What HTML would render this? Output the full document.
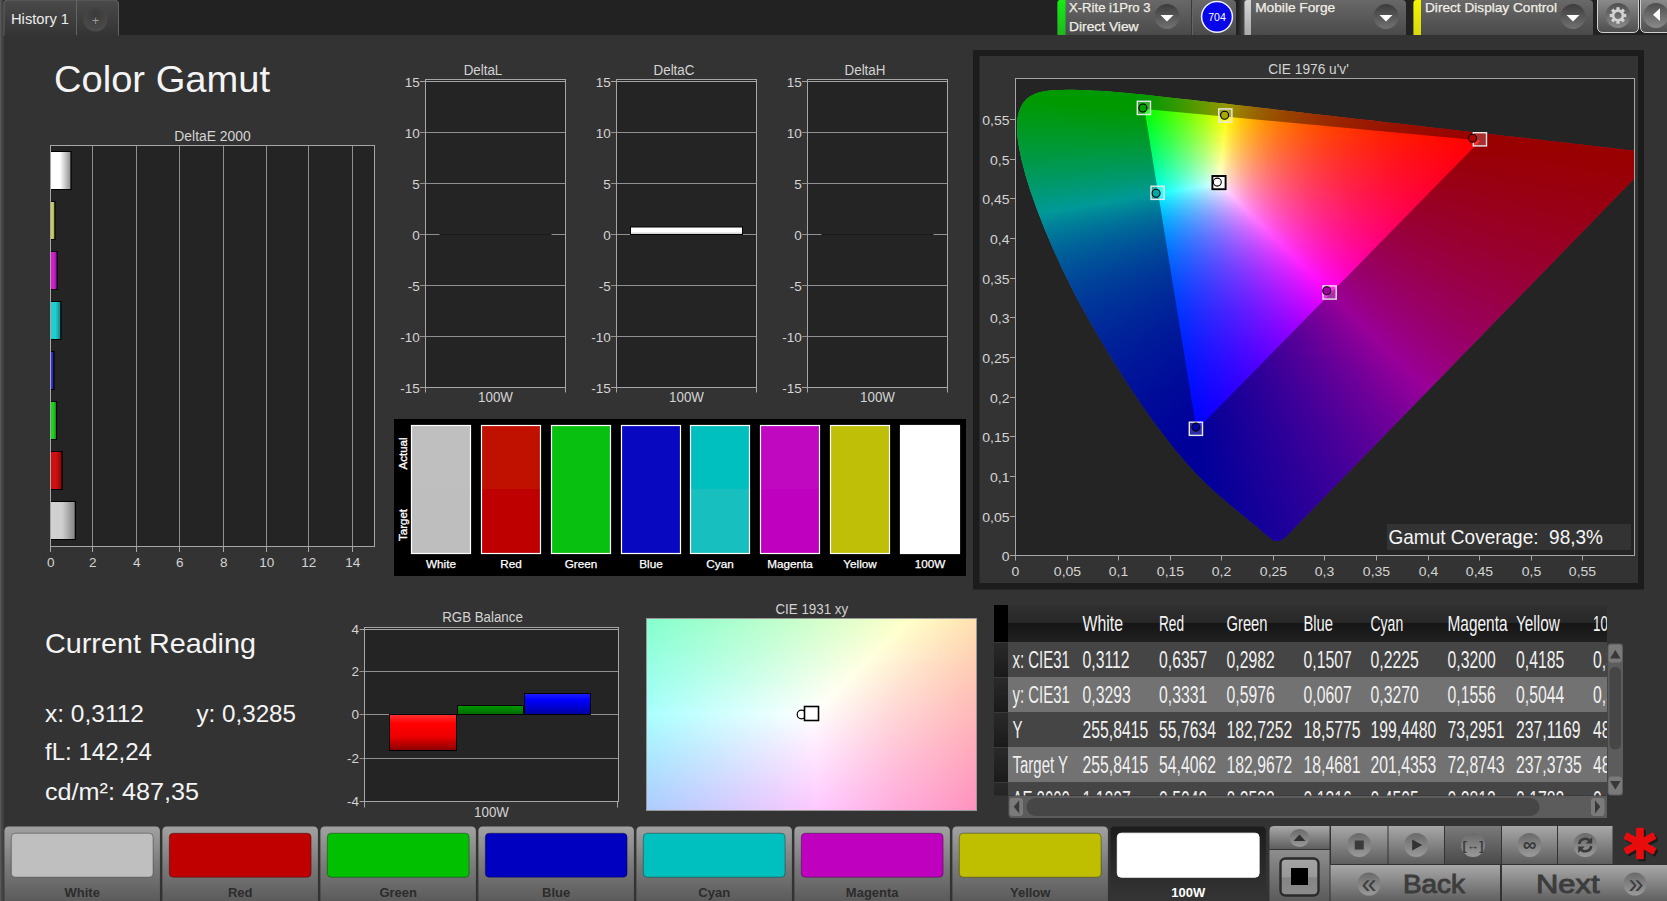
<!DOCTYPE html>
<html lang="en"><head><meta charset="utf-8"><title>Color Gamut</title>
<style>
html,body{margin:0;padding:0;background:#333;overflow:hidden}
body{width:1667px;height:901px;position:relative;font-family:"Liberation Sans",sans-serif}
svg{display:block;position:absolute;left:0;top:0}
text{font-family:"Liberation Sans",sans-serif}
</style></head><body>
<svg width="1667" height="901" viewBox="0 0 1667 901">
<defs><linearGradient id="tabg" x1="0" y1="0" x2="0" y2="1"><stop offset="0" stop-color="#4a4a4a"/><stop offset="1" stop-color="#343434"/></linearGradient>
<radialGradient id="plusg" cx="0.5" cy="0.3" r="0.7"><stop offset="0" stop-color="#3a3a3a"/><stop offset="1" stop-color="#4c4c4c"/></radialGradient>
<linearGradient id="png" x1="0" y1="0" x2="0" y2="1"><stop offset="0" stop-color="#686868"/><stop offset="1" stop-color="#4a4a4a"/></linearGradient>
<linearGradient id="ddg" x1="0" y1="0" x2="0" y2="1"><stop offset="0" stop-color="#3c3c3c"/><stop offset="1" stop-color="#727272"/></linearGradient>
<linearGradient id="btg" x1="0" y1="0" x2="0" y2="1"><stop offset="0" stop-color="#8c8c8c"/><stop offset="1" stop-color="#4e4e4e"/></linearGradient>
<linearGradient id="gst" x1="0" y1="0" x2="0" y2="1"><stop offset="0" stop-color="#10f010"/><stop offset="1" stop-color="#1fb81f"/></linearGradient>
<linearGradient id="shd"><stop offset="0" stop-color="#222222"/><stop offset="1" stop-color="#4c4c4c"/></linearGradient>
<linearGradient id="lgs" x1="0" y1="0" x2="0" y2="1"><stop offset="0" stop-color="#d6d6d6"/><stop offset="1" stop-color="#aaaaaa"/></linearGradient>
<linearGradient id="yst" x1="0" y1="0" x2="0" y2="1"><stop offset="0" stop-color="#f4f400"/><stop offset="1" stop-color="#d8d810"/></linearGradient>
<linearGradient id="ddg2" x1="0" y1="0" x2="0" y2="1"><stop offset="0" stop-color="#4e4e4e"/><stop offset="1" stop-color="#8a8a8a"/></linearGradient>
<linearGradient id="be0"><stop offset="0" stop-color="#ffffff"/><stop offset="0.45" stop-color="#ffffff"/><stop offset="1" stop-color="#8a8a8a"/></linearGradient>
<linearGradient id="be1"><stop offset="0" stop-color="#c8c864"/><stop offset="0.45" stop-color="#c8c864"/><stop offset="1" stop-color="#8a8a40"/></linearGradient>
<linearGradient id="be2"><stop offset="0" stop-color="#d020d0"/><stop offset="0.45" stop-color="#d020d0"/><stop offset="1" stop-color="#801080"/></linearGradient>
<linearGradient id="be3"><stop offset="0" stop-color="#20d0d0"/><stop offset="0.45" stop-color="#20d0d0"/><stop offset="1" stop-color="#108080"/></linearGradient>
<linearGradient id="be4"><stop offset="0" stop-color="#3030d0"/><stop offset="0.45" stop-color="#3030d0"/><stop offset="1" stop-color="#101080"/></linearGradient>
<linearGradient id="be5"><stop offset="0" stop-color="#20d020"/><stop offset="0.45" stop-color="#20d020"/><stop offset="1" stop-color="#108010"/></linearGradient>
<linearGradient id="be6"><stop offset="0" stop-color="#d01010"/><stop offset="0.45" stop-color="#d01010"/><stop offset="1" stop-color="#800808"/></linearGradient>
<linearGradient id="be7"><stop offset="0" stop-color="#d0d0d0"/><stop offset="0.45" stop-color="#d0d0d0"/><stop offset="1" stop-color="#808080"/></linearGradient>
<linearGradient id="dcb" x1="0" y1="0" x2="0" y2="1"><stop offset="0" stop-color="#ffffff"/><stop offset="0.6" stop-color="#ffffff"/><stop offset="1" stop-color="#c0c0c0"/></linearGradient>
<linearGradient id="rbr" x1="0" y1="0" x2="0" y2="1"><stop offset="0" stop-color="#ff3030"/><stop offset="0.25" stop-color="#ff0000"/><stop offset="0.6" stop-color="#f00000"/><stop offset="1" stop-color="#8a0000"/></linearGradient>
<linearGradient id="rbg" x1="0" y1="0" x2="0" y2="1"><stop offset="0" stop-color="#009a00"/><stop offset="1" stop-color="#006a00"/></linearGradient>
<linearGradient id="rbb" x1="0" y1="0" x2="0" y2="1"><stop offset="0" stop-color="#2020ff"/><stop offset="0.3" stop-color="#0000ff"/><stop offset="1" stop-color="#0000a0"/></linearGradient>
<linearGradient id="x0"><stop offset="0" stop-color="#86ffce"/><stop offset="0.4073" stop-color="#c1ffcc"/><stop offset="0.7964" stop-color="#ffffc9"/><stop offset="1" stop-color="#ffe0af"/></linearGradient><linearGradient id="x1"><stop offset="0" stop-color="#87ffd0"/><stop offset="0.4043" stop-color="#c1ffcd"/><stop offset="0.7872" stop-color="#ffffcb"/><stop offset="1" stop-color="#ffdfb0"/></linearGradient><linearGradient id="x2"><stop offset="0" stop-color="#88ffd1"/><stop offset="0.3982" stop-color="#c2ffcf"/><stop offset="0.7781" stop-color="#ffc"/><stop offset="1" stop-color="#ffddb0"/></linearGradient><linearGradient id="x3"><stop offset="0" stop-color="#89ffd2"/><stop offset="0.3951" stop-color="#c3ffd0"/><stop offset="0.769" stop-color="#ffffce"/><stop offset="1" stop-color="#ffdcb0"/></linearGradient><linearGradient id="x4"><stop offset="0" stop-color="#8affd4"/><stop offset="0.3891" stop-color="#c3ffd2"/><stop offset="0.7599" stop-color="#ffffcf"/><stop offset="1" stop-color="#ffdbb1"/></linearGradient><linearGradient id="x5"><stop offset="0" stop-color="#8bffd5"/><stop offset="0.383" stop-color="#c3ffd3"/><stop offset="0.7508" stop-color="#ffffd1"/><stop offset="1" stop-color="#ffd9b1"/></linearGradient><linearGradient id="x6"><stop offset="0" stop-color="#8cffd7"/><stop offset="0.3769" stop-color="#c4ffd5"/><stop offset="0.7416" stop-color="#ffffd3"/><stop offset="1" stop-color="#ffd8b1"/></linearGradient><linearGradient id="x7"><stop offset="0" stop-color="#8dffd8"/><stop offset="0.3739" stop-color="#c5ffd6"/><stop offset="0.7295" stop-color="#ffffd4"/><stop offset="1" stop-color="#ffd7b1"/></linearGradient><linearGradient id="x8"><stop offset="0" stop-color="#8effda"/><stop offset="0.3678" stop-color="#c5ffd8"/><stop offset="0.7204" stop-color="#ffffd6"/><stop offset="1" stop-color="#ffd5b2"/></linearGradient><linearGradient id="x9"><stop offset="0" stop-color="#8fffdb"/><stop offset="0.3647" stop-color="#c6ffd9"/><stop offset="0.7112" stop-color="#ffffd8"/><stop offset="1" stop-color="#ffd4b2"/></linearGradient><linearGradient id="x10"><stop offset="0" stop-color="#90ffdd"/><stop offset="0.3587" stop-color="#c6ffdb"/><stop offset="0.7021" stop-color="#ffffd9"/><stop offset="1" stop-color="#ffd3b2"/></linearGradient><linearGradient id="x11"><stop offset="0" stop-color="#92ffde"/><stop offset="0.3556" stop-color="#c7ffdd"/><stop offset="0.693" stop-color="#ffffdb"/><stop offset="1" stop-color="#ffd1b2"/></linearGradient><linearGradient id="x12"><stop offset="0" stop-color="#93ffe0"/><stop offset="0.3495" stop-color="#c7ffde"/><stop offset="0.6839" stop-color="#ffd"/><stop offset="1" stop-color="#ffd0b3"/></linearGradient><linearGradient id="x13"><stop offset="0" stop-color="#94ffe1"/><stop offset="0.3435" stop-color="#c8ffe0"/><stop offset="0.6748" stop-color="#ffffde"/><stop offset="1" stop-color="#ffcfb3"/></linearGradient><linearGradient id="x14"><stop offset="0" stop-color="#95ffe3"/><stop offset="0.3374" stop-color="#c8ffe1"/><stop offset="0.6657" stop-color="#ffffe0"/><stop offset="0.8267" stop-color="#ffe5c8"/><stop offset="1" stop-color="#ffcdb3"/></linearGradient><linearGradient id="x15"><stop offset="0" stop-color="#96ffe4"/><stop offset="0.3283" stop-color="#c8ffe3"/><stop offset="0.6565" stop-color="#ffffe2"/><stop offset="0.8207" stop-color="#ffe4ca"/><stop offset="1" stop-color="#ffccb3"/></linearGradient><linearGradient id="x16"><stop offset="0" stop-color="#97ffe6"/><stop offset="0.3283" stop-color="#caffe5"/><stop offset="0.6444" stop-color="#ffffe3"/><stop offset="0.8207" stop-color="#ffe3ca"/><stop offset="1" stop-color="#ffcbb4"/></linearGradient><linearGradient id="x17"><stop offset="0" stop-color="#98ffe7"/><stop offset="0.3252" stop-color="#caffe6"/><stop offset="0.6353" stop-color="#ffffe5"/><stop offset="0.8146" stop-color="#ffe2cb"/><stop offset="1" stop-color="#ffc9b4"/></linearGradient><linearGradient id="x18"><stop offset="0" stop-color="#99ffe9"/><stop offset="0.3191" stop-color="#cbffe8"/><stop offset="0.6261" stop-color="#ffffe7"/><stop offset="0.8055" stop-color="#ffe2cc"/><stop offset="1" stop-color="#ffc8b4"/></linearGradient><linearGradient id="x19"><stop offset="0" stop-color="#9affea"/><stop offset="0.3161" stop-color="#ccffea"/><stop offset="0.617" stop-color="#ffffe9"/><stop offset="0.7994" stop-color="#ffe2cd"/><stop offset="1" stop-color="#ffc7b4"/></linearGradient><linearGradient id="x20"><stop offset="0" stop-color="#9cffec"/><stop offset="0.31" stop-color="#ccffeb"/><stop offset="0.6079" stop-color="#ffffea"/><stop offset="0.7933" stop-color="#ffe1ce"/><stop offset="1" stop-color="#ffc6b5"/></linearGradient><linearGradient id="x21"><stop offset="0" stop-color="#9dffee"/><stop offset="0.304" stop-color="#cdffed"/><stop offset="0.5988" stop-color="#ffffec"/><stop offset="0.7903" stop-color="#ffe0cf"/><stop offset="1" stop-color="#ffc4b5"/></linearGradient><linearGradient id="x22"><stop offset="0" stop-color="#9effef"/><stop offset="0.5897" stop-color="#ffe"/><stop offset="0.7842" stop-color="#ffdfd0"/><stop offset="1" stop-color="#ffc3b5"/></linearGradient><linearGradient id="x23"><stop offset="0" stop-color="#9ffff1"/><stop offset="0.5805" stop-color="#fffff0"/><stop offset="0.7781" stop-color="#ffdfd1"/><stop offset="1" stop-color="#ffc2b5"/></linearGradient><linearGradient id="x24"><stop offset="0" stop-color="#a0fff2"/><stop offset="0.5684" stop-color="#fffff2"/><stop offset="0.7781" stop-color="#ffddd1"/><stop offset="1" stop-color="#ffc0b6"/></linearGradient><linearGradient id="x25"><stop offset="0" stop-color="#a2fff4"/><stop offset="0.5593" stop-color="#fffff3"/><stop offset="0.772" stop-color="#ffddd2"/><stop offset="1" stop-color="#ffbfb6"/></linearGradient><linearGradient id="x26"><stop offset="0" stop-color="#a3fff6"/><stop offset="0.5502" stop-color="#fffff5"/><stop offset="0.766" stop-color="#ffdcd4"/><stop offset="1" stop-color="#ffbeb6"/></linearGradient><linearGradient id="x27"><stop offset="0" stop-color="#a4fff7"/><stop offset="0.541" stop-color="#fffff7"/><stop offset="0.7599" stop-color="#ffdcd5"/><stop offset="1" stop-color="#ffbdb6"/></linearGradient><linearGradient id="x28"><stop offset="0" stop-color="#a5fff9"/><stop offset="0.5319" stop-color="#fffff9"/><stop offset="0.7538" stop-color="#ffdbd6"/><stop offset="1" stop-color="#ffbbb7"/></linearGradient><linearGradient id="x29"><stop offset="0" stop-color="#a7fffb"/><stop offset="0.5228" stop-color="#fffffb"/><stop offset="0.7477" stop-color="#ffdad7"/><stop offset="1" stop-color="#ffbab7"/></linearGradient><linearGradient id="x30"><stop offset="0" stop-color="#a8fffd"/><stop offset="0.5137" stop-color="#fffffc"/><stop offset="0.7416" stop-color="#ffdad8"/><stop offset="1" stop-color="#ffb9b7"/></linearGradient><linearGradient id="x31"><stop offset="0" stop-color="#a9fffe"/><stop offset="0.5046" stop-color="#fffffe"/><stop offset="0.7356" stop-color="#ffd9d9"/><stop offset="1" stop-color="#ffb8b7"/></linearGradient><linearGradient id="x32"><stop offset="0" stop-color="#aafeff"/><stop offset="0.5015" stop-color="#fffeff"/><stop offset="0.7356" stop-color="#ffd8d9"/><stop offset="1" stop-color="#ffb7b8"/></linearGradient><linearGradient id="x33"><stop offset="0" stop-color="#aafcff"/><stop offset="0.5015" stop-color="#fffcff"/><stop offset="0.7356" stop-color="#ffd6d9"/><stop offset="1" stop-color="#ffb5b8"/></linearGradient><linearGradient id="x34"><stop offset="0" stop-color="#aafaff"/><stop offset="0.5015" stop-color="#fffaff"/><stop offset="0.7386" stop-color="#ffd4d9"/><stop offset="1" stop-color="#ffb4b8"/></linearGradient><linearGradient id="x35"><stop offset="0" stop-color="#aaf9ff"/><stop offset="0.5046" stop-color="#fff8ff"/><stop offset="0.7386" stop-color="#ffd3d9"/><stop offset="1" stop-color="#ffb3b8"/></linearGradient><linearGradient id="x36"><stop offset="0" stop-color="#aaf7ff"/><stop offset="0.5046" stop-color="#fff6ff"/><stop offset="0.7386" stop-color="#ffd2d9"/><stop offset="1" stop-color="#ffb2b9"/></linearGradient><linearGradient id="x37"><stop offset="0" stop-color="#aaf5ff"/><stop offset="0.5046" stop-color="#fff4ff"/><stop offset="0.7386" stop-color="#ffd0da"/><stop offset="1" stop-color="#ffb0b9"/></linearGradient><linearGradient id="x38"><stop offset="0" stop-color="#aaf4ff"/><stop offset="0.5046" stop-color="#fff3ff"/><stop offset="0.7386" stop-color="#ffcfda"/><stop offset="1" stop-color="#ffafb9"/></linearGradient><linearGradient id="x39"><stop offset="0" stop-color="#aaf2ff"/><stop offset="0.5076" stop-color="#fff1ff"/><stop offset="0.7386" stop-color="#ffcdda"/><stop offset="1" stop-color="#ffaeb9"/></linearGradient><linearGradient id="x40"><stop offset="0" stop-color="#abf0ff"/><stop offset="0.5076" stop-color="#ffefff"/><stop offset="0.7386" stop-color="#ffccda"/><stop offset="1" stop-color="#ffadba"/></linearGradient><linearGradient id="x41"><stop offset="0" stop-color="#abefff"/><stop offset="0.5076" stop-color="#ffedff"/><stop offset="0.7386" stop-color="#ffcbda"/><stop offset="1" stop-color="#ffacba"/></linearGradient><linearGradient id="x42"><stop offset="0" stop-color="#abedff"/><stop offset="0.5076" stop-color="#ffebff"/><stop offset="0.7416" stop-color="#ffc9da"/><stop offset="1" stop-color="#ffabba"/></linearGradient><linearGradient id="x43"><stop offset="0" stop-color="#abebff"/><stop offset="0.5106" stop-color="#ffe9ff"/><stop offset="0.7416" stop-color="#ffc7da"/><stop offset="1" stop-color="#ffa9ba"/></linearGradient><linearGradient id="x44"><stop offset="0" stop-color="#abeaff"/><stop offset="0.5106" stop-color="#ffe8ff"/><stop offset="0.7416" stop-color="#ffc6db"/><stop offset="1" stop-color="#ffa8bb"/></linearGradient><linearGradient id="x45"><stop offset="0" stop-color="#abe8ff"/><stop offset="0.5106" stop-color="#ffe6ff"/><stop offset="0.7416" stop-color="#ffc5db"/><stop offset="1" stop-color="#ffa7bb"/></linearGradient><linearGradient id="x46"><stop offset="0" stop-color="#abe6ff"/><stop offset="0.5106" stop-color="#ffe4ff"/><stop offset="0.7416" stop-color="#ffc3db"/><stop offset="1" stop-color="#ffa6bb"/></linearGradient><linearGradient id="x47"><stop offset="0" stop-color="#abe5ff"/><stop offset="0.5137" stop-color="#ffe2ff"/><stop offset="0.7416" stop-color="#ffc2db"/><stop offset="1" stop-color="#ffa5bb"/></linearGradient><linearGradient id="x48"><stop offset="0" stop-color="#abe3ff"/><stop offset="0.5137" stop-color="#ffe1ff"/><stop offset="0.7416" stop-color="#ffc1db"/><stop offset="1" stop-color="#ffa4bb"/></linearGradient><linearGradient id="x49"><stop offset="0" stop-color="#abe2ff"/><stop offset="0.5137" stop-color="#ffdfff"/><stop offset="0.7416" stop-color="#ffbfdc"/><stop offset="1" stop-color="#ffa2bc"/></linearGradient><linearGradient id="x50"><stop offset="0" stop-color="#ace0ff"/><stop offset="0.5137" stop-color="#ffdeff"/><stop offset="0.7447" stop-color="#ffbddb"/><stop offset="1" stop-color="#ffa1bc"/></linearGradient><linearGradient id="x51"><stop offset="0" stop-color="#acdeff"/><stop offset="0.5137" stop-color="#ffdcff"/><stop offset="0.7477" stop-color="#ffbcdb"/><stop offset="1" stop-color="#ffa0bc"/></linearGradient><linearGradient id="x52"><stop offset="0" stop-color="#acddff"/><stop offset="0.5167" stop-color="#ffdaff"/><stop offset="0.7447" stop-color="#ffbbdc"/><stop offset="1" stop-color="#ff9fbc"/></linearGradient><linearGradient id="x53"><stop offset="0" stop-color="#acdbff"/><stop offset="0.5167" stop-color="#ffd9ff"/><stop offset="0.7447" stop-color="#ffbadc"/><stop offset="1" stop-color="#ff9ebd"/></linearGradient><linearGradient id="x54"><stop offset="0" stop-color="#acdaff"/><stop offset="0.5167" stop-color="#ffd7ff"/><stop offset="0.7447" stop-color="#ffb8dc"/><stop offset="1" stop-color="#ff9dbd"/></linearGradient><linearGradient id="x55"><stop offset="0" stop-color="#acd8ff"/><stop offset="0.5167" stop-color="#ffd5ff"/><stop offset="0.7477" stop-color="#ffb7dc"/><stop offset="1" stop-color="#ff9cbd"/></linearGradient><linearGradient id="x56"><stop offset="0" stop-color="#acd7ff"/><stop offset="0.5198" stop-color="#ffd3ff"/><stop offset="0.7477" stop-color="#ffb5dc"/><stop offset="1" stop-color="#ff9bbd"/></linearGradient><linearGradient id="x57"><stop offset="0" stop-color="#acd5ff"/><stop offset="0.5198" stop-color="#ffd2ff"/><stop offset="0.7477" stop-color="#ffb4dc"/><stop offset="1" stop-color="#ff99bd"/></linearGradient><linearGradient id="x58"><stop offset="0" stop-color="#acd4ff"/><stop offset="0.5198" stop-color="#ffd0ff"/><stop offset="0.7477" stop-color="#ffb3dc"/><stop offset="1" stop-color="#ff98be"/></linearGradient><linearGradient id="x59"><stop offset="0" stop-color="#acd2ff"/><stop offset="0.5198" stop-color="#ffcfff"/><stop offset="0.7508" stop-color="#ffb1dc"/><stop offset="1" stop-color="#ff97be"/></linearGradient><linearGradient id="x60"><stop offset="0" stop-color="#add1ff"/><stop offset="0.5228" stop-color="#ffcdff"/><stop offset="0.7477" stop-color="#ffb0dd"/><stop offset="1" stop-color="#ff96be"/></linearGradient><linearGradient id="x61"><stop offset="0" stop-color="#adcfff"/><stop offset="0.5228" stop-color="#ffcbff"/><stop offset="0.7477" stop-color="#ffafdd"/><stop offset="1" stop-color="#ff95be"/></linearGradient><linearGradient id="x62"><stop offset="0" stop-color="#adceff"/><stop offset="0.5228" stop-color="#ffcaff"/><stop offset="0.7477" stop-color="#ffaddd"/><stop offset="1" stop-color="#ff94bf"/></linearGradient><linearGradient id="x63"><stop offset="0" stop-color="#adccff"/><stop offset="0.5228" stop-color="#ffc9ff"/><stop offset="0.7508" stop-color="#ffacdd"/><stop offset="1" stop-color="#ff93bf"/></linearGradient>
<linearGradient id="u0"><stop offset="0" stop-color="#0f0"/><stop offset="1" stop-color="#0f0"/></linearGradient><linearGradient id="u1"><stop offset="0" stop-color="#0f0"/><stop offset="1" stop-color="#0f0"/></linearGradient><linearGradient id="u2"><stop offset="0" stop-color="#0f0"/><stop offset="1" stop-color="#0f0"/></linearGradient><linearGradient id="u3"><stop offset="0" stop-color="#0f0"/><stop offset="0.8702" stop-color="#0f0"/><stop offset="1" stop-color="#29ff00"/></linearGradient><linearGradient id="u4"><stop offset="0" stop-color="#0f0"/><stop offset="0.7697" stop-color="#0f0"/><stop offset="0.875" stop-color="#25ff00"/><stop offset="1" stop-color="#58ff00"/></linearGradient><linearGradient id="u5"><stop offset="0" stop-color="#00ff02"/><stop offset="0.6977" stop-color="#0f0"/><stop offset="0.8547" stop-color="#4f0"/><stop offset="1" stop-color="#8dff00"/></linearGradient><linearGradient id="u6"><stop offset="0" stop-color="#00ff06"/><stop offset="0.1979" stop-color="#0f0"/><stop offset="0.6354" stop-color="#0f0"/><stop offset="0.7292" stop-color="#2cff00"/><stop offset="0.8229" stop-color="#5dff00"/><stop offset="0.9115" stop-color="#90ff00"/><stop offset="1" stop-color="#caff00"/></linearGradient><linearGradient id="u7"><stop offset="0" stop-color="#00ff09"/><stop offset="0.2857" stop-color="#0f0"/><stop offset="0.5857" stop-color="#0f0"/><stop offset="0.6714" stop-color="#2bff00"/><stop offset="0.7714" stop-color="#6f0"/><stop offset="0.881" stop-color="#aeff00"/><stop offset="0.9857" stop-color="#feff00"/><stop offset="1" stop-color="#fff400"/></linearGradient><linearGradient id="u8"><stop offset="0" stop-color="#00ff0d"/><stop offset="0.3581" stop-color="#0f0"/><stop offset="0.5459" stop-color="#0f0"/><stop offset="0.6463" stop-color="#3bff00"/><stop offset="0.738" stop-color="#7f0"/><stop offset="0.8253" stop-color="#b9ff00"/><stop offset="0.9083" stop-color="#ff0"/><stop offset="0.952" stop-color="#ffdc00"/><stop offset="1" stop-color="#ffbd00"/></linearGradient><linearGradient id="u9"><stop offset="0" stop-color="#00ff10"/><stop offset="0.4211" stop-color="#0f0"/><stop offset="0.5101" stop-color="#0f0"/><stop offset="0.5992" stop-color="#38ff00"/><stop offset="0.6842" stop-color="#74ff00"/><stop offset="0.7652" stop-color="#b5ff00"/><stop offset="0.8462" stop-color="#fffe00"/><stop offset="0.8785" stop-color="#ffe100"/><stop offset="0.915" stop-color="#ffc600"/><stop offset="0.9555" stop-color="#ffae00"/><stop offset="1" stop-color="#ff9700"/></linearGradient><linearGradient id="u10"><stop offset="0" stop-color="#00ff14"/><stop offset="0.4774" stop-color="#0f0"/><stop offset="0.5564" stop-color="#34ff00"/><stop offset="0.6391" stop-color="#74ff00"/><stop offset="0.7105" stop-color="#b2ff00"/><stop offset="0.7895" stop-color="#fffd00"/><stop offset="0.8308" stop-color="#ffd700"/><stop offset="0.8797" stop-color="#ffb400"/><stop offset="0.9361" stop-color="#ff9500"/><stop offset="1" stop-color="#ff7900"/></linearGradient><linearGradient id="u11"><stop offset="0" stop-color="#00ff17"/><stop offset="0.4542" stop-color="#01ff04"/><stop offset="0.5317" stop-color="#39ff00"/><stop offset="0.6021" stop-color="#74ff00"/><stop offset="0.6655" stop-color="#afff00"/><stop offset="0.7394" stop-color="#fdff00"/><stop offset="0.743" stop-color="#fffd00"/><stop offset="0.7923" stop-color="#ffcd00"/><stop offset="0.8521" stop-color="#ffa300"/><stop offset="0.919" stop-color="#ff8100"/><stop offset="1" stop-color="#ff6300"/></linearGradient><linearGradient id="u12"><stop offset="0" stop-color="#00ff1b"/><stop offset="0.4286" stop-color="#00ff09"/><stop offset="0.5017" stop-color="#39ff04"/><stop offset="0.5714" stop-color="#7f0"/><stop offset="0.6379" stop-color="#baff00"/><stop offset="0.6977" stop-color="#feff00"/><stop offset="0.7276" stop-color="#ffdf00"/><stop offset="0.7542" stop-color="#ffc700"/><stop offset="0.7874" stop-color="#ffae00"/><stop offset="0.8206" stop-color="#f90"/><stop offset="0.9003" stop-color="#ff7200"/><stop offset="1" stop-color="#ff5200"/></linearGradient><linearGradient id="u13"><stop offset="0" stop-color="#00ff1e"/><stop offset="0.4062" stop-color="#00ff0d"/><stop offset="0.4688" stop-color="#33ff0a"/><stop offset="0.5375" stop-color="#73ff05"/><stop offset="0.6" stop-color="#b6ff00"/><stop offset="0.6594" stop-color="#ff0"/><stop offset="0.6875" stop-color="#ffde00"/><stop offset="0.7188" stop-color="#ffc000"/><stop offset="0.7531" stop-color="#ffa600"/><stop offset="0.7937" stop-color="#ff8d00"/><stop offset="0.8375" stop-color="#f70"/><stop offset="0.8844" stop-color="#ff6400"/><stop offset="1" stop-color="#ff4200"/></linearGradient><linearGradient id="u14"><stop offset="0" stop-color="#0f2"/><stop offset="0.3887" stop-color="#01ff12"/><stop offset="0.454" stop-color="#3bff0e"/><stop offset="0.5134" stop-color="#76ff0a"/><stop offset="0.5697" stop-color="#b7ff06"/><stop offset="0.6261" stop-color="#fffe01"/><stop offset="0.6558" stop-color="#ffda00"/><stop offset="0.6884" stop-color="#ffba00"/><stop offset="0.727" stop-color="#ff9d00"/><stop offset="0.7685" stop-color="#ff8400"/><stop offset="0.816" stop-color="#ff6d00"/><stop offset="0.8694" stop-color="#ff5900"/><stop offset="0.9318" stop-color="#ff4600"/><stop offset="1" stop-color="#ff3600"/></linearGradient><linearGradient id="u15"><stop offset="0" stop-color="#00ff25"/><stop offset="0.369" stop-color="#00ff17"/><stop offset="0.4282" stop-color="#37ff13"/><stop offset="0.4873" stop-color="#76ff0f"/><stop offset="0.5408" stop-color="#b7ff0b"/><stop offset="0.5915" stop-color="#fcff07"/><stop offset="0.5944" stop-color="#fffe07"/><stop offset="0.6282" stop-color="#ffd303"/><stop offset="0.662" stop-color="#ffb200"/><stop offset="0.7014" stop-color="#ff9400"/><stop offset="0.7465" stop-color="#ff7a00"/><stop offset="0.7972" stop-color="#ff6300"/><stop offset="0.8563" stop-color="#ff4e00"/><stop offset="0.9239" stop-color="#ff3b00"/><stop offset="1" stop-color="#ff2b00"/></linearGradient><linearGradient id="u16"><stop offset="0" stop-color="#00ff29"/><stop offset="0.3522" stop-color="#00ff1b"/><stop offset="0.4059" stop-color="#34ff19"/><stop offset="0.4624" stop-color="#73ff15"/><stop offset="0.5161" stop-color="#b7ff11"/><stop offset="0.5645" stop-color="#fdff0d"/><stop offset="0.6022" stop-color="#ffcf08"/><stop offset="0.6371" stop-color="#ffad04"/><stop offset="0.6774" stop-color="#ff8e01"/><stop offset="0.7258" stop-color="#ff7200"/><stop offset="0.7796" stop-color="#ff5a00"/><stop offset="0.8441" stop-color="#ff4500"/><stop offset="0.9167" stop-color="#ff3200"/><stop offset="1" stop-color="#f20"/></linearGradient><linearGradient id="u17"><stop offset="0" stop-color="#00ff2c"/><stop offset="0.3393" stop-color="#01ff20"/><stop offset="0.3933" stop-color="#39ff1d"/><stop offset="0.4447" stop-color="#76ff1a"/><stop offset="0.4936" stop-color="#b7ff17"/><stop offset="0.5398" stop-color="#feff13"/><stop offset="0.5758" stop-color="#ffce0d"/><stop offset="0.6118" stop-color="#ffa908"/><stop offset="0.6555" stop-color="#ff8804"/><stop offset="0.7044" stop-color="#ff6c01"/><stop offset="0.7635" stop-color="#ff5300"/><stop offset="0.8303" stop-color="#ff3d00"/><stop offset="0.91" stop-color="#ff2b00"/><stop offset="1" stop-color="#ff1b00"/></linearGradient><linearGradient id="u18"><stop offset="0" stop-color="#00ff30"/><stop offset="0.3243" stop-color="#00ff25"/><stop offset="0.3759" stop-color="#39ff23"/><stop offset="0.4251" stop-color="#76ff20"/><stop offset="0.4717" stop-color="#b8ff1d"/><stop offset="0.516" stop-color="#ffff1a"/><stop offset="0.5504" stop-color="#ffcd12"/><stop offset="0.5872" stop-color="#ffa60d"/><stop offset="0.6314" stop-color="#ff8408"/><stop offset="0.6855" stop-color="#ff6503"/><stop offset="0.7469" stop-color="#ff4c00"/><stop offset="0.8182" stop-color="#ff3600"/><stop offset="0.9017" stop-color="#ff2400"/><stop offset="1" stop-color="#ff1400"/></linearGradient><linearGradient id="u19"><stop offset="0" stop-color="#00ff34"/><stop offset="0.3113" stop-color="#00ff2a"/><stop offset="0.3585" stop-color="#35ff28"/><stop offset="0.408" stop-color="#75ff25"/><stop offset="0.4528" stop-color="#b8ff23"/><stop offset="0.4953" stop-color="#ffff20"/><stop offset="0.5118" stop-color="#ffe41b"/><stop offset="0.5283" stop-color="#ffcd18"/><stop offset="0.5684" stop-color="#ffa110"/><stop offset="0.6132" stop-color="#ff7e0b"/><stop offset="0.6675" stop-color="#ff6006"/><stop offset="0.7311" stop-color="#ff4601"/><stop offset="0.8066" stop-color="#ff3000"/><stop offset="0.8962" stop-color="#ff1d00"/><stop offset="1" stop-color="#ff0e00"/></linearGradient><linearGradient id="u20"><stop offset="0" stop-color="#00ff37"/><stop offset="0.3009" stop-color="#01ff2f"/><stop offset="0.3484" stop-color="#3aff2d"/><stop offset="0.3914" stop-color="#75ff2b"/><stop offset="0.4321" stop-color="#b4ff29"/><stop offset="0.4751" stop-color="#fffe26"/><stop offset="0.491" stop-color="#ffe321"/><stop offset="0.509" stop-color="#ffc91c"/><stop offset="0.5475" stop-color="#ff9e14"/><stop offset="0.595" stop-color="#ff790e"/><stop offset="0.6493" stop-color="#ff5a08"/><stop offset="0.7149" stop-color="#ff4103"/><stop offset="0.7941" stop-color="#ff2a00"/><stop offset="0.8891" stop-color="#ff1800"/><stop offset="1" stop-color="#ff0800"/></linearGradient><linearGradient id="u21"><stop offset="0" stop-color="#00ff3b"/><stop offset="0.2898" stop-color="#00ff34"/><stop offset="0.3355" stop-color="#3aff32"/><stop offset="0.3769" stop-color="#75ff31"/><stop offset="0.4139" stop-color="#b1ff2f"/><stop offset="0.4575" stop-color="#fffd2c"/><stop offset="0.4728" stop-color="#ffe227"/><stop offset="0.4902" stop-color="#ffc822"/><stop offset="0.5294" stop-color="#ff9b18"/><stop offset="0.5773" stop-color="#ff7511"/><stop offset="0.634" stop-color="#ff560a"/><stop offset="0.7015" stop-color="#ff3b05"/><stop offset="0.7843" stop-color="#ff2500"/><stop offset="0.8824" stop-color="#ff1300"/><stop offset="1" stop-color="#ff0400"/></linearGradient><linearGradient id="u22"><stop offset="0" stop-color="#00ff3f"/><stop offset="0.2788" stop-color="#00ff39"/><stop offset="0.3187" stop-color="#33ff38"/><stop offset="0.3606" stop-color="#72ff37"/><stop offset="0.3962" stop-color="#adff35"/><stop offset="0.4382" stop-color="#fdff34"/><stop offset="0.4403" stop-color="#fffc33"/><stop offset="0.457" stop-color="#ffdd2c"/><stop offset="0.4738" stop-color="#ffc426"/><stop offset="0.4927" stop-color="#ffac21"/><stop offset="0.5136" stop-color="#ff961c"/><stop offset="0.5618" stop-color="#ff7013"/><stop offset="0.6205" stop-color="#ff500c"/><stop offset="0.6918" stop-color="#ff3506"/><stop offset="0.7778" stop-color="#ff2001"/><stop offset="0.8868" stop-color="#ff0d00"/><stop offset="1" stop-color="#f00"/></linearGradient><linearGradient id="u23"><stop offset="0" stop-color="#00ff43"/><stop offset="0.2713" stop-color="#01ff3e"/><stop offset="0.3117" stop-color="#39ff3d"/><stop offset="0.3482" stop-color="#71ff3d"/><stop offset="0.3866" stop-color="#b5ff3b"/><stop offset="0.4231" stop-color="#feff3a"/><stop offset="0.4251" stop-color="#fffb39"/><stop offset="0.4413" stop-color="#ffdd32"/><stop offset="0.4595" stop-color="#ffc02b"/><stop offset="0.4798" stop-color="#ffa725"/><stop offset="0.5" stop-color="#ff911f"/><stop offset="0.5486" stop-color="#ff6b16"/><stop offset="0.6093" stop-color="#ff4b0e"/><stop offset="0.6883" stop-color="#ff2f07"/><stop offset="0.7834" stop-color="#ff1802"/><stop offset="0.9393" stop-color="#ff0200"/><stop offset="1" stop-color="#f00"/></linearGradient><linearGradient id="u24"><stop offset="0" stop-color="#00ff46"/><stop offset="0.2622" stop-color="#0f4"/><stop offset="0.3033" stop-color="#3bff43"/><stop offset="0.3405" stop-color="#78ff42"/><stop offset="0.3757" stop-color="#b9ff42"/><stop offset="0.409" stop-color="#ffff41"/><stop offset="0.4247" stop-color="#ffdf39"/><stop offset="0.4423" stop-color="#ffc231"/><stop offset="0.4618" stop-color="#ffa82a"/><stop offset="0.4834" stop-color="#ff9024"/><stop offset="0.5068" stop-color="#ff7c1e"/><stop offset="0.5342" stop-color="#ff6819"/><stop offset="0.5969" stop-color="#ff4710"/><stop offset="0.681" stop-color="#ff2a08"/><stop offset="0.7867" stop-color="#ff1202"/><stop offset="0.9178" stop-color="#f00"/><stop offset="1" stop-color="#f00"/></linearGradient><linearGradient id="u25"><stop offset="0" stop-color="#00ff4a"/><stop offset="0.2533" stop-color="#00ff49"/><stop offset="0.2892" stop-color="#35ff49"/><stop offset="0.327" stop-color="#74ff48"/><stop offset="0.3611" stop-color="#b6ff48"/><stop offset="0.3951" stop-color="#fffe48"/><stop offset="0.4121" stop-color="#ffdb3e"/><stop offset="0.4291" stop-color="#ffbe35"/><stop offset="0.448" stop-color="#ffa52e"/><stop offset="0.4707" stop-color="#ff8c27"/><stop offset="0.4953" stop-color="#ff7621"/><stop offset="0.5217" stop-color="#ff631b"/><stop offset="0.586" stop-color="#ff4212"/><stop offset="0.6767" stop-color="#ff2409"/><stop offset="0.794" stop-color="#ff0c02"/><stop offset="0.8828" stop-color="#f00"/><stop offset="1" stop-color="#f00"/></linearGradient><linearGradient id="u26"><stop offset="0" stop-color="#00ff4e"/><stop offset="0.2473" stop-color="#01ff4e"/><stop offset="0.2839" stop-color="#3aff4e"/><stop offset="0.3168" stop-color="#74ff4f"/><stop offset="0.348" stop-color="#b2ff4f"/><stop offset="0.3828" stop-color="#fffd4e"/><stop offset="0.3993" stop-color="#ffda43"/><stop offset="0.4158" stop-color="#ffbe3b"/><stop offset="0.4359" stop-color="#ffa232"/><stop offset="0.4579" stop-color="#ff892b"/><stop offset="0.4817" stop-color="#ff7424"/><stop offset="0.5092" stop-color="#ff601e"/><stop offset="0.5751" stop-color="#ff3e13"/><stop offset="0.6722" stop-color="#ff1f0a"/><stop offset="0.7985" stop-color="#ff0703"/><stop offset="0.8516" stop-color="#f00"/><stop offset="1" stop-color="#f00"/></linearGradient><linearGradient id="u27"><stop offset="0" stop-color="#00ff52"/><stop offset="0.238" stop-color="#00ff54"/><stop offset="0.2735" stop-color="#39ff54"/><stop offset="0.3055" stop-color="#74ff55"/><stop offset="0.3339" stop-color="#aeff55"/><stop offset="0.3677" stop-color="#fdff56"/><stop offset="0.3694" stop-color="#fffc55"/><stop offset="0.3854" stop-color="#ffd949"/><stop offset="0.4032" stop-color="#ffba3f"/><stop offset="0.4227" stop-color="#ff9e36"/><stop offset="0.4458" stop-color="#ff852e"/><stop offset="0.4707" stop-color="#ff6f26"/><stop offset="0.4991" stop-color="#ff5b20"/><stop offset="0.5648" stop-color="#ff3a15"/><stop offset="0.6128" stop-color="#ff290f"/><stop offset="0.6696" stop-color="#ff1a0a"/><stop offset="0.8064" stop-color="#ff0203"/><stop offset="1" stop-color="#f00"/></linearGradient><linearGradient id="u28"><stop offset="0" stop-color="#00ff56"/><stop offset="0.231" stop-color="#00ff59"/><stop offset="0.2621" stop-color="#33ff5a"/><stop offset="0.2948" stop-color="#70ff5b"/><stop offset="0.3224" stop-color="#abff5c"/><stop offset="0.3569" stop-color="#feff5d"/><stop offset="0.3586" stop-color="#fffc5c"/><stop offset="0.3741" stop-color="#ffd84f"/><stop offset="0.3914" stop-color="#ffb944"/><stop offset="0.4121" stop-color="#ff9b3a"/><stop offset="0.4345" stop-color="#ff8231"/><stop offset="0.4603" stop-color="#ff6b29"/><stop offset="0.4879" stop-color="#ff5822"/><stop offset="0.5207" stop-color="#ff451c"/><stop offset="0.5569" stop-color="#ff3516"/><stop offset="0.6034" stop-color="#ff2611"/><stop offset="0.6586" stop-color="#ff170c"/><stop offset="0.7931" stop-color="#ff0004"/><stop offset="0.8845" stop-color="#f00"/><stop offset="1" stop-color="#f00"/></linearGradient><linearGradient id="u29"><stop offset="0" stop-color="#00ff5a"/><stop offset="0.2258" stop-color="#01ff5f"/><stop offset="0.2592" stop-color="#3bff60"/><stop offset="0.2893" stop-color="#77ff62"/><stop offset="0.3194" stop-color="#bbff63"/><stop offset="0.3462" stop-color="#ffff64"/><stop offset="0.3629" stop-color="#ffd756"/><stop offset="0.3796" stop-color="#ffb84a"/><stop offset="0.3997" stop-color="#ff9a3f"/><stop offset="0.4214" stop-color="#ff8135"/><stop offset="0.4465" stop-color="#ff6a2d"/><stop offset="0.4766" stop-color="#ff5525"/><stop offset="0.5084" stop-color="#ff431e"/><stop offset="0.5452" stop-color="#ff3318"/><stop offset="0.6405" stop-color="#ff160e"/><stop offset="0.7659" stop-color="#ff0005"/><stop offset="0.893" stop-color="#f00"/><stop offset="1" stop-color="#f00"/></linearGradient><linearGradient id="u30"><stop offset="0" stop-color="#00ff5e"/><stop offset="0.2182" stop-color="#00ff65"/><stop offset="0.2508" stop-color="#3bff66"/><stop offset="0.2801" stop-color="#77ff68"/><stop offset="0.3078" stop-color="#b7ff6a"/><stop offset="0.3355" stop-color="#fffe6b"/><stop offset="0.3502" stop-color="#ffda5d"/><stop offset="0.3681" stop-color="#ffb74f"/><stop offset="0.3876" stop-color="#ff9a44"/><stop offset="0.4104" stop-color="#ff7f39"/><stop offset="0.4365" stop-color="#ff672f"/><stop offset="0.4658" stop-color="#ff5227"/><stop offset="0.4984" stop-color="#ff4020"/><stop offset="0.5358" stop-color="#ff301a"/><stop offset="0.6254" stop-color="#ff150f"/><stop offset="0.741" stop-color="#ff0007"/><stop offset="0.9023" stop-color="#f00"/><stop offset="1" stop-color="#f00"/></linearGradient><linearGradient id="u31"><stop offset="0" stop-color="#00ff62"/><stop offset="0.2168" stop-color="#00ff6b"/><stop offset="0.246" stop-color="#34ff6c"/><stop offset="0.2767" stop-color="#73ff6e"/><stop offset="0.3042" stop-color="#b3ff71"/><stop offset="0.3333" stop-color="#fffe73"/><stop offset="0.3495" stop-color="#ffd662"/><stop offset="0.3673" stop-color="#ffb354"/><stop offset="0.3867" stop-color="#ff9647"/><stop offset="0.4094" stop-color="#ff7c3c"/><stop offset="0.4353" stop-color="#ff6533"/><stop offset="0.4644" stop-color="#ff502a"/><stop offset="0.4968" stop-color="#ff3e23"/><stop offset="0.534" stop-color="#ff2e1c"/><stop offset="0.6214" stop-color="#ff1411"/><stop offset="0.733" stop-color="#ff0009"/><stop offset="0.9207" stop-color="#f00"/><stop offset="1" stop-color="#f00"/></linearGradient><linearGradient id="u32"><stop offset="0" stop-color="#0f6"/><stop offset="0.2184" stop-color="#01ff71"/><stop offset="0.2492" stop-color="#3aff73"/><stop offset="0.2767" stop-color="#73ff75"/><stop offset="0.3026" stop-color="#afff78"/><stop offset="0.3317" stop-color="#fdff7b"/><stop offset="0.3333" stop-color="#fffd7a"/><stop offset="0.3495" stop-color="#ffd568"/><stop offset="0.3673" stop-color="#ffb359"/><stop offset="0.3867" stop-color="#ff964c"/><stop offset="0.4094" stop-color="#ff7b41"/><stop offset="0.4353" stop-color="#ff6436"/><stop offset="0.4644" stop-color="#ff4f2d"/><stop offset="0.4968" stop-color="#ff3e25"/><stop offset="0.534" stop-color="#ff2e1e"/><stop offset="0.6197" stop-color="#ff1413"/><stop offset="0.7298" stop-color="#ff000a"/><stop offset="1" stop-color="#f00"/></linearGradient><linearGradient id="u33"><stop offset="0" stop-color="#00ff6a"/><stop offset="0.2172" stop-color="#0f7"/><stop offset="0.248" stop-color="#39ff79"/><stop offset="0.2755" stop-color="#73ff7c"/><stop offset="0.2998" stop-color="#acff7f"/><stop offset="0.3306" stop-color="#feff82"/><stop offset="0.3323" stop-color="#fffc81"/><stop offset="0.3468" stop-color="#ffd770"/><stop offset="0.3647" stop-color="#ffb460"/><stop offset="0.3841" stop-color="#ff9752"/><stop offset="0.4068" stop-color="#ff7c46"/><stop offset="0.4327" stop-color="#ff643b"/><stop offset="0.4619" stop-color="#ff5031"/><stop offset="0.4943" stop-color="#ff3e29"/><stop offset="0.5316" stop-color="#ff2e21"/><stop offset="0.6175" stop-color="#ff1415"/><stop offset="0.7261" stop-color="#ff000c"/><stop offset="1" stop-color="#f00"/></linearGradient><linearGradient id="u34"><stop offset="0" stop-color="#00ff6e"/><stop offset="0.2172" stop-color="#00ff7d"/><stop offset="0.2447" stop-color="#32ff7f"/><stop offset="0.2739" stop-color="#6fff83"/><stop offset="0.3031" stop-color="#b4ff86"/><stop offset="0.3306" stop-color="#feff8a"/><stop offset="0.3323" stop-color="#fffb88"/><stop offset="0.3468" stop-color="#ffd676"/><stop offset="0.3647" stop-color="#ffb365"/><stop offset="0.3841" stop-color="#ff9657"/><stop offset="0.4068" stop-color="#ff7b4a"/><stop offset="0.4327" stop-color="#ff633e"/><stop offset="0.4619" stop-color="#ff4f34"/><stop offset="0.4943" stop-color="#ff3d2b"/><stop offset="0.5316" stop-color="#ff2d24"/><stop offset="0.6159" stop-color="#ff1417"/><stop offset="0.7229" stop-color="#ff000e"/><stop offset="1" stop-color="#ff0001"/></linearGradient><linearGradient id="u35"><stop offset="0" stop-color="#00ff73"/><stop offset="0.2159" stop-color="#00ff83"/><stop offset="0.2435" stop-color="#32ff86"/><stop offset="0.2744" stop-color="#72ff8a"/><stop offset="0.3019" stop-color="#b4ff8e"/><stop offset="0.3295" stop-color="#ffff92"/><stop offset="0.3442" stop-color="#ffd97f"/><stop offset="0.362" stop-color="#ffb56c"/><stop offset="0.3815" stop-color="#ff975d"/><stop offset="0.4042" stop-color="#ff7c4f"/><stop offset="0.4302" stop-color="#ff6443"/><stop offset="0.4594" stop-color="#ff4f38"/><stop offset="0.4919" stop-color="#ff3d2f"/><stop offset="0.5292" stop-color="#ff2d27"/><stop offset="0.6136" stop-color="#ff141a"/><stop offset="0.7192" stop-color="#ff0010"/><stop offset="1" stop-color="#ff0002"/></linearGradient><linearGradient id="u36"><stop offset="0" stop-color="#0f7"/><stop offset="0.2175" stop-color="#00ff89"/><stop offset="0.2484" stop-color="#3bff8d"/><stop offset="0.276" stop-color="#76ff91"/><stop offset="0.3019" stop-color="#b4ff95"/><stop offset="0.3295" stop-color="#fffe9a"/><stop offset="0.3442" stop-color="#ffd885"/><stop offset="0.362" stop-color="#ffb472"/><stop offset="0.3815" stop-color="#ff9662"/><stop offset="0.4042" stop-color="#ff7b53"/><stop offset="0.4302" stop-color="#ff6346"/><stop offset="0.4594" stop-color="#ff4e3b"/><stop offset="0.4919" stop-color="#ff3c32"/><stop offset="0.5292" stop-color="#ff2c29"/><stop offset="0.612" stop-color="#ff131c"/><stop offset="0.7159" stop-color="#f01"/><stop offset="1" stop-color="#ff0003"/></linearGradient><linearGradient id="u37"><stop offset="0" stop-color="#00ff7b"/><stop offset="0.2163" stop-color="#00ff8f"/><stop offset="0.2439" stop-color="#33ff93"/><stop offset="0.2732" stop-color="#72ff98"/><stop offset="0.2992" stop-color="#b0ff9d"/><stop offset="0.3268" stop-color="#fcffa2"/><stop offset="0.3285" stop-color="#fffda1"/><stop offset="0.3431" stop-color="#ffd78c"/><stop offset="0.361" stop-color="#ffb378"/><stop offset="0.3805" stop-color="#ff9567"/><stop offset="0.4033" stop-color="#ff7a58"/><stop offset="0.4293" stop-color="#ff624a"/><stop offset="0.4585" stop-color="#ff4d3f"/><stop offset="0.4911" stop-color="#ff3b35"/><stop offset="0.5285" stop-color="#ff2c2c"/><stop offset="0.6098" stop-color="#ff131e"/><stop offset="0.7122" stop-color="#ff0013"/><stop offset="1" stop-color="#ff0004"/></linearGradient><linearGradient id="u38"><stop offset="0" stop-color="#00ff7f"/><stop offset="0.1187" stop-color="#00ff8a"/><stop offset="0.2163" stop-color="#00ff96"/><stop offset="0.2423" stop-color="#30ff9a"/><stop offset="0.2715" stop-color="#6eff9f"/><stop offset="0.2959" stop-color="#a8ffa4"/><stop offset="0.3268" stop-color="#fdffab"/><stop offset="0.3285" stop-color="#fffca9"/><stop offset="0.3431" stop-color="#ffd693"/><stop offset="0.361" stop-color="#ffb27e"/><stop offset="0.3805" stop-color="#ff946c"/><stop offset="0.4033" stop-color="#ff795c"/><stop offset="0.4293" stop-color="#ff614e"/><stop offset="0.4585" stop-color="#ff4d42"/><stop offset="0.4911" stop-color="#ff3b37"/><stop offset="0.5285" stop-color="#ff2b2e"/><stop offset="0.6081" stop-color="#ff1320"/><stop offset="0.7089" stop-color="#ff0015"/><stop offset="1" stop-color="#ff0005"/></linearGradient><linearGradient id="u39"><stop offset="0" stop-color="#00ff84"/><stop offset="0.1189" stop-color="#00ff8f"/><stop offset="0.2166" stop-color="#00ff9c"/><stop offset="0.2459" stop-color="#39ffa1"/><stop offset="0.272" stop-color="#71ffa6"/><stop offset="0.2997" stop-color="#b5ffad"/><stop offset="0.3257" stop-color="#feffb3"/><stop offset="0.3274" stop-color="#fffbb1"/><stop offset="0.342" stop-color="#ffd599"/><stop offset="0.3599" stop-color="#ffb184"/><stop offset="0.3795" stop-color="#ff9371"/><stop offset="0.4023" stop-color="#ff7861"/><stop offset="0.4283" stop-color="#ff6052"/><stop offset="0.4577" stop-color="#ff4c45"/><stop offset="0.4902" stop-color="#ff3a3a"/><stop offset="0.5277" stop-color="#ff2a31"/><stop offset="0.6059" stop-color="#ff1322"/><stop offset="0.7052" stop-color="#ff0017"/><stop offset="1" stop-color="#ff0006"/></linearGradient><linearGradient id="u40"><stop offset="0" stop-color="#0f8"/><stop offset="0.1189" stop-color="#00ff94"/><stop offset="0.2166" stop-color="#00ffa3"/><stop offset="0.2443" stop-color="#35ffa8"/><stop offset="0.2736" stop-color="#75ffae"/><stop offset="0.2997" stop-color="#b5ffb5"/><stop offset="0.3257" stop-color="#ffffbc"/><stop offset="0.3404" stop-color="#ffd8a3"/><stop offset="0.3583" stop-color="#ffb38b"/><stop offset="0.3779" stop-color="#ff9578"/><stop offset="0.4007" stop-color="#ff7966"/><stop offset="0.4251" stop-color="#ff6257"/><stop offset="0.4544" stop-color="#ff4d4a"/><stop offset="0.487" stop-color="#ff3b3e"/><stop offset="0.5244" stop-color="#ff2b34"/><stop offset="0.6026" stop-color="#ff1325"/><stop offset="0.702" stop-color="#ff0019"/><stop offset="0.8339" stop-color="#ff000f"/><stop offset="1" stop-color="#ff0007"/></linearGradient><linearGradient id="u41"><stop offset="0" stop-color="#00ff8d"/><stop offset="0.1175" stop-color="#00ff9a"/><stop offset="0.2153" stop-color="#00ffa9"/><stop offset="0.2414" stop-color="#31ffaf"/><stop offset="0.2708" stop-color="#71ffb5"/><stop offset="0.2969" stop-color="#b1ffbc"/><stop offset="0.3246" stop-color="#fffec4"/><stop offset="0.3393" stop-color="#ffd7aa"/><stop offset="0.3573" stop-color="#ffb291"/><stop offset="0.3768" stop-color="#ff947d"/><stop offset="0.398" stop-color="#ff7a6c"/><stop offset="0.4225" stop-color="#ff635c"/><stop offset="0.4519" stop-color="#ff4d4e"/><stop offset="0.4861" stop-color="#ff3a41"/><stop offset="0.5237" stop-color="#ff2a37"/><stop offset="0.602" stop-color="#ff1327"/><stop offset="0.6982" stop-color="#ff001b"/><stop offset="0.8303" stop-color="#ff0010"/><stop offset="1" stop-color="#ff0008"/></linearGradient><linearGradient id="u42"><stop offset="0" stop-color="#00ff91"/><stop offset="0.1191" stop-color="#00ffa0"/><stop offset="0.217" stop-color="#01ffb1"/><stop offset="0.2463" stop-color="#3affb7"/><stop offset="0.2724" stop-color="#74ffbe"/><stop offset="0.2969" stop-color="#b2ffc4"/><stop offset="0.3246" stop-color="#fffdcc"/><stop offset="0.3393" stop-color="#ffd6b1"/><stop offset="0.3573" stop-color="#ffb197"/><stop offset="0.3768" stop-color="#ff9382"/><stop offset="0.398" stop-color="#ff7970"/><stop offset="0.4225" stop-color="#ff6260"/><stop offset="0.4519" stop-color="#ff4c52"/><stop offset="0.4861" stop-color="#ff3944"/><stop offset="0.5237" stop-color="#ff2939"/><stop offset="0.6003" stop-color="#ff1229"/><stop offset="0.6966" stop-color="#ff001d"/><stop offset="0.8303" stop-color="#ff0012"/><stop offset="1" stop-color="#ff0009"/></linearGradient><linearGradient id="u43"><stop offset="0" stop-color="#00ff96"/><stop offset="0.1176" stop-color="#00ffa5"/><stop offset="0.2157" stop-color="#00ffb7"/><stop offset="0.2418" stop-color="#33ffbe"/><stop offset="0.2696" stop-color="#70ffc5"/><stop offset="0.2941" stop-color="#aeffcc"/><stop offset="0.3219" stop-color="#fdffd6"/><stop offset="0.3235" stop-color="#fffcd4"/><stop offset="0.3382" stop-color="#ffd5b8"/><stop offset="0.3562" stop-color="#ffb09d"/><stop offset="0.3758" stop-color="#ff9287"/><stop offset="0.3971" stop-color="#ff7875"/><stop offset="0.4216" stop-color="#ff6164"/><stop offset="0.451" stop-color="#ff4c55"/><stop offset="0.4853" stop-color="#ff3947"/><stop offset="0.5229" stop-color="#ff293c"/><stop offset="0.5997" stop-color="#ff122b"/><stop offset="0.6928" stop-color="#ff001f"/><stop offset="0.8268" stop-color="#ff0013"/><stop offset="1" stop-color="#ff000a"/></linearGradient><linearGradient id="u44"><stop offset="0" stop-color="#00ff9b"/><stop offset="0.1176" stop-color="#00ffab"/><stop offset="0.2157" stop-color="#00ffbe"/><stop offset="0.2402" stop-color="#2fffc4"/><stop offset="0.268" stop-color="#6cffcc"/><stop offset="0.2958" stop-color="#b2ffd5"/><stop offset="0.3219" stop-color="#feffdf"/><stop offset="0.3235" stop-color="#fffbdc"/><stop offset="0.3382" stop-color="#ffd4bf"/><stop offset="0.3562" stop-color="#ffafa4"/><stop offset="0.3758" stop-color="#ff918d"/><stop offset="0.3971" stop-color="#ff777a"/><stop offset="0.4216" stop-color="#ff6068"/><stop offset="0.451" stop-color="#ff4b59"/><stop offset="0.4853" stop-color="#ff384a"/><stop offset="0.5229" stop-color="#ff283f"/><stop offset="0.598" stop-color="#ff122e"/><stop offset="0.6895" stop-color="#ff0021"/><stop offset="0.8252" stop-color="#ff0014"/><stop offset="1" stop-color="#ff000b"/></linearGradient><linearGradient id="u45"><stop offset="0" stop-color="#00ffa0"/><stop offset="0.1178" stop-color="#00ffb1"/><stop offset="0.216" stop-color="#01ffc6"/><stop offset="0.2455" stop-color="#3cffce"/><stop offset="0.2717" stop-color="#78ffd6"/><stop offset="0.2962" stop-color="#b7ffdf"/><stop offset="0.3208" stop-color="#ffffe8"/><stop offset="0.3355" stop-color="#ffd7c9"/><stop offset="0.3535" stop-color="#ffb1ac"/><stop offset="0.3732" stop-color="#ff9294"/><stop offset="0.3944" stop-color="#ff7880"/><stop offset="0.419" stop-color="#ff606e"/><stop offset="0.4484" stop-color="#ff4b5d"/><stop offset="0.4812" stop-color="#ff394f"/><stop offset="0.5188" stop-color="#ff2842"/><stop offset="0.5941" stop-color="#ff1231"/><stop offset="0.6858" stop-color="#ff0023"/><stop offset="0.8232" stop-color="#ff0016"/><stop offset="1" stop-color="#ff000c"/></linearGradient><linearGradient id="u46"><stop offset="0" stop-color="#00ffa4"/><stop offset="0.1178" stop-color="#00ffb7"/><stop offset="0.216" stop-color="#00ffcd"/><stop offset="0.2439" stop-color="#38ffd5"/><stop offset="0.2717" stop-color="#77ffde"/><stop offset="0.2962" stop-color="#b7ffe7"/><stop offset="0.3208" stop-color="#fffef1"/><stop offset="0.3355" stop-color="#ffd6d1"/><stop offset="0.3535" stop-color="#ffb0b2"/><stop offset="0.3732" stop-color="#ff9199"/><stop offset="0.3944" stop-color="#ff7784"/><stop offset="0.419" stop-color="#ff5f72"/><stop offset="0.4484" stop-color="#ff4a60"/><stop offset="0.4812" stop-color="#ff3852"/><stop offset="0.5188" stop-color="#ff2845"/><stop offset="0.5925" stop-color="#ff1233"/><stop offset="0.6825" stop-color="#ff0025"/><stop offset="0.82" stop-color="#ff0017"/><stop offset="1" stop-color="#ff000d"/></linearGradient><linearGradient id="u47"><stop offset="0" stop-color="#00ffa9"/><stop offset="0.1184" stop-color="#00ffbd"/><stop offset="0.2155" stop-color="#00ffd4"/><stop offset="0.2401" stop-color="#30ffdc"/><stop offset="0.2697" stop-color="#73ffe6"/><stop offset="0.2944" stop-color="#b3fff0"/><stop offset="0.3207" stop-color="#fffdfa"/><stop offset="0.3355" stop-color="#ffd5d8"/><stop offset="0.352" stop-color="#ffb2bb"/><stop offset="0.3717" stop-color="#ff92a1"/><stop offset="0.3931" stop-color="#ff788b"/><stop offset="0.4178" stop-color="#ff6077"/><stop offset="0.4474" stop-color="#ff4a65"/><stop offset="0.4803" stop-color="#ff3856"/><stop offset="0.5181" stop-color="#ff2848"/><stop offset="0.5905" stop-color="#ff1236"/><stop offset="0.6809" stop-color="#ff0027"/><stop offset="0.8191" stop-color="#ff0019"/><stop offset="1" stop-color="#ff000e"/></linearGradient><linearGradient id="u48"><stop offset="0" stop-color="#00ffae"/><stop offset="0.119" stop-color="#00ffc3"/><stop offset="0.2165" stop-color="#01ffdc"/><stop offset="0.2413" stop-color="#33ffe4"/><stop offset="0.2661" stop-color="#6bffed"/><stop offset="0.2876" stop-color="#a1fff6"/><stop offset="0.3074" stop-color="#d9ffff"/><stop offset="0.3223" stop-color="#fff7fe"/><stop offset="0.3372" stop-color="#ffd0dc"/><stop offset="0.3554" stop-color="#ffabbd"/><stop offset="0.3752" stop-color="#ff8da2"/><stop offset="0.3967" stop-color="#ff738c"/><stop offset="0.4215" stop-color="#ff5c79"/><stop offset="0.4512" stop-color="#ff4767"/><stop offset="0.4843" stop-color="#ff3557"/><stop offset="0.5223" stop-color="#ff264a"/><stop offset="0.5934" stop-color="#ff1138"/><stop offset="0.6793" stop-color="#ff0029"/><stop offset="0.8182" stop-color="#ff001b"/><stop offset="1" stop-color="#ff000f"/></linearGradient><linearGradient id="u49"><stop offset="0" stop-color="#00ffb3"/><stop offset="0.1194" stop-color="#00ffc9"/><stop offset="0.2172" stop-color="#00ffe3"/><stop offset="0.2537" stop-color="#4cfff0"/><stop offset="0.2886" stop-color="#a1ffff"/><stop offset="0.3267" stop-color="#ffedfe"/><stop offset="0.3416" stop-color="#ffc7dd"/><stop offset="0.3599" stop-color="#ffa4be"/><stop offset="0.3798" stop-color="#ff87a4"/><stop offset="0.4013" stop-color="#ff6f8e"/><stop offset="0.4262" stop-color="#ff597b"/><stop offset="0.4561" stop-color="#ff4468"/><stop offset="0.4892" stop-color="#ff3359"/><stop offset="0.5274" stop-color="#ff244b"/><stop offset="0.5954" stop-color="#ff103a"/><stop offset="0.6783" stop-color="#ff002b"/><stop offset="0.8176" stop-color="#ff001c"/><stop offset="1" stop-color="#ff0010"/></linearGradient><linearGradient id="u50"><stop offset="0" stop-color="#00ffb8"/><stop offset="0.1181" stop-color="#00ffcf"/><stop offset="0.2163" stop-color="#00ffeb"/><stop offset="0.2396" stop-color="#2efff3"/><stop offset="0.2679" stop-color="#6effff"/><stop offset="0.3295" stop-color="#ffe2ff"/><stop offset="0.3444" stop-color="#ffbfde"/><stop offset="0.3627" stop-color="#ff9ebf"/><stop offset="0.3827" stop-color="#ff82a6"/><stop offset="0.406" stop-color="#ff698e"/><stop offset="0.4309" stop-color="#ff547b"/><stop offset="0.4609" stop-color="#ff4169"/><stop offset="0.4942" stop-color="#ff305a"/><stop offset="0.5324" stop-color="#ff214c"/><stop offset="0.5973" stop-color="#ff0f3c"/><stop offset="0.6755" stop-color="#ff002e"/><stop offset="0.817" stop-color="#ff001e"/><stop offset="1" stop-color="#ff0012"/></linearGradient><linearGradient id="u51"><stop offset="0" stop-color="#00ffbe"/><stop offset="0.1187" stop-color="#00ffd6"/><stop offset="0.2174" stop-color="#01fff3"/><stop offset="0.2475" stop-color="#3fffff"/><stop offset="0.2893" stop-color="#9aedff"/><stop offset="0.3328" stop-color="#ffd9ff"/><stop offset="0.3478" stop-color="#ffb7df"/><stop offset="0.3662" stop-color="#ff98c1"/><stop offset="0.3863" stop-color="#ff7da7"/><stop offset="0.4097" stop-color="#ff6590"/><stop offset="0.4365" stop-color="#ff507c"/><stop offset="0.4666" stop-color="#ff3d6a"/><stop offset="0.5385" stop-color="#ff1f4d"/><stop offset="0.6003" stop-color="#ff0e3d"/><stop offset="0.6739" stop-color="#ff0030"/><stop offset="0.8144" stop-color="#ff001f"/><stop offset="1" stop-color="#ff0013"/></linearGradient><linearGradient id="u52"><stop offset="0" stop-color="#00ffc3"/><stop offset="0.1191" stop-color="#00ffdc"/><stop offset="0.2181" stop-color="#00fffb"/><stop offset="0.2282" stop-color="#14ffff"/><stop offset="0.2768" stop-color="#78ebff"/><stop offset="0.3372" stop-color="#ffcfff"/><stop offset="0.354" stop-color="#ffaddc"/><stop offset="0.3725" stop-color="#ff8fbf"/><stop offset="0.3926" stop-color="#ff76a7"/><stop offset="0.4161" stop-color="#ff5f90"/><stop offset="0.443" stop-color="#ff4b7c"/><stop offset="0.4732" stop-color="#ff3a6b"/><stop offset="0.5453" stop-color="#ff1d4f"/><stop offset="0.604" stop-color="#ff0d3f"/><stop offset="0.6728" stop-color="#ff0032"/><stop offset="0.8138" stop-color="#ff0021"/><stop offset="1" stop-color="#ff0014"/></linearGradient><linearGradient id="u53"><stop offset="0" stop-color="#00ffc8"/><stop offset="0.113" stop-color="#00ffe1"/><stop offset="0.2057" stop-color="#00fffe"/><stop offset="0.2175" stop-color="#00fbff"/><stop offset="0.2766" stop-color="#74e3ff"/><stop offset="0.3406" stop-color="#ffc7ff"/><stop offset="0.3575" stop-color="#ffa6dd"/><stop offset="0.3761" stop-color="#ff8ac1"/><stop offset="0.3963" stop-color="#ff72a8"/><stop offset="0.4199" stop-color="#ff5c92"/><stop offset="0.4469" stop-color="#ff487e"/><stop offset="0.4772" stop-color="#ff376d"/><stop offset="0.5514" stop-color="#ff1a50"/><stop offset="0.6071" stop-color="#ff0c41"/><stop offset="0.6712" stop-color="#ff0035"/><stop offset="0.8128" stop-color="#ff0023"/><stop offset="1" stop-color="#ff0015"/></linearGradient><linearGradient id="u54"><stop offset="0" stop-color="#00ffce"/><stop offset="0.1" stop-color="#00ffe4"/><stop offset="0.1847" stop-color="#0ff"/><stop offset="0.2186" stop-color="#01f3ff"/><stop offset="0.2814" stop-color="#7bdaff"/><stop offset="0.3441" stop-color="#ffbeff"/><stop offset="0.361" stop-color="#ff9fde"/><stop offset="0.3797" stop-color="#ff84c2"/><stop offset="0.4" stop-color="#ff6daa"/><stop offset="0.4237" stop-color="#ff5893"/><stop offset="0.4508" stop-color="#ff4580"/><stop offset="0.4814" stop-color="#ff356e"/><stop offset="0.5559" stop-color="#ff1951"/><stop offset="0.6695" stop-color="#ff0037"/><stop offset="0.8119" stop-color="#ff0025"/><stop offset="1" stop-color="#ff0016"/></linearGradient><linearGradient id="u55"><stop offset="0" stop-color="#00ffd3"/><stop offset="0.0884" stop-color="#00ffe7"/><stop offset="0.165" stop-color="#0ff"/><stop offset="0.2194" stop-color="#00ecff"/><stop offset="0.284" stop-color="#7ad2ff"/><stop offset="0.3486" stop-color="#ffb6ff"/><stop offset="0.3656" stop-color="#ff98df"/><stop offset="0.3844" stop-color="#ff7fc3"/><stop offset="0.4065" stop-color="#ff67a9"/><stop offset="0.4303" stop-color="#ff5394"/><stop offset="0.4575" stop-color="#ff4180"/><stop offset="0.4881" stop-color="#ff316f"/><stop offset="0.5629" stop-color="#ff1752"/><stop offset="0.6684" stop-color="#ff0039"/><stop offset="0.8112" stop-color="#ff0026"/><stop offset="1" stop-color="#ff0018"/></linearGradient><linearGradient id="u56"><stop offset="0" stop-color="#00ffd8"/><stop offset="0.0769" stop-color="#00ffeb"/><stop offset="0.1436" stop-color="#0ff"/><stop offset="0.2188" stop-color="#00e5ff"/><stop offset="0.2838" stop-color="#76cbff"/><stop offset="0.3521" stop-color="#ffafff"/><stop offset="0.3675" stop-color="#ff95e2"/><stop offset="0.3846" stop-color="#ff7ec8"/><stop offset="0.4034" stop-color="#ff69b2"/><stop offset="0.4256" stop-color="#ff569c"/><stop offset="0.4769" stop-color="#ff3679"/><stop offset="0.5419" stop-color="#ff1d5c"/><stop offset="0.6" stop-color="#ff0d4a"/><stop offset="0.6667" stop-color="#ff003c"/><stop offset="0.8103" stop-color="#ff0028"/><stop offset="1" stop-color="#ff0019"/></linearGradient><linearGradient id="u57"><stop offset="0" stop-color="#00ffde"/><stop offset="0.1237" stop-color="#0ff"/><stop offset="0.2199" stop-color="#01ddff"/><stop offset="0.2887" stop-color="#7cc3ff"/><stop offset="0.3557" stop-color="#ffa7ff"/><stop offset="0.3711" stop-color="#ff8fe3"/><stop offset="0.39" stop-color="#ff77c7"/><stop offset="0.4089" stop-color="#ff64b1"/><stop offset="0.4313" stop-color="#ff519c"/><stop offset="0.4828" stop-color="#ff3379"/><stop offset="0.5464" stop-color="#ff1b5d"/><stop offset="0.6014" stop-color="#ff0c4d"/><stop offset="0.6649" stop-color="#ff003f"/><stop offset="0.8093" stop-color="#ff002a"/><stop offset="1" stop-color="#ff001a"/></linearGradient><linearGradient id="u58"><stop offset="0" stop-color="#00ffe4"/><stop offset="0.1019" stop-color="#0ff"/><stop offset="0.2193" stop-color="#00d7ff"/><stop offset="0.2902" stop-color="#7cbcff"/><stop offset="0.3592" stop-color="#ffa0ff"/><stop offset="0.3748" stop-color="#ff89e3"/><stop offset="0.3921" stop-color="#ff74ca"/><stop offset="0.4111" stop-color="#ff61b4"/><stop offset="0.4335" stop-color="#ff4f9f"/><stop offset="0.4853" stop-color="#ff317c"/><stop offset="0.5492" stop-color="#ff1a5f"/><stop offset="0.6028" stop-color="#ff0c4f"/><stop offset="0.6632" stop-color="#ff0041"/><stop offset="0.8083" stop-color="#ff002c"/><stop offset="1" stop-color="#ff001b"/></linearGradient><linearGradient id="u59"><stop offset="0" stop-color="#00ffe9"/><stop offset="0.0815" stop-color="#0ff"/><stop offset="0.2201" stop-color="#00d1ff"/><stop offset="0.2894" stop-color="#75b7ff"/><stop offset="0.364" stop-color="#f9f"/><stop offset="0.3795" stop-color="#ff83e4"/><stop offset="0.3986" stop-color="#ff6dc9"/><stop offset="0.4177" stop-color="#ff5bb3"/><stop offset="0.4402" stop-color="#ff4b9f"/><stop offset="0.4922" stop-color="#ff2e7c"/><stop offset="0.5546" stop-color="#ff1861"/><stop offset="0.6049" stop-color="#ff0b51"/><stop offset="0.662" stop-color="#f04"/><stop offset="0.8076" stop-color="#ff002d"/><stop offset="1" stop-color="#ff001d"/></linearGradient><linearGradient id="u60"><stop offset="0" stop-color="#00ffef"/><stop offset="0.0592" stop-color="#0ff"/><stop offset="0.2213" stop-color="#01cbff"/><stop offset="0.2962" stop-color="#7eafff"/><stop offset="0.3676" stop-color="#ff93ff"/><stop offset="0.3833" stop-color="#ff7ee4"/><stop offset="0.4024" stop-color="#ff69ca"/><stop offset="0.4216" stop-color="#ff58b4"/><stop offset="0.4443" stop-color="#ff47a0"/><stop offset="0.4965" stop-color="#ff2c7d"/><stop offset="0.5592" stop-color="#ff1662"/><stop offset="0.6603" stop-color="#ff0046"/><stop offset="0.8066" stop-color="#ff002f"/><stop offset="1" stop-color="#ff001e"/></linearGradient><linearGradient id="u61"><stop offset="0" stop-color="#00fff5"/><stop offset="0.0368" stop-color="#0ff"/><stop offset="0.2207" stop-color="#00c5ff"/><stop offset="0.2977" stop-color="#7da9ff"/><stop offset="0.3713" stop-color="#ff8dff"/><stop offset="0.3888" stop-color="#ff76e2"/><stop offset="0.4063" stop-color="#ff64cb"/><stop offset="0.4256" stop-color="#ff54b6"/><stop offset="0.4483" stop-color="#ff44a1"/><stop offset="0.5009" stop-color="#ff2a7f"/><stop offset="0.5639" stop-color="#ff1463"/><stop offset="0.6602" stop-color="#ff0049"/><stop offset="0.8056" stop-color="#ff0031"/><stop offset="1" stop-color="#ff001f"/></linearGradient><linearGradient id="u62"><stop offset="0" stop-color="#00fffb"/><stop offset="0.0158" stop-color="#0ff"/><stop offset="0.051" stop-color="#00f5ff"/><stop offset="0.2214" stop-color="#00c0ff"/><stop offset="0.297" stop-color="#77a5ff"/><stop offset="0.3761" stop-color="#ff87ff"/><stop offset="0.3937" stop-color="#ff71e3"/><stop offset="0.4112" stop-color="#ff60cc"/><stop offset="0.4306" stop-color="#ff50b7"/><stop offset="0.4534" stop-color="#ff41a2"/><stop offset="0.5044" stop-color="#ff2881"/><stop offset="0.5677" stop-color="#ff1365"/><stop offset="0.6591" stop-color="#ff004c"/><stop offset="0.8049" stop-color="#f03"/><stop offset="1" stop-color="#ff0021"/></linearGradient><linearGradient id="u63"><stop offset="0" stop-color="#00fdff"/><stop offset="0.2226" stop-color="#01baff"/><stop offset="0.3021" stop-color="#7c9eff"/><stop offset="0.3799" stop-color="#ff81ff"/><stop offset="0.3975" stop-color="#ff6ce3"/><stop offset="0.4152" stop-color="#ff5ccc"/><stop offset="0.4346" stop-color="#ff4db8"/><stop offset="0.4576" stop-color="#ff3ea4"/><stop offset="0.5088" stop-color="#ff2682"/><stop offset="0.5724" stop-color="#ff1267"/><stop offset="0.6572" stop-color="#ff004e"/><stop offset="0.8039" stop-color="#ff0035"/><stop offset="1" stop-color="#f02"/></linearGradient><linearGradient id="u64"><stop offset="0" stop-color="#00f7ff"/><stop offset="0.222" stop-color="#00b5ff"/><stop offset="0.3037" stop-color="#7c99ff"/><stop offset="0.3837" stop-color="#ff7bff"/><stop offset="0.4014" stop-color="#ff68e4"/><stop offset="0.4192" stop-color="#ff58cd"/><stop offset="0.4618" stop-color="#ff3ba5"/><stop offset="0.5133" stop-color="#ff2484"/><stop offset="0.5773" stop-color="#ff1068"/><stop offset="0.6536" stop-color="#ff0052"/><stop offset="0.7478" stop-color="#ff003f"/><stop offset="0.8615" stop-color="#ff0030"/><stop offset="1" stop-color="#ff0023"/></linearGradient><linearGradient id="u65"><stop offset="0" stop-color="#00f1ff"/><stop offset="0.2214" stop-color="#00b0ff"/><stop offset="0.3036" stop-color="#7894ff"/><stop offset="0.3875" stop-color="#ff76ff"/><stop offset="0.4054" stop-color="#ff63e4"/><stop offset="0.4232" stop-color="#ff54ce"/><stop offset="0.4661" stop-color="#ff38a6"/><stop offset="0.5179" stop-color="#ff2285"/><stop offset="0.5804" stop-color="#ff0f6a"/><stop offset="0.6518" stop-color="#f05"/><stop offset="0.75" stop-color="#ff0041"/><stop offset="0.8625" stop-color="#ff0031"/><stop offset="1" stop-color="#ff0025"/></linearGradient><linearGradient id="u66"><stop offset="0" stop-color="#00ebff"/><stop offset="0.2226" stop-color="#01abff"/><stop offset="0.3088" stop-color="#7d8eff"/><stop offset="0.3914" stop-color="#ff71ff"/><stop offset="0.4093" stop-color="#ff5fe5"/><stop offset="0.4273" stop-color="#ff50cf"/><stop offset="0.4704" stop-color="#ff35a7"/><stop offset="0.5224" stop-color="#ff1f86"/><stop offset="0.5853" stop-color="#ff0d6b"/><stop offset="0.6517" stop-color="#ff0057"/><stop offset="0.754" stop-color="#ff0042"/><stop offset="0.8654" stop-color="#f03"/><stop offset="1" stop-color="#ff0026"/></linearGradient><linearGradient id="u67"><stop offset="0" stop-color="#00e6ff"/><stop offset="0.2234" stop-color="#00a7ff"/><stop offset="0.3117" stop-color="#7d8aff"/><stop offset="0.3964" stop-color="#ff6cff"/><stop offset="0.4144" stop-color="#ff5be5"/><stop offset="0.4324" stop-color="#ff4ccf"/><stop offset="0.4757" stop-color="#ff33a8"/><stop offset="0.5279" stop-color="#ff1d87"/><stop offset="0.591" stop-color="#ff0c6c"/><stop offset="0.6505" stop-color="#ff005a"/><stop offset="0.7586" stop-color="#f04"/><stop offset="0.8685" stop-color="#ff0034"/><stop offset="1" stop-color="#ff0028"/></linearGradient><linearGradient id="u68"><stop offset="0" stop-color="#00e1ff"/><stop offset="0.2224" stop-color="#00a2ff"/><stop offset="0.311" stop-color="#7a86ff"/><stop offset="0.3996" stop-color="#ff67ff"/><stop offset="0.4177" stop-color="#ff56e6"/><stop offset="0.4358" stop-color="#ff49d0"/><stop offset="0.4792" stop-color="#ff30a9"/><stop offset="0.5316" stop-color="#ff1b89"/><stop offset="0.5931" stop-color="#ff0b6e"/><stop offset="0.6474" stop-color="#ff005d"/><stop offset="0.7595" stop-color="#ff0045"/><stop offset="0.868" stop-color="#ff0036"/><stop offset="1" stop-color="#ff0029"/></linearGradient><linearGradient id="u69"><stop offset="0" stop-color="#00dcff"/><stop offset="0.2236" stop-color="#019eff"/><stop offset="0.3164" stop-color="#7e80ff"/><stop offset="0.4036" stop-color="#ff62ff"/><stop offset="0.44" stop-color="#ff45d1"/><stop offset="0.4836" stop-color="#ff2daa"/><stop offset="0.5364" stop-color="#ff198a"/><stop offset="0.5982" stop-color="#ff096f"/><stop offset="0.6455" stop-color="#ff0060"/><stop offset="0.7636" stop-color="#ff0047"/><stop offset="0.8709" stop-color="#ff0037"/><stop offset="1" stop-color="#ff002a"/></linearGradient><linearGradient id="u70"><stop offset="0" stop-color="#00d6ff"/><stop offset="0.223" stop-color="#009aff"/><stop offset="0.3181" stop-color="#7e7cff"/><stop offset="0.4077" stop-color="#ff5eff"/><stop offset="0.4442" stop-color="#ff42d1"/><stop offset="0.4881" stop-color="#ff2bab"/><stop offset="0.5393" stop-color="#ff188c"/><stop offset="0.6015" stop-color="#ff0871"/><stop offset="0.6435" stop-color="#ff0064"/><stop offset="0.766" stop-color="#ff0048"/><stop offset="0.872" stop-color="#ff0039"/><stop offset="1" stop-color="#ff002c"/></linearGradient><linearGradient id="u71"><stop offset="0" stop-color="#00d2ff"/><stop offset="0.2224" stop-color="#0096ff"/><stop offset="0.3162" stop-color="#7879ff"/><stop offset="0.4118" stop-color="#ff59ff"/><stop offset="0.4485" stop-color="#ff3fd2"/><stop offset="0.4926" stop-color="#ff28ac"/><stop offset="0.5441" stop-color="#ff168d"/><stop offset="0.6066" stop-color="#ff0772"/><stop offset="0.6415" stop-color="#ff0067"/><stop offset="0.7684" stop-color="#ff004a"/><stop offset="0.8732" stop-color="#ff003a"/><stop offset="1" stop-color="#ff002d"/></linearGradient><linearGradient id="u72"><stop offset="0" stop-color="#00cdff"/><stop offset="0.2251" stop-color="#0192ff"/><stop offset="0.3229" stop-color="#7d74ff"/><stop offset="0.417" stop-color="#f5f"/><stop offset="0.4539" stop-color="#ff3cd3"/><stop offset="0.4982" stop-color="#ff26ad"/><stop offset="0.5498" stop-color="#ff148e"/><stop offset="0.6107" stop-color="#ff0674"/><stop offset="0.6402" stop-color="#ff006a"/><stop offset="0.7011" stop-color="#ff005a"/><stop offset="0.7712" stop-color="#ff004c"/><stop offset="0.8764" stop-color="#ff003c"/><stop offset="1" stop-color="#ff002f"/></linearGradient><linearGradient id="u73"><stop offset="0" stop-color="#00c9ff"/><stop offset="0.2245" stop-color="#008eff"/><stop offset="0.3247" stop-color="#7d70ff"/><stop offset="0.4212" stop-color="#ff51ff"/><stop offset="0.4583" stop-color="#ff38d3"/><stop offset="0.5028" stop-color="#ff24ae"/><stop offset="0.5547" stop-color="#ff128f"/><stop offset="0.616" stop-color="#ff0475"/><stop offset="0.6382" stop-color="#ff006e"/><stop offset="0.7013" stop-color="#ff005c"/><stop offset="0.7755" stop-color="#ff004d"/><stop offset="0.8776" stop-color="#ff003d"/><stop offset="1" stop-color="#ff0030"/></linearGradient><linearGradient id="u74"><stop offset="0" stop-color="#00c4ff"/><stop offset="0.2239" stop-color="#008aff"/><stop offset="0.3246" stop-color="#7a6dff"/><stop offset="0.4254" stop-color="#ff4dff"/><stop offset="0.4627" stop-color="#ff35d4"/><stop offset="0.5075" stop-color="#ff21af"/><stop offset="0.5597" stop-color="#ff1190"/><stop offset="0.6194" stop-color="#ff0377"/><stop offset="0.6362" stop-color="#ff0071"/><stop offset="0.6922" stop-color="#ff0061"/><stop offset="0.778" stop-color="#ff004f"/><stop offset="0.8787" stop-color="#ff003f"/><stop offset="1" stop-color="#ff0032"/></linearGradient><linearGradient id="u75"><stop offset="0" stop-color="#00c0ff"/><stop offset="0.2251" stop-color="#0187ff"/><stop offset="0.3302" stop-color="#7e68ff"/><stop offset="0.4296" stop-color="#ff49ff"/><stop offset="0.469" stop-color="#ff32d3"/><stop offset="0.5122" stop-color="#ff1fb0"/><stop offset="0.5647" stop-color="#ff0f91"/><stop offset="0.6248" stop-color="#ff0278"/><stop offset="0.6979" stop-color="#ff0062"/><stop offset="0.7824" stop-color="#ff0050"/><stop offset="0.8818" stop-color="#ff0041"/><stop offset="1" stop-color="#f03"/></linearGradient><linearGradient id="u76"><stop offset="0" stop-color="#00bcff"/><stop offset="0.2245" stop-color="#0083ff"/><stop offset="0.3321" stop-color="#7e65ff"/><stop offset="0.434" stop-color="#ff45ff"/><stop offset="0.4717" stop-color="#ff30d5"/><stop offset="0.5151" stop-color="#ff1eb2"/><stop offset="0.5679" stop-color="#ff0e93"/><stop offset="0.6283" stop-color="#ff017a"/><stop offset="0.7" stop-color="#ff0064"/><stop offset="0.7849" stop-color="#ff0052"/><stop offset="0.883" stop-color="#ff0042"/><stop offset="1" stop-color="#ff0035"/></linearGradient><linearGradient id="u77"><stop offset="0" stop-color="#00b7ff"/><stop offset="0.2239" stop-color="#0080ff"/><stop offset="0.3226" stop-color="#7065ff"/><stop offset="0.4402" stop-color="#ff41fd"/><stop offset="0.4782" stop-color="#ff2cd4"/><stop offset="0.5218" stop-color="#ff1bb2"/><stop offset="0.5731" stop-color="#ff0c94"/><stop offset="0.6338" stop-color="#ff007b"/><stop offset="0.704" stop-color="#f06"/><stop offset="0.7875" stop-color="#ff0053"/><stop offset="0.8861" stop-color="#f04"/><stop offset="1" stop-color="#ff0036"/></linearGradient><linearGradient id="u78"><stop offset="0" stop-color="#00b4ff"/><stop offset="0.2267" stop-color="#017dff"/><stop offset="0.3295" stop-color="#7460ff"/><stop offset="0.4457" stop-color="#ff3dfd"/><stop offset="0.4838" stop-color="#ff29d4"/><stop offset="0.5276" stop-color="#ff19b2"/><stop offset="0.579" stop-color="#ff0a95"/><stop offset="0.6381" stop-color="#ff007d"/><stop offset="0.7086" stop-color="#ff0067"/><stop offset="0.7905" stop-color="#f05"/><stop offset="0.8876" stop-color="#ff0045"/><stop offset="1" stop-color="#ff0038"/></linearGradient><linearGradient id="u79"><stop offset="0" stop-color="#00b0ff"/><stop offset="0.2261" stop-color="#007aff"/><stop offset="0.3314" stop-color="#745dff"/><stop offset="0.4502" stop-color="#ff3afd"/><stop offset="0.4866" stop-color="#ff27d7"/><stop offset="0.5307" stop-color="#ff17b5"/><stop offset="0.5824" stop-color="#ff0997"/><stop offset="0.6264" stop-color="#ff0084"/><stop offset="0.6418" stop-color="#ff007e"/><stop offset="0.7107" stop-color="#ff0069"/><stop offset="0.7931" stop-color="#ff0057"/><stop offset="0.8889" stop-color="#ff0047"/><stop offset="1" stop-color="#ff003a"/></linearGradient><linearGradient id="u80"><stop offset="0" stop-color="#00acff"/><stop offset="0.2254" stop-color="#07f"/><stop offset="0.3314" stop-color="#715bff"/><stop offset="0.4547" stop-color="#ff37fd"/><stop offset="0.4913" stop-color="#ff25d7"/><stop offset="0.5356" stop-color="#ff15b5"/><stop offset="0.5761" stop-color="#ff0a9e"/><stop offset="0.6204" stop-color="#ff018a"/><stop offset="0.6474" stop-color="#ff007f"/><stop offset="0.7168" stop-color="#ff006a"/><stop offset="0.7977" stop-color="#ff0058"/><stop offset="0.8921" stop-color="#ff0048"/><stop offset="1" stop-color="#ff003b"/></linearGradient><linearGradient id="u81"><stop offset="0" stop-color="#00a8ff"/><stop offset="0.2267" stop-color="#0173ff"/><stop offset="0.3353" stop-color="#7357ff"/><stop offset="0.4593" stop-color="#ff33fd"/><stop offset="0.4961" stop-color="#ff22d8"/><stop offset="0.5407" stop-color="#ff13b6"/><stop offset="0.5795" stop-color="#ff09a0"/><stop offset="0.6221" stop-color="#ff008c"/><stop offset="0.6512" stop-color="#ff0081"/><stop offset="0.7209" stop-color="#ff006c"/><stop offset="0.8004" stop-color="#ff005a"/><stop offset="0.8934" stop-color="#ff004a"/><stop offset="1" stop-color="#ff003d"/></linearGradient><linearGradient id="u82"><stop offset="0" stop-color="#00a5ff"/><stop offset="0.2261" stop-color="#0071ff"/><stop offset="0.3372" stop-color="#7354ff"/><stop offset="0.4639" stop-color="#ff30fd"/><stop offset="0.501" stop-color="#ff20d8"/><stop offset="0.5458" stop-color="#ff11b7"/><stop offset="0.5809" stop-color="#ff08a3"/><stop offset="0.6199" stop-color="#ff0090"/><stop offset="0.655" stop-color="#ff0083"/><stop offset="0.7232" stop-color="#ff006e"/><stop offset="0.8031" stop-color="#ff005b"/><stop offset="0.8947" stop-color="#ff004c"/><stop offset="1" stop-color="#ff003f"/></linearGradient><linearGradient id="u83"><stop offset="0" stop-color="#00a1ff"/><stop offset="0.2255" stop-color="#006eff"/><stop offset="0.3392" stop-color="#7351ff"/><stop offset="0.4686" stop-color="#ff2dfd"/><stop offset="0.5059" stop-color="#ff1dd9"/><stop offset="0.551" stop-color="#ff0fb8"/><stop offset="0.6176" stop-color="#ff0095"/><stop offset="0.6588" stop-color="#ff0084"/><stop offset="0.7255" stop-color="#ff0070"/><stop offset="0.8039" stop-color="#ff005e"/><stop offset="0.8941" stop-color="#ff004e"/><stop offset="1" stop-color="#ff0040"/></linearGradient><linearGradient id="u84"><stop offset="0" stop-color="#009eff"/><stop offset="0.2268" stop-color="#016bff"/><stop offset="0.3432" stop-color="#744eff"/><stop offset="0.4734" stop-color="#ff2afd"/><stop offset="0.5108" stop-color="#ff1bd9"/><stop offset="0.5542" stop-color="#ff0eba"/><stop offset="0.6154" stop-color="#f09"/><stop offset="0.6627" stop-color="#ff0086"/><stop offset="0.7298" stop-color="#ff0071"/><stop offset="0.8067" stop-color="#ff005f"/><stop offset="0.8955" stop-color="#ff0050"/><stop offset="1" stop-color="#ff0042"/></linearGradient><linearGradient id="u85"><stop offset="0" stop-color="#009aff"/><stop offset="0.2262" stop-color="#0068ff"/><stop offset="0.3452" stop-color="#744bff"/><stop offset="0.4782" stop-color="#ff27fd"/><stop offset="0.5159" stop-color="#ff19da"/><stop offset="0.5595" stop-color="#ff0cba"/><stop offset="0.6131" stop-color="#ff009d"/><stop offset="0.6687" stop-color="#ff0087"/><stop offset="0.7341" stop-color="#ff0073"/><stop offset="0.8115" stop-color="#ff0061"/><stop offset="0.8988" stop-color="#ff0051"/><stop offset="1" stop-color="#f04"/></linearGradient><linearGradient id="u86"><stop offset="0" stop-color="#0097ff"/><stop offset="0.2251" stop-color="#06f"/><stop offset="0.3466" stop-color="#7449ff"/><stop offset="0.4821" stop-color="#ff25fe"/><stop offset="0.5199" stop-color="#ff17da"/><stop offset="0.5637" stop-color="#ff0abb"/><stop offset="0.6096" stop-color="#ff00a2"/><stop offset="0.6713" stop-color="#ff0089"/><stop offset="0.7371" stop-color="#ff0074"/><stop offset="0.8127" stop-color="#ff0062"/><stop offset="0.9004" stop-color="#ff0053"/><stop offset="1" stop-color="#ff0045"/></linearGradient><linearGradient id="u87"><stop offset="0" stop-color="#0094ff"/><stop offset="0.226" stop-color="#0064ff"/><stop offset="0.346" stop-color="#7047ff"/><stop offset="0.488" stop-color="#ff22fe"/><stop offset="0.526" stop-color="#ff14db"/><stop offset="0.57" stop-color="#ff08bc"/><stop offset="0.608" stop-color="#ff00a7"/><stop offset="0.676" stop-color="#ff008a"/><stop offset="0.742" stop-color="#ff0076"/><stop offset="0.816" stop-color="#ff0064"/><stop offset="1" stop-color="#ff0047"/></linearGradient><linearGradient id="u88"><stop offset="0" stop-color="#0091ff"/><stop offset="0.2274" stop-color="#0061ff"/><stop offset="0.3541" stop-color="#7543ff"/><stop offset="0.493" stop-color="#ff1ffe"/><stop offset="0.5312" stop-color="#ff12db"/><stop offset="0.5734" stop-color="#ff07be"/><stop offset="0.6076" stop-color="#ff00ab"/><stop offset="0.6801" stop-color="#ff008c"/><stop offset="0.7445" stop-color="#ff0078"/><stop offset="0.8189" stop-color="#f06"/><stop offset="1" stop-color="#ff0049"/></linearGradient><linearGradient id="u89"><stop offset="0" stop-color="#008eff"/><stop offset="0.2267" stop-color="#005fff"/><stop offset="0.3563" stop-color="#7541ff"/><stop offset="0.498" stop-color="#ff1dfe"/><stop offset="0.5364" stop-color="#ff10db"/><stop offset="0.5789" stop-color="#ff05be"/><stop offset="0.6053" stop-color="#ff00af"/><stop offset="0.6842" stop-color="#ff008d"/><stop offset="0.749" stop-color="#ff0079"/><stop offset="0.8219" stop-color="#ff0067"/><stop offset="1" stop-color="#ff004b"/></linearGradient><linearGradient id="u90"><stop offset="0" stop-color="#008bff"/><stop offset="0.2261" stop-color="#005cff"/><stop offset="0.3544" stop-color="#713fff"/><stop offset="0.5031" stop-color="#ff1afe"/><stop offset="0.5418" stop-color="#ff0edc"/><stop offset="0.5845" stop-color="#ff04bf"/><stop offset="0.6029" stop-color="#ff00b4"/><stop offset="0.6334" stop-color="#ff00a5"/><stop offset="0.6884" stop-color="#ff008f"/><stop offset="0.7515" stop-color="#ff007b"/><stop offset="0.8248" stop-color="#ff0069"/><stop offset="1" stop-color="#ff004c"/></linearGradient><linearGradient id="u91"><stop offset="0" stop-color="#08f"/><stop offset="0.2275" stop-color="#005aff"/><stop offset="0.3627" stop-color="#763cff"/><stop offset="0.5082" stop-color="#ff18fe"/><stop offset="0.5451" stop-color="#ff0dde"/><stop offset="0.5881" stop-color="#ff02c1"/><stop offset="0.6373" stop-color="#ff00a7"/><stop offset="0.6926" stop-color="#ff0090"/><stop offset="0.7561" stop-color="#ff007c"/><stop offset="0.8279" stop-color="#ff006b"/><stop offset="1" stop-color="#ff004e"/></linearGradient><linearGradient id="u92"><stop offset="0" stop-color="#0085ff"/><stop offset="0.2268" stop-color="#0058ff"/><stop offset="0.3649" stop-color="#7639ff"/><stop offset="0.5134" stop-color="#ff15fe"/><stop offset="0.5505" stop-color="#ff0bde"/><stop offset="0.5938" stop-color="#ff01c1"/><stop offset="0.6412" stop-color="#ff00a9"/><stop offset="0.6969" stop-color="#ff0092"/><stop offset="0.7588" stop-color="#ff007e"/><stop offset="0.8289" stop-color="#ff006d"/><stop offset="1" stop-color="#ff0050"/></linearGradient><linearGradient id="u93"><stop offset="0" stop-color="#0082ff"/><stop offset="0.2261" stop-color="#0056ff"/><stop offset="0.3631" stop-color="#7238ff"/><stop offset="0.5187" stop-color="#ff13fe"/><stop offset="0.556" stop-color="#ff09de"/><stop offset="0.5996" stop-color="#ff00c2"/><stop offset="0.6473" stop-color="#ff00a9"/><stop offset="0.7012" stop-color="#ff0094"/><stop offset="0.7635" stop-color="#ff0080"/><stop offset="0.832" stop-color="#ff006f"/><stop offset="1" stop-color="#ff0052"/></linearGradient><linearGradient id="u94"><stop offset="0" stop-color="#0080ff"/><stop offset="0.2276" stop-color="#0153ff"/><stop offset="0.3716" stop-color="#7734ff"/><stop offset="0.524" stop-color="#ff11fe"/><stop offset="0.5616" stop-color="#ff07df"/><stop offset="0.6033" stop-color="#ff00c4"/><stop offset="0.6514" stop-color="#ff00ab"/><stop offset="0.7056" stop-color="#ff0095"/><stop offset="0.7662" stop-color="#ff0082"/><stop offset="0.8351" stop-color="#ff0071"/><stop offset="1" stop-color="#ff0054"/></linearGradient><linearGradient id="u95"><stop offset="0" stop-color="#007dff"/><stop offset="0.2269" stop-color="#0051ff"/><stop offset="0.3739" stop-color="#7732ff"/><stop offset="0.5294" stop-color="#ff0ffe"/><stop offset="0.5882" stop-color="#ff00d1"/><stop offset="0.6092" stop-color="#ff00c4"/><stop offset="0.6576" stop-color="#ff00ac"/><stop offset="0.7101" stop-color="#ff0097"/><stop offset="0.771" stop-color="#ff0083"/><stop offset="0.8382" stop-color="#ff0072"/><stop offset="1" stop-color="#ff0056"/></linearGradient><linearGradient id="u96"><stop offset="0" stop-color="#007aff"/><stop offset="0.2262" stop-color="#0050ff"/><stop offset="0.3721" stop-color="#7331ff"/><stop offset="0.5349" stop-color="#ff0cfe"/><stop offset="0.5856" stop-color="#ff00d7"/><stop offset="0.6152" stop-color="#ff00c5"/><stop offset="0.6617" stop-color="#ff00ad"/><stop offset="0.7146" stop-color="#ff0098"/><stop offset="0.7738" stop-color="#ff0085"/><stop offset="0.8414" stop-color="#ff0074"/><stop offset="1" stop-color="#ff0058"/></linearGradient><linearGradient id="u97"><stop offset="0" stop-color="#0078ff"/><stop offset="0.2277" stop-color="#014dff"/><stop offset="0.3787" stop-color="#772eff"/><stop offset="0.5404" stop-color="#ff0afe"/><stop offset="0.5851" stop-color="#ff00db"/><stop offset="0.6191" stop-color="#ff00c7"/><stop offset="0.666" stop-color="#ff00af"/><stop offset="0.7191" stop-color="#ff009a"/><stop offset="0.7787" stop-color="#ff0087"/><stop offset="0.8447" stop-color="#ff0076"/><stop offset="1" stop-color="#ff005a"/></linearGradient><linearGradient id="u98"><stop offset="0" stop-color="#0075ff"/><stop offset="0.227" stop-color="#004cff"/><stop offset="0.3833" stop-color="#782cff"/><stop offset="0.546" stop-color="#ff08fe"/><stop offset="0.5824" stop-color="#ff00e2"/><stop offset="0.6253" stop-color="#ff00c7"/><stop offset="0.6724" stop-color="#ff00b0"/><stop offset="0.7238" stop-color="#ff009b"/><stop offset="0.8458" stop-color="#ff0078"/><stop offset="1" stop-color="#ff005c"/></linearGradient><linearGradient id="u99"><stop offset="0" stop-color="#0073ff"/><stop offset="0.2263" stop-color="#004aff"/><stop offset="0.3815" stop-color="#742bff"/><stop offset="0.5517" stop-color="#ff06fe"/><stop offset="0.5797" stop-color="#ff00e8"/><stop offset="0.6315" stop-color="#ff00c8"/><stop offset="0.6767" stop-color="#ff00b1"/><stop offset="0.7284" stop-color="#ff009d"/><stop offset="0.8491" stop-color="#ff007a"/><stop offset="1" stop-color="#ff005e"/></linearGradient><linearGradient id="u100"><stop offset="0" stop-color="#0070ff"/><stop offset="0.2278" stop-color="#0148ff"/><stop offset="0.3883" stop-color="#7828ff"/><stop offset="0.5575" stop-color="#ff04fe"/><stop offset="0.577" stop-color="#ff00ef"/><stop offset="0.6356" stop-color="#ff00c9"/><stop offset="0.6811" stop-color="#ff00b3"/><stop offset="0.7332" stop-color="#ff009e"/><stop offset="0.8525" stop-color="#ff007c"/><stop offset="1" stop-color="#ff0060"/></linearGradient><linearGradient id="u101"><stop offset="0" stop-color="#006eff"/><stop offset="0.2271" stop-color="#0046ff"/><stop offset="0.3908" stop-color="#7726ff"/><stop offset="0.5633" stop-color="#ff02fe"/><stop offset="0.6004" stop-color="#ff00e3"/><stop offset="0.6397" stop-color="#ff00cb"/><stop offset="0.6856" stop-color="#ff00b4"/><stop offset="0.7358" stop-color="#ff00a0"/><stop offset="0.8537" stop-color="#ff007e"/><stop offset="1" stop-color="#ff0062"/></linearGradient><linearGradient id="u102"><stop offset="0" stop-color="#006cff"/><stop offset="0.2264" stop-color="#04f"/><stop offset="0.3912" stop-color="#7525ff"/><stop offset="0.5692" stop-color="#ff00fe"/><stop offset="0.6066" stop-color="#ff00e3"/><stop offset="0.6462" stop-color="#ff00cb"/><stop offset="0.6901" stop-color="#ff00b6"/><stop offset="0.7407" stop-color="#ff00a2"/><stop offset="0.8571" stop-color="#ff0080"/><stop offset="1" stop-color="#ff0064"/></linearGradient><linearGradient id="u103"><stop offset="0" stop-color="#0069ff"/><stop offset="0.2279" stop-color="#0142ff"/><stop offset="0.3982" stop-color="#7823ff"/><stop offset="0.5752" stop-color="#ff00fe"/><stop offset="0.6128" stop-color="#ff00e3"/><stop offset="0.6527" stop-color="#f0c"/><stop offset="0.7456" stop-color="#ff00a3"/><stop offset="0.8606" stop-color="#ff0082"/><stop offset="1" stop-color="#f06"/></linearGradient><linearGradient id="u104"><stop offset="0" stop-color="#0067ff"/><stop offset="0.2272" stop-color="#0041ff"/><stop offset="0.4009" stop-color="#7821ff"/><stop offset="0.5657" stop-color="#f400ff"/><stop offset="0.5813" stop-color="#ff00fe"/><stop offset="0.6169" stop-color="#ff00e5"/><stop offset="0.657" stop-color="#ff00cd"/><stop offset="0.7016" stop-color="#ff00b8"/><stop offset="0.7506" stop-color="#ff00a5"/><stop offset="0.8641" stop-color="#ff0083"/><stop offset="1" stop-color="#ff0068"/></linearGradient><linearGradient id="u105"><stop offset="0" stop-color="#0065ff"/><stop offset="0.226" stop-color="#003fff"/><stop offset="0.4004" stop-color="#7620ff"/><stop offset="0.5615" stop-color="#ed00ff"/><stop offset="0.5861" stop-color="#ff00fe"/><stop offset="0.6219" stop-color="#ff00e5"/><stop offset="0.6622" stop-color="#ff00ce"/><stop offset="0.7539" stop-color="#ff00a6"/><stop offset="0.8658" stop-color="#ff0085"/><stop offset="1" stop-color="#ff006a"/></linearGradient><linearGradient id="u106"><stop offset="0" stop-color="#0063ff"/><stop offset="0.2275" stop-color="#013dff"/><stop offset="0.3964" stop-color="#711fff"/><stop offset="0.5586" stop-color="#e600ff"/><stop offset="0.5923" stop-color="#ff00fe"/><stop offset="0.6284" stop-color="#ff00e5"/><stop offset="0.6689" stop-color="#ff00ce"/><stop offset="0.759" stop-color="#ff00a8"/><stop offset="0.8694" stop-color="#ff0087"/><stop offset="1" stop-color="#ff006d"/></linearGradient><linearGradient id="u107"><stop offset="0" stop-color="#0060ff"/><stop offset="0.225" stop-color="#003cff"/><stop offset="0.3932" stop-color="#6e1fff"/><stop offset="0.5545" stop-color="#e000ff"/><stop offset="0.5977" stop-color="#ff00fe"/><stop offset="0.6341" stop-color="#ff00e6"/><stop offset="0.6727" stop-color="#ff00d0"/><stop offset="0.7614" stop-color="#f0a"/><stop offset="0.8705" stop-color="#ff0089"/><stop offset="1" stop-color="#ff006f"/></linearGradient><linearGradient id="u108"><stop offset="0" stop-color="#005eff"/><stop offset="0.2243" stop-color="#003bff"/><stop offset="0.3867" stop-color="#681fff"/><stop offset="0.5515" stop-color="#da00ff"/><stop offset="0.6041" stop-color="#ff00fe"/><stop offset="0.6773" stop-color="#ff00d2"/><stop offset="0.7666" stop-color="#ff00ab"/><stop offset="0.8719" stop-color="#ff008c"/><stop offset="1" stop-color="#ff0071"/></linearGradient><linearGradient id="u109"><stop offset="0" stop-color="#005cff"/><stop offset="0.2258" stop-color="#0139ff"/><stop offset="0.3894" stop-color="#681dff"/><stop offset="0.5484" stop-color="#d300ff"/><stop offset="0.6106" stop-color="#ff00fe"/><stop offset="0.6843" stop-color="#ff00d2"/><stop offset="0.7719" stop-color="#ff00ad"/><stop offset="0.8756" stop-color="#ff008e"/><stop offset="1" stop-color="#ff0073"/></linearGradient><linearGradient id="u110"><stop offset="0" stop-color="#005aff"/><stop offset="0.2251" stop-color="#0037ff"/><stop offset="0.3875" stop-color="#651cff"/><stop offset="0.5452" stop-color="#ce00ff"/><stop offset="0.6172" stop-color="#ff00fe"/><stop offset="0.6914" stop-color="#ff00d2"/><stop offset="0.7773" stop-color="#ff00ae"/><stop offset="0.8794" stop-color="#ff0090"/><stop offset="1" stop-color="#ff0076"/></linearGradient><linearGradient id="u111"><stop offset="0" stop-color="#0058ff"/><stop offset="0.2243" stop-color="#0036ff"/><stop offset="0.3832" stop-color="#601cff"/><stop offset="0.5421" stop-color="#c800ff"/><stop offset="0.6238" stop-color="#ff00fe"/><stop offset="0.6963" stop-color="#ff00d4"/><stop offset="0.7804" stop-color="#ff00b0"/><stop offset="0.8808" stop-color="#ff0092"/><stop offset="1" stop-color="#ff0078"/></linearGradient><linearGradient id="u112"><stop offset="0" stop-color="#0056ff"/><stop offset="0.2259" stop-color="#0134ff"/><stop offset="0.3859" stop-color="#601bff"/><stop offset="0.5388" stop-color="#c200ff"/><stop offset="0.6306" stop-color="#ff00fe"/><stop offset="0.7012" stop-color="#ff00d5"/><stop offset="0.7859" stop-color="#ff00b2"/><stop offset="0.8847" stop-color="#ff0094"/><stop offset="1" stop-color="#ff007b"/></linearGradient><linearGradient id="u113"><stop offset="0" stop-color="#0054ff"/><stop offset="0.2251" stop-color="#03f"/><stop offset="0.3839" stop-color="#5e1aff"/><stop offset="0.5355" stop-color="#bc00ff"/><stop offset="0.6374" stop-color="#ff00fe"/><stop offset="0.7085" stop-color="#ff00d6"/><stop offset="0.7915" stop-color="#ff00b3"/><stop offset="0.8886" stop-color="#ff0096"/><stop offset="1" stop-color="#ff007d"/></linearGradient><linearGradient id="u114"><stop offset="0" stop-color="#0053ff"/><stop offset="0.2243" stop-color="#0032ff"/><stop offset="0.3771" stop-color="#581aff"/><stop offset="0.5322" stop-color="#b700ff"/><stop offset="0.6444" stop-color="#ff00fe"/><stop offset="0.7136" stop-color="#ff00d7"/><stop offset="0.7947" stop-color="#ff00b5"/><stop offset="0.8902" stop-color="#ff0098"/><stop offset="1" stop-color="#ff0080"/></linearGradient><linearGradient id="u115"><stop offset="0" stop-color="#0051ff"/><stop offset="0.226" stop-color="#0130ff"/><stop offset="0.3798" stop-color="#5819ff"/><stop offset="0.5288" stop-color="#b200ff"/><stop offset="0.6514" stop-color="#ff00fe"/><stop offset="0.7212" stop-color="#ff00d8"/><stop offset="0.8005" stop-color="#ff00b7"/><stop offset="0.8918" stop-color="#ff009b"/><stop offset="1" stop-color="#ff0082"/></linearGradient><linearGradient id="u116"><stop offset="0" stop-color="#004fff"/><stop offset="0.2233" stop-color="#002fff"/><stop offset="0.3762" stop-color="#5518ff"/><stop offset="0.5243" stop-color="#ac00ff"/><stop offset="0.6578" stop-color="#ff00fe"/><stop offset="0.7257" stop-color="#ff00d9"/><stop offset="0.8034" stop-color="#ff00b9"/><stop offset="0.8956" stop-color="#ff009d"/><stop offset="1" stop-color="#ff0085"/></linearGradient><linearGradient id="u117"><stop offset="0" stop-color="#004dff"/><stop offset="0.2225" stop-color="#002eff"/><stop offset="0.3716" stop-color="#5118ff"/><stop offset="0.5208" stop-color="#a700ff"/><stop offset="0.665" stop-color="#f0f"/><stop offset="0.7311" stop-color="#ff00db"/><stop offset="0.8093" stop-color="#ff00ba"/><stop offset="0.8973" stop-color="#ff009f"/><stop offset="1" stop-color="#ff0087"/></linearGradient><linearGradient id="u118"><stop offset="0" stop-color="#004bff"/><stop offset="0.2241" stop-color="#012cff"/><stop offset="0.3719" stop-color="#5017ff"/><stop offset="0.5172" stop-color="#a200ff"/><stop offset="0.6724" stop-color="#f0f"/><stop offset="0.7389" stop-color="#ff00db"/><stop offset="0.8128" stop-color="#ff00bd"/><stop offset="0.899" stop-color="#ff00a2"/><stop offset="1" stop-color="#ff008a"/></linearGradient><linearGradient id="u119"><stop offset="0" stop-color="#004aff"/><stop offset="0.2233" stop-color="#002bff"/><stop offset="0.3697" stop-color="#4e16ff"/><stop offset="0.5136" stop-color="#9e00ff"/><stop offset="0.6799" stop-color="#f0f"/><stop offset="0.7444" stop-color="#ff00dc"/><stop offset="0.8189" stop-color="#ff00be"/><stop offset="0.9032" stop-color="#ff00a4"/><stop offset="1" stop-color="#ff008d"/></linearGradient><linearGradient id="u120"><stop offset="0" stop-color="#0048ff"/><stop offset="0.2225" stop-color="#002aff"/><stop offset="0.365" stop-color="#4a16ff"/><stop offset="0.51" stop-color="#90f"/><stop offset="0.6875" stop-color="#f0f"/><stop offset="0.7525" stop-color="#f0d"/><stop offset="0.825" stop-color="#ff00bf"/><stop offset="0.9075" stop-color="#ff00a6"/><stop offset="1" stop-color="#ff008f"/></linearGradient><linearGradient id="u121"><stop offset="0" stop-color="#0046ff"/><stop offset="0.2242" stop-color="#0129ff"/><stop offset="0.5088" stop-color="#9500ff"/><stop offset="0.6952" stop-color="#f0f"/><stop offset="0.7582" stop-color="#ff00de"/><stop offset="0.8287" stop-color="#ff00c2"/><stop offset="0.9093" stop-color="#ff00a8"/><stop offset="1" stop-color="#ff0092"/></linearGradient><linearGradient id="u122"><stop offset="0" stop-color="#0045ff"/><stop offset="0.2234" stop-color="#0028ff"/><stop offset="0.5051" stop-color="#9100ff"/><stop offset="0.703" stop-color="#f0f"/><stop offset="0.764" stop-color="#ff00df"/><stop offset="0.8325" stop-color="#ff00c4"/><stop offset="0.9112" stop-color="#ff00ab"/><stop offset="1" stop-color="#ff0095"/></linearGradient><linearGradient id="u123"><stop offset="0" stop-color="#0043ff"/><stop offset="0.2199" stop-color="#0027ff"/><stop offset="0.4987" stop-color="#8c00ff"/><stop offset="0.7084" stop-color="#f0f"/><stop offset="0.7698" stop-color="#ff00e0"/><stop offset="0.8363" stop-color="#ff00c5"/><stop offset="0.913" stop-color="#ff00ad"/><stop offset="1" stop-color="#ff0097"/></linearGradient><linearGradient id="u124"><stop offset="0" stop-color="#0041ff"/><stop offset="0.2216" stop-color="#0125ff"/><stop offset="0.4948" stop-color="#80f"/><stop offset="0.7165" stop-color="#f0f"/><stop offset="0.7758" stop-color="#ff00e1"/><stop offset="0.8428" stop-color="#ff00c6"/><stop offset="0.9175" stop-color="#ff00af"/><stop offset="1" stop-color="#ff009a"/></linearGradient><linearGradient id="u125"><stop offset="0" stop-color="#0040ff"/><stop offset="0.2208" stop-color="#0024ff"/><stop offset="0.4909" stop-color="#8400ff"/><stop offset="0.7221" stop-color="#fe00ff"/><stop offset="0.787" stop-color="#ff00e0"/><stop offset="0.8494" stop-color="#ff00c8"/><stop offset="0.9195" stop-color="#ff00b2"/><stop offset="1" stop-color="#ff009d"/></linearGradient><linearGradient id="u126"><stop offset="0" stop-color="#003eff"/><stop offset="0.2199" stop-color="#0023ff"/><stop offset="0.4869" stop-color="#7f00ff"/><stop offset="0.7304" stop-color="#fe00ff"/><stop offset="0.7958" stop-color="#ff00e0"/><stop offset="0.8534" stop-color="#ff00ca"/><stop offset="0.9241" stop-color="#ff00b4"/><stop offset="1" stop-color="#ff00a0"/></linearGradient><linearGradient id="u127"><stop offset="0" stop-color="#003dff"/><stop offset="0.2216" stop-color="#0122ff"/><stop offset="0.4828" stop-color="#7b00ff"/><stop offset="0.7388" stop-color="#fe00ff"/><stop offset="0.8021" stop-color="#ff00e2"/><stop offset="0.8602" stop-color="#ff00cb"/><stop offset="1" stop-color="#ff00a3"/></linearGradient><linearGradient id="u128"><stop offset="0" stop-color="#003bff"/><stop offset="0.2187" stop-color="#0021ff"/><stop offset="0.4773" stop-color="#70f"/><stop offset="0.7467" stop-color="#fe00ff"/><stop offset="0.864" stop-color="#ff00ce"/><stop offset="1" stop-color="#ff00a6"/></linearGradient><linearGradient id="u129"><stop offset="0" stop-color="#0039ff"/><stop offset="0.2177" stop-color="#0020ff"/><stop offset="0.4731" stop-color="#7300ff"/><stop offset="0.7554" stop-color="#fe00ff"/><stop offset="0.871" stop-color="#ff00cf"/><stop offset="1" stop-color="#ff00a9"/></linearGradient><linearGradient id="u130"><stop offset="0" stop-color="#0038ff"/><stop offset="0.2195" stop-color="#011fff"/><stop offset="0.4688" stop-color="#6f00ff"/><stop offset="0.7642" stop-color="#fe00ff"/><stop offset="0.8753" stop-color="#ff00d1"/><stop offset="1" stop-color="#ff00ac"/></linearGradient><linearGradient id="u131"><stop offset="0" stop-color="#0037ff"/><stop offset="0.2186" stop-color="#001eff"/><stop offset="0.4645" stop-color="#6c00ff"/><stop offset="0.776" stop-color="#f0f"/><stop offset="0.8798" stop-color="#ff00d3"/><stop offset="1" stop-color="#ff00af"/></linearGradient><linearGradient id="u132"><stop offset="0" stop-color="#0035ff"/><stop offset="0.2176" stop-color="#001dff"/><stop offset="0.4601" stop-color="#6800ff"/><stop offset="0.7851" stop-color="#f0f"/><stop offset="0.8843" stop-color="#ff00d6"/><stop offset="1" stop-color="#ff00b3"/></linearGradient><linearGradient id="u133"><stop offset="0" stop-color="#0034ff"/><stop offset="0.2173" stop-color="#011cff"/><stop offset="0.454" stop-color="#6400ff"/><stop offset="0.7939" stop-color="#f0f"/><stop offset="0.8886" stop-color="#ff00d8"/><stop offset="1" stop-color="#ff00b6"/></linearGradient><linearGradient id="u134"><stop offset="0" stop-color="#0032ff"/><stop offset="0.2163" stop-color="#001bff"/><stop offset="0.4494" stop-color="#6100ff"/><stop offset="0.8034" stop-color="#f0f"/><stop offset="0.8933" stop-color="#ff00da"/><stop offset="1" stop-color="#ff00b9"/></linearGradient><linearGradient id="u135"><stop offset="0" stop-color="#0031ff"/><stop offset="0.2153" stop-color="#001aff"/><stop offset="0.4448" stop-color="#5d00ff"/><stop offset="0.6289" stop-color="#ac00ff"/><stop offset="0.813" stop-color="#f0f"/><stop offset="0.9008" stop-color="#ff00db"/><stop offset="1" stop-color="#ff00bd"/></linearGradient><linearGradient id="u136"><stop offset="0" stop-color="#0030ff"/><stop offset="0.2143" stop-color="#0019ff"/><stop offset="0.44" stop-color="#5900ff"/><stop offset="0.6314" stop-color="#a0f"/><stop offset="0.8229" stop-color="#f0f"/><stop offset="0.9057" stop-color="#ff00de"/><stop offset="1" stop-color="#ff00c0"/></linearGradient><linearGradient id="u137"><stop offset="0" stop-color="#002eff"/><stop offset="0.2161" stop-color="#0018ff"/><stop offset="0.4352" stop-color="#5600ff"/><stop offset="0.634" stop-color="#a800ff"/><stop offset="0.8329" stop-color="#f0f"/><stop offset="0.9107" stop-color="#ff00e0"/><stop offset="1" stop-color="#ff00c4"/></linearGradient><linearGradient id="u138"><stop offset="0" stop-color="#002dff"/><stop offset="0.2128" stop-color="#0017ff"/><stop offset="0.4286" stop-color="#5300ff"/><stop offset="0.6356" stop-color="#a600ff"/><stop offset="0.8426" stop-color="#f0f"/><stop offset="0.9155" stop-color="#ff00e2"/><stop offset="1" stop-color="#ff00c7"/></linearGradient><linearGradient id="u139"><stop offset="0" stop-color="#002cff"/><stop offset="0.2118" stop-color="#0016ff"/><stop offset="0.4235" stop-color="#4f00ff"/><stop offset="0.6382" stop-color="#a500ff"/><stop offset="0.8529" stop-color="#f0f"/><stop offset="0.9235" stop-color="#ff00e3"/><stop offset="1" stop-color="#ff00cb"/></linearGradient><linearGradient id="u140"><stop offset="0" stop-color="#002bff"/><stop offset="0.2136" stop-color="#0015ff"/><stop offset="0.4214" stop-color="#4d00ff"/><stop offset="0.6439" stop-color="#a400ff"/><stop offset="0.8635" stop-color="#f0f"/><stop offset="0.9288" stop-color="#ff00e6"/><stop offset="1" stop-color="#ff00cf"/></linearGradient><linearGradient id="u141"><stop offset="0" stop-color="#0029ff"/><stop offset="0.2119" stop-color="#0015ff"/><stop offset="0.4149" stop-color="#4a00ff"/><stop offset="0.6448" stop-color="#a300ff"/><stop offset="0.8716" stop-color="#f0f"/><stop offset="0.9343" stop-color="#ff00e7"/><stop offset="1" stop-color="#ff00d2"/></linearGradient><linearGradient id="u142"><stop offset="0" stop-color="#0028ff"/><stop offset="0.2085" stop-color="#0014ff"/><stop offset="0.4079" stop-color="#4700ff"/><stop offset="0.6465" stop-color="#a100ff"/><stop offset="0.8822" stop-color="#f0f"/><stop offset="1" stop-color="#ff00d6"/></linearGradient><linearGradient id="u143"><stop offset="0" stop-color="#0027ff"/><stop offset="0.2104" stop-color="#0013ff"/><stop offset="0.4024" stop-color="#40f"/><stop offset="0.6524" stop-color="#a000ff"/><stop offset="0.8933" stop-color="#f0f"/><stop offset="1" stop-color="#ff00da"/></linearGradient><linearGradient id="u144"><stop offset="0" stop-color="#0026ff"/><stop offset="0.2092" stop-color="#0012ff"/><stop offset="0.3969" stop-color="#4100ff"/><stop offset="0.6554" stop-color="#9f00ff"/><stop offset="0.9046" stop-color="#f0f"/><stop offset="1" stop-color="#ff00de"/></linearGradient><linearGradient id="u145"><stop offset="0" stop-color="#0024ff"/><stop offset="0.2081" stop-color="#01f"/><stop offset="0.3913" stop-color="#3e00ff"/><stop offset="0.6584" stop-color="#9d00ff"/><stop offset="0.9161" stop-color="#f0f"/><stop offset="1" stop-color="#ff00e2"/></linearGradient><linearGradient id="u146"><stop offset="0" stop-color="#0023ff"/><stop offset="0.2075" stop-color="#0010ff"/><stop offset="0.3836" stop-color="#3b00ff"/><stop offset="0.6604" stop-color="#9c00ff"/><stop offset="0.9277" stop-color="#f0f"/><stop offset="1" stop-color="#ff00e6"/></linearGradient><linearGradient id="u147"><stop offset="0" stop-color="#02f"/><stop offset="0.2063" stop-color="#0010ff"/><stop offset="0.3778" stop-color="#3800ff"/><stop offset="0.6635" stop-color="#9a00ff"/><stop offset="0.9397" stop-color="#f0f"/><stop offset="1" stop-color="#ff00ea"/></linearGradient><linearGradient id="u148"><stop offset="0" stop-color="#0021ff"/><stop offset="0.2083" stop-color="#010fff"/><stop offset="0.3718" stop-color="#3500ff"/><stop offset="0.6667" stop-color="#9800ff"/><stop offset="0.9519" stop-color="#f0f"/><stop offset="1" stop-color="#f0e"/></linearGradient><linearGradient id="u149"><stop offset="0" stop-color="#0020ff"/><stop offset="0.2045" stop-color="#000eff"/><stop offset="0.3636" stop-color="#3200ff"/><stop offset="0.6688" stop-color="#9700ff"/><stop offset="0.9643" stop-color="#f0f"/><stop offset="1" stop-color="#ff00f3"/></linearGradient><linearGradient id="u150"><stop offset="0" stop-color="#001fff"/><stop offset="0.2033" stop-color="#000dff"/><stop offset="0.3574" stop-color="#3000ff"/><stop offset="0.6721" stop-color="#9500ff"/><stop offset="0.977" stop-color="#f0f"/><stop offset="1" stop-color="#ff00f7"/></linearGradient><linearGradient id="u151"><stop offset="0" stop-color="#001dff"/><stop offset="0.2053" stop-color="#010cff"/><stop offset="0.351" stop-color="#2d00ff"/><stop offset="0.6755" stop-color="#9400ff"/><stop offset="0.9901" stop-color="#f0f"/><stop offset="1" stop-color="#ff00fc"/></linearGradient><linearGradient id="u152"><stop offset="0" stop-color="#001cff"/><stop offset="0.2013" stop-color="#000cff"/><stop offset="0.3423" stop-color="#2a00ff"/><stop offset="0.6779" stop-color="#9200ff"/><stop offset="1" stop-color="#fe00ff"/></linearGradient><linearGradient id="u153"><stop offset="0" stop-color="#001bff"/><stop offset="0.2" stop-color="#000bff"/><stop offset="0.3356" stop-color="#2800ff"/><stop offset="0.6746" stop-color="#8f00ff"/><stop offset="1" stop-color="#f900ff"/></linearGradient><linearGradient id="u154"><stop offset="0" stop-color="#001aff"/><stop offset="0.2021" stop-color="#010aff"/><stop offset="0.3288" stop-color="#2500ff"/><stop offset="0.6712" stop-color="#8b00ff"/><stop offset="1" stop-color="#f500ff"/></linearGradient><linearGradient id="u155"><stop offset="0" stop-color="#0019ff"/><stop offset="0.1979" stop-color="#010aff"/><stop offset="0.3194" stop-color="#20f"/><stop offset="0.6667" stop-color="#80f"/><stop offset="1" stop-color="#f000ff"/></linearGradient><linearGradient id="u156"><stop offset="0" stop-color="#0018ff"/><stop offset="0.1965" stop-color="#0009ff"/><stop offset="0.3123" stop-color="#2000ff"/><stop offset="0.6632" stop-color="#8500ff"/><stop offset="1" stop-color="#ec00ff"/></linearGradient><linearGradient id="u157"><stop offset="0" stop-color="#0017ff"/><stop offset="0.195" stop-color="#0008ff"/><stop offset="0.305" stop-color="#1e00ff"/><stop offset="0.6596" stop-color="#8100ff"/><stop offset="1" stop-color="#e800ff"/></linearGradient><linearGradient id="u158"><stop offset="0" stop-color="#0016ff"/><stop offset="0.1942" stop-color="#0108ff"/><stop offset="0.295" stop-color="#1b00ff"/><stop offset="0.6547" stop-color="#7e00ff"/><stop offset="1" stop-color="#e300ff"/></linearGradient><linearGradient id="u159"><stop offset="0" stop-color="#0015ff"/><stop offset="0.1927" stop-color="#0007ff"/><stop offset="0.2873" stop-color="#1900ff"/><stop offset="0.6509" stop-color="#7b00ff"/><stop offset="1" stop-color="#df00ff"/></linearGradient><linearGradient id="u160"><stop offset="0" stop-color="#0014ff"/><stop offset="0.1875" stop-color="#0006ff"/><stop offset="0.2794" stop-color="#1700ff"/><stop offset="0.6471" stop-color="#7900ff"/><stop offset="1" stop-color="#dc00ff"/></linearGradient><linearGradient id="u161"><stop offset="0" stop-color="#0013ff"/><stop offset="0.1896" stop-color="#0106ff"/><stop offset="0.2714" stop-color="#1500ff"/><stop offset="0.6431" stop-color="#7500ff"/><stop offset="1" stop-color="#d800ff"/></linearGradient><linearGradient id="u162"><stop offset="0" stop-color="#0012ff"/><stop offset="0.188" stop-color="#0005ff"/><stop offset="0.2632" stop-color="#1300ff"/><stop offset="0.6391" stop-color="#7200ff"/><stop offset="1" stop-color="#d400ff"/></linearGradient><linearGradient id="u163"><stop offset="0" stop-color="#01f"/><stop offset="0.1832" stop-color="#0005ff"/><stop offset="0.2519" stop-color="#1000ff"/><stop offset="0.6336" stop-color="#6f00ff"/><stop offset="1" stop-color="#d000ff"/></linearGradient><linearGradient id="u164"><stop offset="0" stop-color="#0010ff"/><stop offset="0.1853" stop-color="#0104ff"/><stop offset="0.2432" stop-color="#0e00ff"/><stop offset="0.6293" stop-color="#6c00ff"/><stop offset="1" stop-color="#c0f"/></linearGradient><linearGradient id="u165"><stop offset="0" stop-color="#000fff"/><stop offset="0.1804" stop-color="#0003ff"/><stop offset="0.2314" stop-color="#0c00ff"/><stop offset="0.5961" stop-color="#6300ff"/><stop offset="1" stop-color="#c900ff"/></linearGradient><linearGradient id="u166"><stop offset="0" stop-color="#000eff"/><stop offset="0.1786" stop-color="#0003ff"/><stop offset="0.2222" stop-color="#0a00ff"/><stop offset="0.5952" stop-color="#6100ff"/><stop offset="1" stop-color="#c500ff"/></linearGradient><linearGradient id="u167"><stop offset="0" stop-color="#000dff"/><stop offset="0.1774" stop-color="#0102ff"/><stop offset="0.5968" stop-color="#6000ff"/><stop offset="1" stop-color="#c100ff"/></linearGradient><linearGradient id="u168"><stop offset="0" stop-color="#000cff"/><stop offset="0.1755" stop-color="#0001ff"/><stop offset="0.5959" stop-color="#5e00ff"/><stop offset="1" stop-color="#be00ff"/></linearGradient><linearGradient id="u169"><stop offset="0" stop-color="#000bff"/><stop offset="0.1736" stop-color="#0001ff"/><stop offset="0.595" stop-color="#5c00ff"/><stop offset="1" stop-color="#ba00ff"/></linearGradient><linearGradient id="u170"><stop offset="0" stop-color="#000aff"/><stop offset="0.1723" stop-color="#0100ff"/><stop offset="0.5924" stop-color="#5a00ff"/><stop offset="1" stop-color="#b600ff"/></linearGradient><linearGradient id="u171"><stop offset="0" stop-color="#0009ff"/><stop offset="0.1702" stop-color="#00f"/><stop offset="0.5915" stop-color="#5800ff"/><stop offset="1" stop-color="#b300ff"/></linearGradient><linearGradient id="u172"><stop offset="0" stop-color="#0008ff"/><stop offset="0.1645" stop-color="#00f"/><stop offset="0.5887" stop-color="#5700ff"/><stop offset="1" stop-color="#b000ff"/></linearGradient><linearGradient id="u173"><stop offset="0" stop-color="#0007ff"/><stop offset="0.163" stop-color="#0100ff"/><stop offset="0.5859" stop-color="#50f"/><stop offset="1" stop-color="#ac00ff"/></linearGradient><linearGradient id="u174"><stop offset="0" stop-color="#0007ff"/><stop offset="0.1607" stop-color="#00f"/><stop offset="0.5848" stop-color="#5300ff"/><stop offset="1" stop-color="#a900ff"/></linearGradient><linearGradient id="u175"><stop offset="0" stop-color="#0006ff"/><stop offset="0.1545" stop-color="#00f"/><stop offset="0.5818" stop-color="#5100ff"/><stop offset="1" stop-color="#a600ff"/></linearGradient><linearGradient id="u176"><stop offset="0" stop-color="#0005ff"/><stop offset="0.1567" stop-color="#0100ff"/><stop offset="0.5853" stop-color="#5100ff"/><stop offset="1" stop-color="#a200ff"/></linearGradient><linearGradient id="u177"><stop offset="0" stop-color="#0004ff"/><stop offset="0.1502" stop-color="#00f"/><stop offset="0.5822" stop-color="#4f00ff"/><stop offset="1" stop-color="#9f00ff"/></linearGradient><linearGradient id="u178"><stop offset="0" stop-color="#0003ff"/><stop offset="0.1469" stop-color="#00f"/><stop offset="0.5782" stop-color="#4d00ff"/><stop offset="1" stop-color="#9d00ff"/></linearGradient><linearGradient id="u179"><stop offset="0" stop-color="#0002ff"/><stop offset="0.1449" stop-color="#0100ff"/><stop offset="1" stop-color="#9a00ff"/></linearGradient><linearGradient id="u180"><stop offset="0" stop-color="#0001ff"/><stop offset="0.1379" stop-color="#00f"/><stop offset="1" stop-color="#9700ff"/></linearGradient><linearGradient id="u181"><stop offset="0" stop-color="#0001ff"/><stop offset="0.135" stop-color="#00f"/><stop offset="1" stop-color="#9400ff"/></linearGradient><linearGradient id="u182"><stop offset="0" stop-color="#00f"/><stop offset="0.1327" stop-color="#0100ff"/><stop offset="1" stop-color="#9100ff"/></linearGradient><linearGradient id="u183"><stop offset="0" stop-color="#00f"/><stop offset="0.125" stop-color="#00f"/><stop offset="1" stop-color="#8e00ff"/></linearGradient><linearGradient id="u184"><stop offset="0" stop-color="#00f"/><stop offset="0.1217" stop-color="#00f"/><stop offset="1" stop-color="#8b00ff"/></linearGradient><linearGradient id="u185"><stop offset="0" stop-color="#00f"/><stop offset="0.1189" stop-color="#0100ff"/><stop offset="1" stop-color="#80f"/></linearGradient><linearGradient id="u186"><stop offset="0" stop-color="#00f"/><stop offset="0.1105" stop-color="#00f"/><stop offset="1" stop-color="#8500ff"/></linearGradient><linearGradient id="u187"><stop offset="0" stop-color="#00f"/><stop offset="0.1067" stop-color="#00f"/><stop offset="1" stop-color="#8300ff"/></linearGradient><linearGradient id="u188"><stop offset="0" stop-color="#00f"/><stop offset="0.1034" stop-color="#0100ff"/><stop offset="1" stop-color="#8000ff"/></linearGradient><linearGradient id="u189"><stop offset="0" stop-color="#00f"/><stop offset="0.0941" stop-color="#00f"/><stop offset="1" stop-color="#7d00ff"/></linearGradient><linearGradient id="u190"><stop offset="0" stop-color="#00f"/><stop offset="0.0843" stop-color="#00f"/><stop offset="1" stop-color="#7a00ff"/></linearGradient><linearGradient id="u191"><stop offset="0" stop-color="#00f"/><stop offset="0.0802" stop-color="#0100ff"/><stop offset="1" stop-color="#7800ff"/></linearGradient><linearGradient id="u192"><stop offset="0" stop-color="#00f"/><stop offset="0.0755" stop-color="#00f"/><stop offset="1" stop-color="#7500ff"/></linearGradient><linearGradient id="u193"><stop offset="0" stop-color="#00f"/><stop offset="0.0645" stop-color="#00f"/><stop offset="1" stop-color="#7300ff"/></linearGradient><linearGradient id="u194"><stop offset="0" stop-color="#00f"/><stop offset="0.0596" stop-color="#0100ff"/><stop offset="1" stop-color="#7000ff"/></linearGradient><linearGradient id="u195"><stop offset="0" stop-color="#00f"/><stop offset="0.0476" stop-color="#00f"/><stop offset="1" stop-color="#6e00ff"/></linearGradient><linearGradient id="u196"><stop offset="0" stop-color="#00f"/><stop offset="0.0694" stop-color="#0400ff"/><stop offset="1" stop-color="#6c00ff"/></linearGradient><linearGradient id="u197"><stop offset="0" stop-color="#00f"/><stop offset="0.0214" stop-color="#00f"/><stop offset="0.2071" stop-color="#1300ff"/><stop offset="1" stop-color="#6900ff"/></linearGradient><linearGradient id="u198"><stop offset="0" stop-color="#00f"/><stop offset="1" stop-color="#6700ff"/></linearGradient><linearGradient id="u199"><stop offset="0" stop-color="#00f"/><stop offset="1" stop-color="#6500ff"/></linearGradient><linearGradient id="u200"><stop offset="0" stop-color="#0200ff"/><stop offset="1" stop-color="#6200ff"/></linearGradient><linearGradient id="u201"><stop offset="0" stop-color="#0300ff"/><stop offset="1" stop-color="#6000ff"/></linearGradient><linearGradient id="u202"><stop offset="0" stop-color="#0500ff"/><stop offset="1" stop-color="#5e00ff"/></linearGradient><linearGradient id="u203"><stop offset="0" stop-color="#0600ff"/><stop offset="1" stop-color="#5b00ff"/></linearGradient><linearGradient id="u204"><stop offset="0" stop-color="#0700ff"/><stop offset="1" stop-color="#5900ff"/></linearGradient><linearGradient id="u205"><stop offset="0" stop-color="#0900ff"/><stop offset="1" stop-color="#5700ff"/></linearGradient><linearGradient id="u206"><stop offset="0" stop-color="#0a00ff"/><stop offset="1" stop-color="#50f"/></linearGradient><linearGradient id="u207"><stop offset="0" stop-color="#0b00ff"/><stop offset="1" stop-color="#5200ff"/></linearGradient><linearGradient id="u208"><stop offset="0" stop-color="#0d00ff"/><stop offset="1" stop-color="#5000ff"/></linearGradient><linearGradient id="u209"><stop offset="0" stop-color="#0e00ff"/><stop offset="1" stop-color="#4e00ff"/></linearGradient><linearGradient id="u210"><stop offset="0" stop-color="#0f00ff"/><stop offset="1" stop-color="#4c00ff"/></linearGradient><linearGradient id="u211"><stop offset="0" stop-color="#10f"/><stop offset="1" stop-color="#4a00ff"/></linearGradient><linearGradient id="u212"><stop offset="0" stop-color="#1200ff"/><stop offset="1" stop-color="#4800ff"/></linearGradient><linearGradient id="u213"><stop offset="0" stop-color="#1400ff"/><stop offset="1" stop-color="#4600ff"/></linearGradient><linearGradient id="u214"><stop offset="0" stop-color="#1500ff"/><stop offset="1" stop-color="#4500ff"/></linearGradient><linearGradient id="u215"><stop offset="0" stop-color="#1700ff"/><stop offset="1" stop-color="#4300ff"/></linearGradient><linearGradient id="u216"><stop offset="0" stop-color="#1800ff"/><stop offset="1" stop-color="#4100ff"/></linearGradient><linearGradient id="u217"><stop offset="0" stop-color="#1900ff"/><stop offset="1" stop-color="#3f00ff"/></linearGradient><linearGradient id="u218"><stop offset="0" stop-color="#1a00ff"/><stop offset="1" stop-color="#3d00ff"/></linearGradient><linearGradient id="u219"><stop offset="0" stop-color="#1b00ff"/><stop offset="1" stop-color="#3b00ff"/></linearGradient><linearGradient id="u220"><stop offset="0" stop-color="#1d00ff"/><stop offset="1" stop-color="#3900ff"/></linearGradient><linearGradient id="u221"><stop offset="0" stop-color="#1e00ff"/><stop offset="1" stop-color="#3700ff"/></linearGradient><linearGradient id="u222"><stop offset="0" stop-color="#1f00ff"/><stop offset="1" stop-color="#3500ff"/></linearGradient><linearGradient id="u223"><stop offset="0" stop-color="#2100ff"/><stop offset="1" stop-color="#30f"/></linearGradient><linearGradient id="u224"><stop offset="0" stop-color="#20f"/><stop offset="1" stop-color="#3200ff"/></linearGradient><linearGradient id="u225"><stop offset="0" stop-color="#2300ff"/><stop offset="1" stop-color="#3000ff"/></linearGradient><linearGradient id="u226"><stop offset="0" stop-color="#2400ff"/><stop offset="1" stop-color="#2e00ff"/></linearGradient><linearGradient id="u227"><stop offset="0" stop-color="#2600ff"/><stop offset="1" stop-color="#2c00ff"/></linearGradient>
<clipPath id="locclip"><path d="M258.6 462.6 L257.4 461.7 L256.0 460.6 L254.4 459.4 L252.5 457.9 L250.4 456.2 L248.0 454.2 L245.5 452.0 L242.7 449.6 L239.6 447.0 L236.2 444.2 L232.4 441.0 L228.1 437.5 L223.5 433.7 L218.5 429.6 L213.1 425.1 L207.2 420.1 L200.9 414.4 L194.1 408.2 L186.9 401.2 L179.1 393.2 L170.3 383.4 L160.2 371.4 L149.2 357.5 L137.5 341.9 L125.2 324.5 L112.3 305.3 L99.2 284.4 L85.9 262.4 L72.8 239.9 L60.2 216.9 L48.7 194.0 L38.5 171.9 L29.5 150.7 L21.8 130.9 L15.4 112.9 L10.4 96.8 L6.7 82.6 L4.1 70.3 L2.5 59.6 L1.9 50.5 L2.2 42.6 L3.3 35.8 L5.3 30.0 L8.0 25.1 L11.3 21.2 L15.2 18.2 L19.6 15.9 L24.3 14.3 L29.5 13.2 L34.8 12.5 L40.5 12.1 L46.3 11.9 L52.2 11.8 L58.0 11.8 L63.9 11.9 L69.9 12.1 L76.0 12.4 L82.2 12.7 L88.7 13.1 L95.4 13.6 L102.2 14.2 L109.4 14.8 L116.8 15.5 L124.5 16.3 L132.5 17.1 L140.8 18.0 L149.4 18.9 L158.5 19.9 L167.9 20.9 L177.6 22.0 L187.8 23.2 L198.5 24.4 L209.5 25.6 L221.0 26.9 L232.9 28.3 L245.2 29.7 L258.0 31.2 L271.1 32.7 L284.7 34.2 L298.7 35.9 L313.0 37.5 L327.6 39.2 L342.5 40.9 L357.6 42.6 L372.7 44.4 L387.7 46.1 L402.3 47.8 L416.8 49.4 L431.2 51.1 L445.4 52.7 L459.1 54.3 L472.1 55.8 L484.5 57.2 L496.3 58.5 L507.6 59.8 L518.1 61.1 L528.0 62.2 L537.2 63.2 L545.8 64.2 L553.7 65.1 L561.2 66.0 L568.1 66.8 L574.6 67.5 L580.8 68.3 L586.7 68.9 L592.1 69.6 L597.2 70.1 L602.0 70.7 L606.4 71.2 L610.4 71.7 L614.0 72.1 L617.2 72.4 L620.0 72.8 L622.6 73.1 L625.0 73.3 L627.1 73.6 L629.0 73.8 L630.6 74.0 L632.0 74.1 L633.2 74.3 L634.2 74.4 L635.2 74.5 L636.2 74.6 L637.0 74.7 L637.8 74.8 L638.5 74.9 L639.3 75.0 L640.1 75.1 L640.8 75.2 L641.5 75.2 L642.1 75.3 L642.5 75.4 L642.8 75.4 L643.0 75.4 L643.2 75.4 L643.4 75.5 L643.6 75.5 L643.6 75.5 L270.4 459.2 Q265.5 464.2 258.6 462.6 Z"/></clipPath><clipPath id="plotclip"><rect x="1" y="1" width="618.5" height="476.5"/></clipPath>
<linearGradient id="thg" x1="0" y1="0" x2="0" y2="1"><stop offset="0" stop-color="#303030"/><stop offset="0.47" stop-color="#282828"/><stop offset="0.5" stop-color="#161616"/><stop offset="1" stop-color="#202020"/></linearGradient>
<linearGradient id="rhd" x1="0" y1="0" x2="0" y2="1"><stop offset="0" stop-color="#2a2a2a"/><stop offset="1" stop-color="#1a1a1a"/></linearGradient>
<clipPath id="tclip"><rect x="994" y="605" width="613" height="190.5"/></clipPath>
<linearGradient id="bbg" x1="0" y1="0" x2="0" y2="1"><stop offset="0" stop-color="#a2a2a2"/><stop offset="0.5" stop-color="#7c7c7c"/><stop offset="1" stop-color="#5a5a5a"/></linearGradient>
<linearGradient id="bbs" x1="0" y1="0" x2="0" y2="1"><stop offset="0" stop-color="#1c1c1c"/><stop offset="1" stop-color="#353535"/></linearGradient>
<linearGradient id="cbg" x1="0" y1="0" x2="0" y2="1"><stop offset="0" stop-color="#a8a8a8"/><stop offset="1" stop-color="#5e5e5e"/></linearGradient>
<linearGradient id="cbd" x1="0" y1="0" x2="0" y2="1"><stop offset="0" stop-color="#7a7a7a"/><stop offset="1" stop-color="#4a4a4a"/></linearGradient>
<linearGradient id="cic" x1="0" y1="0" x2="0" y2="1"><stop offset="0" stop-color="#6a6a6a"/><stop offset="1" stop-color="#9a9a9a"/></linearGradient>
<linearGradient id="cbg2" x1="0" y1="0" x2="0" y2="1"><stop offset="0" stop-color="#8e8e8e"/><stop offset="1" stop-color="#5a5a5a"/></linearGradient>
<linearGradient id="stb" x1="0" y1="0" x2="0" y2="1"><stop offset="0" stop-color="#a4a4a4"/><stop offset="0.5" stop-color="#989898"/><stop offset="0.52" stop-color="#848484"/><stop offset="1" stop-color="#8c8c8c"/></linearGradient></defs>
<rect x="0" y="0" width="1667" height="901" fill="#333333"/>
<rect x="0" y="0" width="1667" height="35" fill="#222222"/>
<rect x="0" y="0" width="3.6" height="901" fill="#444444"/>
<rect x="0" y="0" width="1.3" height="901" fill="#585858"/>
<path d="M4 35.5 V3 Q4 0 8 0 H114 Q118.5 0 118.5 4 V35.5" fill="url(#tabg)" stroke="#646464" stroke-width="1"/>
<line x1="76.5" y1="0" x2="76.5" y2="35" stroke="#646464" stroke-width="1"/>
<text x="11" y="23.5" font-size="14.5" fill="#ededed" textLength="58.0" lengthAdjust="spacingAndGlyphs">History 1</text>
<circle cx="95.5" cy="19.5" r="12" fill="url(#plusg)"/>
<text x="95.5" y="24.5" font-size="13" fill="#9a9a9a" text-anchor="middle">+</text>
<path d="M1057.5 35 V3 Q1057.5 0 1060.5 0 H1232 Q1236 0 1236 4 V35 Z" fill="url(#png)"/>
<path d="M1057.5 35 V3 Q1057.5 0 1060.5 0 H1065.5 V35 Z" fill="url(#gst)"/>
<line x1="1191.5" y1="0" x2="1191.5" y2="35" stroke="#3a3a3a" stroke-width="1"/>
<line x1="1192.5" y1="0" x2="1192.5" y2="35" stroke="#646464" stroke-width="1"/>
<text x="1069" y="12" font-size="12.6" fill="#f1eee6" textLength="81.6" lengthAdjust="spacingAndGlyphs" stroke="#f1eee6" stroke-width="0.25">X-Rite i1Pro 3</text>
<text x="1069" y="30.6" font-size="12.6" fill="#f1eee6" textLength="69.6" lengthAdjust="spacingAndGlyphs" stroke="#f1eee6" stroke-width="0.25">Direct View</text>
<circle cx="1167" cy="16.5" r="12.5" fill="url(#ddg)"/>
<path d="M1160.5 15 h13 l-6.5 6.5 z" fill="#ffffff"/>
<circle cx="1217" cy="16.8" r="15.4" fill="#0606e8" stroke="#eeeeff" stroke-width="1.5"/>
<text x="1217" y="21" font-size="11.5" fill="#ffffff" textLength="17.6" lengthAdjust="spacingAndGlyphs" text-anchor="middle">704</text>
<rect x="1238" y="0" width="7" height="35" fill="url(#shd)"/>
<path d="M1244.5 35 V3 Q1244.5 0 1247.5 0 H1402 Q1406 0 1406 4 V35 Z" fill="url(#png)"/>
<path d="M1244.5 35 V3 Q1244.5 0 1247.5 0 H1251 V35 Z" fill="url(#lgs)"/>
<text x="1255.2" y="12" font-size="12.6" fill="#f1eee6" textLength="80.0" lengthAdjust="spacingAndGlyphs" stroke="#f1eee6" stroke-width="0.25">Mobile Forge</text>
<circle cx="1386" cy="16.5" r="12.5" fill="url(#ddg)"/>
<path d="M1379.5 15 h13 l-6.5 6.5 z" fill="#ffffff"/>
<path d="M1413.5 35 V3 Q1413.5 0 1416.5 0 H1589 Q1593 0 1593 4 V35 Z" fill="url(#png)"/>
<path d="M1413.5 35 V3 Q1413.5 0 1416.5 0 H1421 V35 Z" fill="url(#yst)"/>
<text x="1425" y="12" font-size="12.6" fill="#f1eee6" textLength="132.0" lengthAdjust="spacingAndGlyphs" stroke="#f1eee6" stroke-width="0.25">Direct Display Control</text>
<circle cx="1573" cy="16.5" r="12.5" fill="url(#ddg)"/>
<path d="M1566.5 15 h13 l-6.5 6.5 z" fill="#ffffff"/>
<path d="M1597.5 -1 V27 Q1597.5 32.5 1603 32.5 H1633 Q1638.5 32.5 1638.5 27 V-1 Z" fill="url(#btg)" stroke="#d0d0d0" stroke-width="1"/>
<circle cx="1618" cy="15.5" r="12.5" fill="url(#ddg2)"/>
<g transform="translate(1618,15.5)" fill="#d2d2d2"><circle r="4.9" fill="none" stroke="#d2d2d2" stroke-width="2.6"/><rect x="-1.6" y="-8.3" width="3.2" height="3.4" transform="rotate(0)"/><rect x="-1.6" y="-8.3" width="3.2" height="3.4" transform="rotate(45)"/><rect x="-1.6" y="-8.3" width="3.2" height="3.4" transform="rotate(90)"/><rect x="-1.6" y="-8.3" width="3.2" height="3.4" transform="rotate(135)"/><rect x="-1.6" y="-8.3" width="3.2" height="3.4" transform="rotate(180)"/><rect x="-1.6" y="-8.3" width="3.2" height="3.4" transform="rotate(225)"/><rect x="-1.6" y="-8.3" width="3.2" height="3.4" transform="rotate(270)"/><rect x="-1.6" y="-8.3" width="3.2" height="3.4" transform="rotate(315)"/></g>
<path d="M1640.5 -1 V27 Q1640.5 32.5 1646 32.5 H1668 V-1 Z" fill="url(#btg)" stroke="#d0d0d0" stroke-width="1"/>
<circle cx="1656" cy="15.5" r="12.5" fill="url(#ddg2)"/>
<path d="M1653 14.7 L1660 8.3 V21 Z" fill="#ffffff"/>
<text x="54" y="91.5" font-size="36.5" fill="#f4f4f4" textLength="216.0" lengthAdjust="spacingAndGlyphs">Color Gamut</text>
<text x="45" y="652.5" font-size="27.5" fill="#f4f4f4" textLength="211.0" lengthAdjust="spacingAndGlyphs">Current Reading</text>
<text x="45" y="721.5" font-size="24" fill="#f4f4f4" textLength="99.0" lengthAdjust="spacingAndGlyphs">x: 0,3112</text>
<text x="196.5" y="721.5" font-size="24" fill="#f4f4f4" textLength="99.5" lengthAdjust="spacingAndGlyphs">y: 0,3285</text>
<text x="45" y="760" font-size="24" fill="#f4f4f4" textLength="107.0" lengthAdjust="spacingAndGlyphs">fL: 142,24</text>
<text x="45" y="799.5" font-size="24" fill="#f4f4f4" textLength="154.0" lengthAdjust="spacingAndGlyphs">cd/m²: 487,35</text>
<rect x="50.5" y="145.5" width="324" height="401" fill="#242424"/>
<line x1="92.5" y1="145.5" x2="92.5" y2="546.5" stroke="#909090" stroke-width="1"/>
<line x1="136.5" y1="145.5" x2="136.5" y2="546.5" stroke="#909090" stroke-width="1"/>
<line x1="179.5" y1="145.5" x2="179.5" y2="546.5" stroke="#909090" stroke-width="1"/>
<line x1="223.5" y1="145.5" x2="223.5" y2="546.5" stroke="#909090" stroke-width="1"/>
<line x1="266.5" y1="145.5" x2="266.5" y2="546.5" stroke="#909090" stroke-width="1"/>
<line x1="308.5" y1="145.5" x2="308.5" y2="546.5" stroke="#909090" stroke-width="1"/>
<line x1="352.5" y1="145.5" x2="352.5" y2="546.5" stroke="#909090" stroke-width="1"/>
<rect x="50.5" y="145.5" width="324" height="401" fill="none" stroke="#a6a6a6"/>
<line x1="50.5" y1="546.5" x2="50.5" y2="552" stroke="#a6a6a6" stroke-width="1"/>
<text x="50.8" y="566.8" font-size="13.5" fill="#d4d4d4" text-anchor="middle">0</text>
<line x1="92.5" y1="546.5" x2="92.5" y2="552" stroke="#a6a6a6" stroke-width="1"/>
<text x="92.8" y="566.8" font-size="13.5" fill="#d4d4d4" text-anchor="middle">2</text>
<line x1="136.5" y1="546.5" x2="136.5" y2="552" stroke="#a6a6a6" stroke-width="1"/>
<text x="136.8" y="566.8" font-size="13.5" fill="#d4d4d4" text-anchor="middle">4</text>
<line x1="179.5" y1="546.5" x2="179.5" y2="552" stroke="#a6a6a6" stroke-width="1"/>
<text x="179.8" y="566.8" font-size="13.5" fill="#d4d4d4" text-anchor="middle">6</text>
<line x1="223.5" y1="546.5" x2="223.5" y2="552" stroke="#a6a6a6" stroke-width="1"/>
<text x="223.8" y="566.8" font-size="13.5" fill="#d4d4d4" text-anchor="middle">8</text>
<line x1="266.5" y1="546.5" x2="266.5" y2="552" stroke="#a6a6a6" stroke-width="1"/>
<text x="266.8" y="566.8" font-size="13.5" fill="#d4d4d4" text-anchor="middle">10</text>
<line x1="308.5" y1="546.5" x2="308.5" y2="552" stroke="#a6a6a6" stroke-width="1"/>
<text x="308.8" y="566.8" font-size="13.5" fill="#d4d4d4" text-anchor="middle">12</text>
<line x1="352.5" y1="546.5" x2="352.5" y2="552" stroke="#a6a6a6" stroke-width="1"/>
<text x="352.8" y="566.8" font-size="13.5" fill="#d4d4d4" text-anchor="middle">14</text>
<text x="212.5" y="140.8" font-size="14" fill="#d4d4d4" textLength="76.3" lengthAdjust="spacingAndGlyphs" text-anchor="middle">DeltaE 2000</text>
<rect x="51" y="151.5" width="20.018" height="38" fill="url(#be0)"/>
<path d="M51 151.5 h20.018 v38 h-20.018" fill="none" stroke="#000" stroke-width="1.2"/>
<rect x="51" y="201.5" width="3.95803" height="38" fill="url(#be1)"/>
<path d="M51 201.5 h3.95803 v38 h-3.95803" fill="none" stroke="#000" stroke-width="1.2"/>
<rect x="51" y="251.5" width="6.18798" height="38" fill="url(#be2)"/>
<path d="M51 251.5 h6.18798 v38 h-6.18798" fill="none" stroke="#000" stroke-width="1.2"/>
<rect x="51" y="301.5" width="9.85332" height="38" fill="url(#be3)"/>
<path d="M51 301.5 h9.85332 v38 h-9.85332" fill="none" stroke="#000" stroke-width="1.2"/>
<rect x="51" y="351.5" width="2.94914" height="38" fill="url(#be4)"/>
<path d="M51 351.5 h2.94914 v38 h-2.94914" fill="none" stroke="#000" stroke-width="1.2"/>
<rect x="51" y="401.5" width="5.58178" height="38" fill="url(#be5)"/>
<path d="M51 401.5 h5.58178 v38 h-5.58178" fill="none" stroke="#000" stroke-width="1.2"/>
<rect x="51" y="451.5" width="11.0311" height="38" fill="url(#be6)"/>
<path d="M51 451.5 h11.0311 v38 h-11.0311" fill="none" stroke="#000" stroke-width="1.2"/>
<rect x="51" y="501.5" width="24.3632" height="38" fill="url(#be7)"/>
<path d="M51 501.5 h24.3632 v38 h-24.3632" fill="none" stroke="#000" stroke-width="1.2"/>
<rect x="425.5" y="79.5" width="140" height="308" fill="#242424"/>
<line x1="420" y1="81.5" x2="565.5" y2="81.5" stroke="#a6a6a6" stroke-width="1"/>
<text x="419.7" y="86.7" font-size="13.5" fill="#d4d4d4" text-anchor="end">15</text>
<line x1="420" y1="132.5" x2="565.5" y2="132.5" stroke="#909090" stroke-width="1"/>
<text x="419.7" y="137.7" font-size="13.5" fill="#d4d4d4" text-anchor="end">10</text>
<line x1="420" y1="183.5" x2="565.5" y2="183.5" stroke="#909090" stroke-width="1"/>
<text x="419.7" y="188.7" font-size="13.5" fill="#d4d4d4" text-anchor="end">5</text>
<line x1="420" y1="234.5" x2="565.5" y2="234.5" stroke="#909090" stroke-width="1"/>
<text x="419.7" y="239.7" font-size="13.5" fill="#d4d4d4" text-anchor="end">0</text>
<line x1="420" y1="285.5" x2="565.5" y2="285.5" stroke="#909090" stroke-width="1"/>
<text x="419.7" y="290.7" font-size="13.5" fill="#d4d4d4" text-anchor="end">-5</text>
<line x1="420" y1="336.5" x2="565.5" y2="336.5" stroke="#909090" stroke-width="1"/>
<text x="419.7" y="341.7" font-size="13.5" fill="#d4d4d4" text-anchor="end">-10</text>
<line x1="420" y1="387.5" x2="425.5" y2="387.5" stroke="#a6a6a6" stroke-width="1"/>
<text x="419.7" y="392.7" font-size="13.5" fill="#d4d4d4" text-anchor="end">-15</text>
<rect x="425.5" y="79.5" width="140" height="308" fill="none" stroke="#a6a6a6"/>
<line x1="425.5" y1="387.5" x2="425.5" y2="392.5" stroke="#a6a6a6" stroke-width="1"/>
<line x1="565.5" y1="387.5" x2="565.5" y2="392.5" stroke="#a6a6a6" stroke-width="1"/>
<text x="483" y="75" font-size="14" fill="#d4d4d4" textLength="38.6" lengthAdjust="spacingAndGlyphs" text-anchor="middle">DeltaL</text>
<text x="495.5" y="402" font-size="14" fill="#d4d4d4" textLength="34.9" lengthAdjust="spacingAndGlyphs" text-anchor="middle">100W</text>
<line x1="439.5" y1="234.5" x2="551.5" y2="234.5" stroke="#1a1a1a" stroke-width="1"/>
<rect x="616.5" y="79.5" width="140" height="308" fill="#242424"/>
<line x1="611" y1="81.5" x2="756.5" y2="81.5" stroke="#a6a6a6" stroke-width="1"/>
<text x="610.7" y="86.7" font-size="13.5" fill="#d4d4d4" text-anchor="end">15</text>
<line x1="611" y1="132.5" x2="756.5" y2="132.5" stroke="#909090" stroke-width="1"/>
<text x="610.7" y="137.7" font-size="13.5" fill="#d4d4d4" text-anchor="end">10</text>
<line x1="611" y1="183.5" x2="756.5" y2="183.5" stroke="#909090" stroke-width="1"/>
<text x="610.7" y="188.7" font-size="13.5" fill="#d4d4d4" text-anchor="end">5</text>
<line x1="611" y1="234.5" x2="756.5" y2="234.5" stroke="#909090" stroke-width="1"/>
<text x="610.7" y="239.7" font-size="13.5" fill="#d4d4d4" text-anchor="end">0</text>
<line x1="611" y1="285.5" x2="756.5" y2="285.5" stroke="#909090" stroke-width="1"/>
<text x="610.7" y="290.7" font-size="13.5" fill="#d4d4d4" text-anchor="end">-5</text>
<line x1="611" y1="336.5" x2="756.5" y2="336.5" stroke="#909090" stroke-width="1"/>
<text x="610.7" y="341.7" font-size="13.5" fill="#d4d4d4" text-anchor="end">-10</text>
<line x1="611" y1="387.5" x2="616.5" y2="387.5" stroke="#a6a6a6" stroke-width="1"/>
<text x="610.7" y="392.7" font-size="13.5" fill="#d4d4d4" text-anchor="end">-15</text>
<rect x="616.5" y="79.5" width="140" height="308" fill="none" stroke="#a6a6a6"/>
<line x1="616.5" y1="387.5" x2="616.5" y2="392.5" stroke="#a6a6a6" stroke-width="1"/>
<line x1="756.5" y1="387.5" x2="756.5" y2="392.5" stroke="#a6a6a6" stroke-width="1"/>
<text x="674" y="75" font-size="14" fill="#d4d4d4" textLength="40.9" lengthAdjust="spacingAndGlyphs" text-anchor="middle">DeltaC</text>
<text x="686.5" y="402" font-size="14" fill="#d4d4d4" textLength="34.9" lengthAdjust="spacingAndGlyphs" text-anchor="middle">100W</text>
<rect x="630.5" y="227" width="112" height="7.5" fill="url(#dcb)" stroke="#000"/>
<rect x="807.5" y="79.5" width="140" height="308" fill="#242424"/>
<line x1="802" y1="81.5" x2="947.5" y2="81.5" stroke="#a6a6a6" stroke-width="1"/>
<text x="801.7" y="86.7" font-size="13.5" fill="#d4d4d4" text-anchor="end">15</text>
<line x1="802" y1="132.5" x2="947.5" y2="132.5" stroke="#909090" stroke-width="1"/>
<text x="801.7" y="137.7" font-size="13.5" fill="#d4d4d4" text-anchor="end">10</text>
<line x1="802" y1="183.5" x2="947.5" y2="183.5" stroke="#909090" stroke-width="1"/>
<text x="801.7" y="188.7" font-size="13.5" fill="#d4d4d4" text-anchor="end">5</text>
<line x1="802" y1="234.5" x2="947.5" y2="234.5" stroke="#909090" stroke-width="1"/>
<text x="801.7" y="239.7" font-size="13.5" fill="#d4d4d4" text-anchor="end">0</text>
<line x1="802" y1="285.5" x2="947.5" y2="285.5" stroke="#909090" stroke-width="1"/>
<text x="801.7" y="290.7" font-size="13.5" fill="#d4d4d4" text-anchor="end">-5</text>
<line x1="802" y1="336.5" x2="947.5" y2="336.5" stroke="#909090" stroke-width="1"/>
<text x="801.7" y="341.7" font-size="13.5" fill="#d4d4d4" text-anchor="end">-10</text>
<line x1="802" y1="387.5" x2="807.5" y2="387.5" stroke="#a6a6a6" stroke-width="1"/>
<text x="801.7" y="392.7" font-size="13.5" fill="#d4d4d4" text-anchor="end">-15</text>
<rect x="807.5" y="79.5" width="140" height="308" fill="none" stroke="#a6a6a6"/>
<line x1="807.5" y1="387.5" x2="807.5" y2="392.5" stroke="#a6a6a6" stroke-width="1"/>
<line x1="947.5" y1="387.5" x2="947.5" y2="392.5" stroke="#a6a6a6" stroke-width="1"/>
<text x="865" y="75" font-size="14" fill="#d4d4d4" textLength="40.9" lengthAdjust="spacingAndGlyphs" text-anchor="middle">DeltaH</text>
<text x="877.5" y="402" font-size="14" fill="#d4d4d4" textLength="34.9" lengthAdjust="spacingAndGlyphs" text-anchor="middle">100W</text>
<line x1="821.5" y1="234.5" x2="933.5" y2="234.5" stroke="#1a1a1a" stroke-width="1"/>
<rect x="394" y="419" width="572" height="157" fill="#000000"/>
<rect x="411" y="425" width="60" height="129" fill="#bfbfbf"/>
<rect x="411" y="489" width="60" height="65" fill="#bebebe"/>
<rect x="411.5" y="425.5" width="59" height="128" fill="none" stroke="#ffffff" stroke-width="1.2"/>
<text x="441" y="568" font-size="11.5" fill="#ffffff" textLength="30.0" lengthAdjust="spacingAndGlyphs" text-anchor="middle" stroke="#fff" stroke-width="0.25">White</text>
<rect x="481" y="425" width="60" height="129" fill="#c01000"/>
<rect x="481" y="489" width="60" height="65" fill="#bf0000"/>
<rect x="481.5" y="425.5" width="59" height="128" fill="none" stroke="#ffffff" stroke-width="1.2"/>
<text x="511" y="568" font-size="11.5" fill="#ffffff" textLength="21.5" lengthAdjust="spacingAndGlyphs" text-anchor="middle" stroke="#fff" stroke-width="0.25">Red</text>
<rect x="551" y="425" width="60" height="129" fill="#08c010"/>
<rect x="551.5" y="425.5" width="59" height="128" fill="none" stroke="#ffffff" stroke-width="1.2"/>
<text x="581" y="568" font-size="11.5" fill="#ffffff" textLength="32.6" lengthAdjust="spacingAndGlyphs" text-anchor="middle" stroke="#fff" stroke-width="0.25">Green</text>
<rect x="621" y="425" width="60" height="129" fill="#0808c0"/>
<rect x="621.5" y="425.5" width="59" height="128" fill="none" stroke="#ffffff" stroke-width="1.2"/>
<text x="651" y="568" font-size="11.5" fill="#ffffff" textLength="23.5" lengthAdjust="spacingAndGlyphs" text-anchor="middle" stroke="#fff" stroke-width="0.25">Blue</text>
<rect x="690" y="425" width="60" height="129" fill="#00bfbf"/>
<rect x="690" y="489" width="60" height="65" fill="#18bfbf"/>
<rect x="690.5" y="425.5" width="59" height="128" fill="none" stroke="#ffffff" stroke-width="1.2"/>
<text x="720" y="568" font-size="11.5" fill="#ffffff" textLength="27.4" lengthAdjust="spacingAndGlyphs" text-anchor="middle" stroke="#fff" stroke-width="0.25">Cyan</text>
<rect x="760" y="425" width="60" height="129" fill="#bf08bf"/>
<rect x="760" y="489" width="60" height="65" fill="#bf00bf"/>
<rect x="760.5" y="425.5" width="59" height="128" fill="none" stroke="#ffffff" stroke-width="1.2"/>
<text x="790" y="568" font-size="11.5" fill="#ffffff" textLength="45.6" lengthAdjust="spacingAndGlyphs" text-anchor="middle" stroke="#fff" stroke-width="0.25">Magenta</text>
<rect x="830" y="425" width="60" height="129" fill="#bfbf08"/>
<rect x="830.5" y="425.5" width="59" height="128" fill="none" stroke="#ffffff" stroke-width="1.2"/>
<text x="860" y="568" font-size="11.5" fill="#ffffff" textLength="33.5" lengthAdjust="spacingAndGlyphs" text-anchor="middle" stroke="#fff" stroke-width="0.25">Yellow</text>
<rect x="900" y="425" width="60" height="129" fill="#ffffff"/>
<rect x="900.5" y="425.5" width="59" height="128" fill="none" stroke="#ffffff" stroke-width="1.2"/>
<text x="930" y="568" font-size="11.5" fill="#ffffff" textLength="30.6" lengthAdjust="spacingAndGlyphs" text-anchor="middle" stroke="#fff" stroke-width="0.25">100W</text>
<text transform="translate(407,453.5) rotate(-90)" font-size="11.5" fill="#fff" text-anchor="middle" stroke="#fff" stroke-width="0.3">Actual</text>
<text transform="translate(407,525) rotate(-90)" font-size="11.5" fill="#fff" text-anchor="middle" stroke="#fff" stroke-width="0.3">Target</text>
<rect x="364.5" y="627.5" width="254" height="174" fill="#242424"/>
<line x1="359.5" y1="629.5" x2="618.5" y2="629.5" stroke="#a6a6a6" stroke-width="1"/>
<text x="359" y="633.9" font-size="13.5" fill="#d4d4d4" text-anchor="end">4</text>
<line x1="359.5" y1="671.5" x2="618.5" y2="671.5" stroke="#909090" stroke-width="1"/>
<text x="359" y="675.9" font-size="13.5" fill="#d4d4d4" text-anchor="end">2</text>
<line x1="359.5" y1="714.5" x2="618.5" y2="714.5" stroke="#909090" stroke-width="1"/>
<text x="359" y="718.9" font-size="13.5" fill="#d4d4d4" text-anchor="end">0</text>
<line x1="359.5" y1="758.5" x2="618.5" y2="758.5" stroke="#909090" stroke-width="1"/>
<text x="359" y="762.9" font-size="13.5" fill="#d4d4d4" text-anchor="end">-2</text>
<line x1="359.5" y1="801.5" x2="364.5" y2="801.5" stroke="#a6a6a6" stroke-width="1"/>
<text x="359" y="805.9" font-size="13.5" fill="#d4d4d4" text-anchor="end">-4</text>
<rect x="364.5" y="627.5" width="254" height="174" fill="none" stroke="#a6a6a6"/>
<line x1="364.5" y1="801.5" x2="364.5" y2="807.5" stroke="#a6a6a6" stroke-width="1"/>
<line x1="617.5" y1="801.5" x2="617.5" y2="807.5" stroke="#a6a6a6" stroke-width="1"/>
<text x="482.5" y="622" font-size="14" fill="#d4d4d4" textLength="80.6" lengthAdjust="spacingAndGlyphs" text-anchor="middle">RGB Balance</text>
<text x="491.5" y="817" font-size="14" fill="#d4d4d4" textLength="34.9" lengthAdjust="spacingAndGlyphs" text-anchor="middle">100W</text>
<rect x="389.5" y="714.5" width="67" height="36" fill="url(#rbr)" stroke="#000"/>
<rect x="457.5" y="705.5" width="66" height="9" fill="url(#rbg)" stroke="#000"/>
<rect x="524.5" y="693.5" width="66" height="21" fill="url(#rbb)" stroke="#000"/>
<g transform="translate(647,619)"><rect x="0" y="0" width="329" height="3" fill="url(#x0)"/><rect x="0" y="3" width="329" height="3" fill="url(#x1)"/><rect x="0" y="6" width="329" height="3" fill="url(#x2)"/><rect x="0" y="9" width="329" height="3" fill="url(#x3)"/><rect x="0" y="12" width="329" height="3" fill="url(#x4)"/><rect x="0" y="15" width="329" height="3" fill="url(#x5)"/><rect x="0" y="18" width="329" height="3" fill="url(#x6)"/><rect x="0" y="21" width="329" height="3" fill="url(#x7)"/><rect x="0" y="24" width="329" height="3" fill="url(#x8)"/><rect x="0" y="27" width="329" height="3" fill="url(#x9)"/><rect x="0" y="30" width="329" height="3" fill="url(#x10)"/><rect x="0" y="33" width="329" height="3" fill="url(#x11)"/><rect x="0" y="36" width="329" height="3" fill="url(#x12)"/><rect x="0" y="39" width="329" height="3" fill="url(#x13)"/><rect x="0" y="42" width="329" height="3" fill="url(#x14)"/><rect x="0" y="45" width="329" height="3" fill="url(#x15)"/><rect x="0" y="48" width="329" height="3" fill="url(#x16)"/><rect x="0" y="51" width="329" height="3" fill="url(#x17)"/><rect x="0" y="54" width="329" height="3" fill="url(#x18)"/><rect x="0" y="57" width="329" height="3" fill="url(#x19)"/><rect x="0" y="60" width="329" height="3" fill="url(#x20)"/><rect x="0" y="63" width="329" height="3" fill="url(#x21)"/><rect x="0" y="66" width="329" height="3" fill="url(#x22)"/><rect x="0" y="69" width="329" height="3" fill="url(#x23)"/><rect x="0" y="72" width="329" height="3" fill="url(#x24)"/><rect x="0" y="75" width="329" height="3" fill="url(#x25)"/><rect x="0" y="78" width="329" height="3" fill="url(#x26)"/><rect x="0" y="81" width="329" height="3" fill="url(#x27)"/><rect x="0" y="84" width="329" height="3" fill="url(#x28)"/><rect x="0" y="87" width="329" height="3" fill="url(#x29)"/><rect x="0" y="90" width="329" height="3" fill="url(#x30)"/><rect x="0" y="93" width="329" height="3" fill="url(#x31)"/><rect x="0" y="96" width="329" height="3" fill="url(#x32)"/><rect x="0" y="99" width="329" height="3" fill="url(#x33)"/><rect x="0" y="102" width="329" height="3" fill="url(#x34)"/><rect x="0" y="105" width="329" height="3" fill="url(#x35)"/><rect x="0" y="108" width="329" height="3" fill="url(#x36)"/><rect x="0" y="111" width="329" height="3" fill="url(#x37)"/><rect x="0" y="114" width="329" height="3" fill="url(#x38)"/><rect x="0" y="117" width="329" height="3" fill="url(#x39)"/><rect x="0" y="120" width="329" height="3" fill="url(#x40)"/><rect x="0" y="123" width="329" height="3" fill="url(#x41)"/><rect x="0" y="126" width="329" height="3" fill="url(#x42)"/><rect x="0" y="129" width="329" height="3" fill="url(#x43)"/><rect x="0" y="132" width="329" height="3" fill="url(#x44)"/><rect x="0" y="135" width="329" height="3" fill="url(#x45)"/><rect x="0" y="138" width="329" height="3" fill="url(#x46)"/><rect x="0" y="141" width="329" height="3" fill="url(#x47)"/><rect x="0" y="144" width="329" height="3" fill="url(#x48)"/><rect x="0" y="147" width="329" height="3" fill="url(#x49)"/><rect x="0" y="150" width="329" height="3" fill="url(#x50)"/><rect x="0" y="153" width="329" height="3" fill="url(#x51)"/><rect x="0" y="156" width="329" height="3" fill="url(#x52)"/><rect x="0" y="159" width="329" height="3" fill="url(#x53)"/><rect x="0" y="162" width="329" height="3" fill="url(#x54)"/><rect x="0" y="165" width="329" height="3" fill="url(#x55)"/><rect x="0" y="168" width="329" height="3" fill="url(#x56)"/><rect x="0" y="171" width="329" height="3" fill="url(#x57)"/><rect x="0" y="174" width="329" height="3" fill="url(#x58)"/><rect x="0" y="177" width="329" height="3" fill="url(#x59)"/><rect x="0" y="180" width="329" height="3" fill="url(#x60)"/><rect x="0" y="183" width="329" height="3" fill="url(#x61)"/><rect x="0" y="186" width="329" height="3" fill="url(#x62)"/><rect x="0" y="189" width="329" height="2" fill="url(#x63)"/></g>
<rect x="646.5" y="618.5" width="330" height="192" fill="none" stroke="#9a9a9a"/>
<text x="811.8" y="613.8" font-size="14" fill="#d4d4d4" textLength="72.7" lengthAdjust="spacingAndGlyphs" text-anchor="middle">CIE 1931 xy</text>
<circle cx="801.5" cy="714.5" r="4.3" fill="#fff" stroke="#000" stroke-width="1.2"/>
<rect x="804.5" y="706.5" width="14" height="14" fill="#fff" stroke="#000" stroke-width="1.6"/>
<rect x="973" y="50" width="671" height="539.5" fill="#1c1c1c"/>
<rect x="979.5" y="56" width="658.5" height="527" fill="#333333"/>
<rect x="1015.5" y="78.5" width="619" height="477" fill="#242424"/>
<g transform="translate(1015,78)" clip-path="url(#plotclip)"><g clip-path="url(#locclip)"><rect x="41" y="10" width="29" height="2" fill="url(#u0)"/><rect x="23" y="12" width="79" height="2" fill="url(#u1)"/><rect x="17" y="14" width="107" height="2" fill="url(#u2)"/><rect x="13" y="16" width="131" height="2" fill="url(#u3)"/><rect x="10" y="18" width="152" height="2" fill="url(#u4)"/><rect x="8" y="20" width="172" height="2" fill="url(#u5)"/><rect x="6" y="22" width="192" height="2" fill="url(#u6)"/><rect x="5" y="24" width="210" height="2" fill="url(#u7)"/><rect x="4" y="26" width="229" height="2" fill="url(#u8)"/><rect x="3" y="28" width="247" height="2" fill="url(#u9)"/><rect x="2" y="30" width="266" height="2" fill="url(#u10)"/><rect x="1" y="32" width="284" height="2" fill="url(#u11)"/><rect x="1" y="34" width="301" height="2" fill="url(#u12)"/><rect x="0" y="36" width="320" height="2" fill="url(#u13)"/><rect x="0" y="38" width="337" height="2" fill="url(#u14)"/><rect x="0" y="40" width="355" height="2" fill="url(#u15)"/><rect x="0" y="42" width="372" height="2" fill="url(#u16)"/><rect x="0" y="44" width="389" height="2" fill="url(#u17)"/><rect x="0" y="46" width="407" height="2" fill="url(#u18)"/><rect x="0" y="48" width="424" height="2" fill="url(#u19)"/><rect x="0" y="50" width="442" height="2" fill="url(#u20)"/><rect x="0" y="52" width="459" height="2" fill="url(#u21)"/><rect x="0" y="54" width="477" height="2" fill="url(#u22)"/><rect x="0" y="56" width="494" height="2" fill="url(#u23)"/><rect x="0" y="58" width="511" height="2" fill="url(#u24)"/><rect x="0" y="60" width="529" height="2" fill="url(#u25)"/><rect x="0" y="62" width="546" height="2" fill="url(#u26)"/><rect x="1" y="64" width="563" height="2" fill="url(#u27)"/><rect x="1" y="66" width="580" height="2" fill="url(#u28)"/><rect x="1" y="68" width="598" height="2" fill="url(#u29)"/><rect x="2" y="70" width="614" height="2" fill="url(#u30)"/><rect x="2" y="72" width="618" height="2" fill="url(#u31)"/><rect x="2" y="74" width="618" height="2" fill="url(#u32)"/><rect x="3" y="76" width="617" height="2" fill="url(#u33)"/><rect x="3" y="78" width="617" height="2" fill="url(#u34)"/><rect x="4" y="80" width="616" height="2" fill="url(#u35)"/><rect x="4" y="82" width="616" height="2" fill="url(#u36)"/><rect x="5" y="84" width="615" height="2" fill="url(#u37)"/><rect x="5" y="86" width="615" height="2" fill="url(#u38)"/><rect x="6" y="88" width="614" height="2" fill="url(#u39)"/><rect x="6" y="90" width="614" height="2" fill="url(#u40)"/><rect x="7" y="92" width="613" height="2" fill="url(#u41)"/><rect x="7" y="94" width="613" height="2" fill="url(#u42)"/><rect x="8" y="96" width="612" height="2" fill="url(#u43)"/><rect x="8" y="98" width="612" height="2" fill="url(#u44)"/><rect x="9" y="100" width="611" height="2" fill="url(#u45)"/><rect x="9" y="102" width="611" height="2" fill="url(#u46)"/><rect x="10" y="104" width="608" height="2" fill="url(#u47)"/><rect x="11" y="106" width="605" height="2" fill="url(#u48)"/><rect x="11" y="108" width="603" height="2" fill="url(#u49)"/><rect x="12" y="110" width="601" height="2" fill="url(#u50)"/><rect x="13" y="112" width="598" height="2" fill="url(#u51)"/><rect x="13" y="114" width="596" height="2" fill="url(#u52)"/><rect x="14" y="116" width="593" height="2" fill="url(#u53)"/><rect x="15" y="118" width="590" height="2" fill="url(#u54)"/><rect x="15" y="120" width="588" height="2" fill="url(#u55)"/><rect x="16" y="122" width="585" height="2" fill="url(#u56)"/><rect x="17" y="124" width="582" height="2" fill="url(#u57)"/><rect x="18" y="126" width="579" height="2" fill="url(#u58)"/><rect x="18" y="128" width="577" height="2" fill="url(#u59)"/><rect x="19" y="130" width="574" height="2" fill="url(#u60)"/><rect x="20" y="132" width="571" height="2" fill="url(#u61)"/><rect x="20" y="134" width="569" height="2" fill="url(#u62)"/><rect x="21" y="136" width="566" height="2" fill="url(#u63)"/><rect x="22" y="138" width="563" height="2" fill="url(#u64)"/><rect x="23" y="140" width="560" height="2" fill="url(#u65)"/><rect x="24" y="142" width="557" height="2" fill="url(#u66)"/><rect x="24" y="144" width="555" height="2" fill="url(#u67)"/><rect x="25" y="146" width="553" height="2" fill="url(#u68)"/><rect x="26" y="148" width="550" height="2" fill="url(#u69)"/><rect x="27" y="150" width="547" height="2" fill="url(#u70)"/><rect x="28" y="152" width="544" height="2" fill="url(#u71)"/><rect x="28" y="154" width="542" height="2" fill="url(#u72)"/><rect x="29" y="156" width="539" height="2" fill="url(#u73)"/><rect x="30" y="158" width="536" height="2" fill="url(#u74)"/><rect x="31" y="160" width="533" height="2" fill="url(#u75)"/><rect x="32" y="162" width="530" height="2" fill="url(#u76)"/><rect x="33" y="164" width="527" height="2" fill="url(#u77)"/><rect x="33" y="166" width="525" height="2" fill="url(#u78)"/><rect x="34" y="168" width="522" height="2" fill="url(#u79)"/><rect x="35" y="170" width="519" height="2" fill="url(#u80)"/><rect x="36" y="172" width="516" height="2" fill="url(#u81)"/><rect x="37" y="174" width="513" height="2" fill="url(#u82)"/><rect x="38" y="176" width="510" height="2" fill="url(#u83)"/><rect x="39" y="178" width="507" height="2" fill="url(#u84)"/><rect x="40" y="180" width="504" height="2" fill="url(#u85)"/><rect x="41" y="182" width="502" height="2" fill="url(#u86)"/><rect x="41" y="184" width="500" height="2" fill="url(#u87)"/><rect x="42" y="186" width="497" height="2" fill="url(#u88)"/><rect x="43" y="188" width="494" height="2" fill="url(#u89)"/><rect x="44" y="190" width="491" height="2" fill="url(#u90)"/><rect x="45" y="192" width="488" height="2" fill="url(#u91)"/><rect x="46" y="194" width="485" height="2" fill="url(#u92)"/><rect x="47" y="196" width="482" height="2" fill="url(#u93)"/><rect x="48" y="198" width="479" height="2" fill="url(#u94)"/><rect x="49" y="200" width="476" height="2" fill="url(#u95)"/><rect x="50" y="202" width="473" height="2" fill="url(#u96)"/><rect x="51" y="204" width="470" height="2" fill="url(#u97)"/><rect x="52" y="206" width="467" height="2" fill="url(#u98)"/><rect x="53" y="208" width="464" height="2" fill="url(#u99)"/><rect x="54" y="210" width="461" height="2" fill="url(#u100)"/><rect x="55" y="212" width="458" height="2" fill="url(#u101)"/><rect x="56" y="214" width="455" height="2" fill="url(#u102)"/><rect x="57" y="216" width="452" height="2" fill="url(#u103)"/><rect x="58" y="218" width="449" height="2" fill="url(#u104)"/><rect x="59" y="220" width="447" height="2" fill="url(#u105)"/><rect x="60" y="222" width="444" height="2" fill="url(#u106)"/><rect x="62" y="224" width="440" height="2" fill="url(#u107)"/><rect x="63" y="226" width="437" height="2" fill="url(#u108)"/><rect x="64" y="228" width="434" height="2" fill="url(#u109)"/><rect x="65" y="230" width="431" height="2" fill="url(#u110)"/><rect x="66" y="232" width="428" height="2" fill="url(#u111)"/><rect x="67" y="234" width="425" height="2" fill="url(#u112)"/><rect x="68" y="236" width="422" height="2" fill="url(#u113)"/><rect x="69" y="238" width="419" height="2" fill="url(#u114)"/><rect x="70" y="240" width="416" height="2" fill="url(#u115)"/><rect x="72" y="242" width="412" height="2" fill="url(#u116)"/><rect x="73" y="244" width="409" height="2" fill="url(#u117)"/><rect x="74" y="246" width="406" height="2" fill="url(#u118)"/><rect x="75" y="248" width="403" height="2" fill="url(#u119)"/><rect x="76" y="250" width="400" height="2" fill="url(#u120)"/><rect x="77" y="252" width="397" height="2" fill="url(#u121)"/><rect x="78" y="254" width="394" height="2" fill="url(#u122)"/><rect x="80" y="256" width="391" height="2" fill="url(#u123)"/><rect x="81" y="258" width="388" height="2" fill="url(#u124)"/><rect x="82" y="260" width="385" height="2" fill="url(#u125)"/><rect x="83" y="262" width="382" height="2" fill="url(#u126)"/><rect x="84" y="264" width="379" height="2" fill="url(#u127)"/><rect x="86" y="266" width="375" height="2" fill="url(#u128)"/><rect x="87" y="268" width="372" height="2" fill="url(#u129)"/><rect x="88" y="270" width="369" height="2" fill="url(#u130)"/><rect x="89" y="272" width="366" height="2" fill="url(#u131)"/><rect x="90" y="274" width="363" height="2" fill="url(#u132)"/><rect x="92" y="276" width="359" height="2" fill="url(#u133)"/><rect x="93" y="278" width="356" height="2" fill="url(#u134)"/><rect x="94" y="280" width="353" height="2" fill="url(#u135)"/><rect x="95" y="282" width="350" height="2" fill="url(#u136)"/><rect x="96" y="284" width="347" height="2" fill="url(#u137)"/><rect x="98" y="286" width="343" height="2" fill="url(#u138)"/><rect x="99" y="288" width="340" height="2" fill="url(#u139)"/><rect x="100" y="290" width="337" height="2" fill="url(#u140)"/><rect x="101" y="292" width="335" height="2" fill="url(#u141)"/><rect x="103" y="294" width="331" height="2" fill="url(#u142)"/><rect x="104" y="296" width="328" height="2" fill="url(#u143)"/><rect x="105" y="298" width="325" height="2" fill="url(#u144)"/><rect x="106" y="300" width="322" height="2" fill="url(#u145)"/><rect x="108" y="302" width="318" height="2" fill="url(#u146)"/><rect x="109" y="304" width="315" height="2" fill="url(#u147)"/><rect x="110" y="306" width="312" height="2" fill="url(#u148)"/><rect x="112" y="308" width="308" height="2" fill="url(#u149)"/><rect x="113" y="310" width="305" height="2" fill="url(#u150)"/><rect x="114" y="312" width="302" height="2" fill="url(#u151)"/><rect x="116" y="314" width="298" height="2" fill="url(#u152)"/><rect x="117" y="316" width="295" height="2" fill="url(#u153)"/><rect x="118" y="318" width="292" height="2" fill="url(#u154)"/><rect x="120" y="320" width="288" height="2" fill="url(#u155)"/><rect x="121" y="322" width="285" height="2" fill="url(#u156)"/><rect x="122" y="324" width="282" height="2" fill="url(#u157)"/><rect x="124" y="326" width="278" height="2" fill="url(#u158)"/><rect x="125" y="328" width="275" height="2" fill="url(#u159)"/><rect x="127" y="330" width="272" height="2" fill="url(#u160)"/><rect x="128" y="332" width="269" height="2" fill="url(#u161)"/><rect x="129" y="334" width="266" height="2" fill="url(#u162)"/><rect x="131" y="336" width="262" height="2" fill="url(#u163)"/><rect x="132" y="338" width="259" height="2" fill="url(#u164)"/><rect x="134" y="340" width="255" height="2" fill="url(#u165)"/><rect x="135" y="342" width="252" height="2" fill="url(#u166)"/><rect x="137" y="344" width="248" height="2" fill="url(#u167)"/><rect x="138" y="346" width="245" height="2" fill="url(#u168)"/><rect x="139" y="348" width="242" height="2" fill="url(#u169)"/><rect x="141" y="350" width="238" height="2" fill="url(#u170)"/><rect x="142" y="352" width="235" height="2" fill="url(#u171)"/><rect x="144" y="354" width="231" height="2" fill="url(#u172)"/><rect x="146" y="356" width="227" height="2" fill="url(#u173)"/><rect x="147" y="358" width="224" height="2" fill="url(#u174)"/><rect x="149" y="360" width="220" height="2" fill="url(#u175)"/><rect x="150" y="362" width="217" height="2" fill="url(#u176)"/><rect x="152" y="364" width="213" height="2" fill="url(#u177)"/><rect x="153" y="366" width="211" height="2" fill="url(#u178)"/><rect x="155" y="368" width="207" height="2" fill="url(#u179)"/><rect x="157" y="370" width="203" height="2" fill="url(#u180)"/><rect x="158" y="372" width="200" height="2" fill="url(#u181)"/><rect x="160" y="374" width="196" height="2" fill="url(#u182)"/><rect x="162" y="376" width="192" height="2" fill="url(#u183)"/><rect x="163" y="378" width="189" height="2" fill="url(#u184)"/><rect x="165" y="380" width="185" height="2" fill="url(#u185)"/><rect x="167" y="382" width="181" height="2" fill="url(#u186)"/><rect x="168" y="384" width="178" height="2" fill="url(#u187)"/><rect x="170" y="386" width="174" height="2" fill="url(#u188)"/><rect x="172" y="388" width="170" height="2" fill="url(#u189)"/><rect x="174" y="390" width="166" height="2" fill="url(#u190)"/><rect x="176" y="392" width="162" height="2" fill="url(#u191)"/><rect x="177" y="394" width="159" height="2" fill="url(#u192)"/><rect x="179" y="396" width="155" height="2" fill="url(#u193)"/><rect x="181" y="398" width="151" height="2" fill="url(#u194)"/><rect x="183" y="400" width="147" height="2" fill="url(#u195)"/><rect x="185" y="402" width="144" height="2" fill="url(#u196)"/><rect x="187" y="404" width="140" height="2" fill="url(#u197)"/><rect x="189" y="406" width="136" height="2" fill="url(#u198)"/><rect x="191" y="408" width="132" height="2" fill="url(#u199)"/><rect x="194" y="410" width="127" height="2" fill="url(#u200)"/><rect x="196" y="412" width="123" height="2" fill="url(#u201)"/><rect x="198" y="414" width="119" height="2" fill="url(#u202)"/><rect x="200" y="416" width="115" height="2" fill="url(#u203)"/><rect x="202" y="418" width="111" height="2" fill="url(#u204)"/><rect x="205" y="420" width="106" height="2" fill="url(#u205)"/><rect x="207" y="422" width="102" height="2" fill="url(#u206)"/><rect x="209" y="424" width="98" height="2" fill="url(#u207)"/><rect x="212" y="426" width="93" height="2" fill="url(#u208)"/><rect x="214" y="428" width="89" height="2" fill="url(#u209)"/><rect x="216" y="430" width="85" height="2" fill="url(#u210)"/><rect x="219" y="432" width="80" height="2" fill="url(#u211)"/><rect x="221" y="434" width="76" height="2" fill="url(#u212)"/><rect x="224" y="436" width="71" height="2" fill="url(#u213)"/><rect x="226" y="438" width="68" height="2" fill="url(#u214)"/><rect x="229" y="440" width="63" height="2" fill="url(#u215)"/><rect x="231" y="442" width="59" height="2" fill="url(#u216)"/><rect x="233" y="444" width="55" height="2" fill="url(#u217)"/><rect x="236" y="446" width="50" height="2" fill="url(#u218)"/><rect x="238" y="448" width="46" height="2" fill="url(#u219)"/><rect x="241" y="450" width="41" height="2" fill="url(#u220)"/><rect x="243" y="452" width="37" height="2" fill="url(#u221)"/><rect x="245" y="454" width="33" height="2" fill="url(#u222)"/><rect x="248" y="456" width="28" height="2" fill="url(#u223)"/><rect x="250" y="458" width="24" height="2" fill="url(#u224)"/><rect x="253" y="460" width="19" height="2" fill="url(#u225)"/><rect x="255" y="462" width="15" height="2" fill="url(#u226)"/><rect x="258" y="464" width="10" height="2" fill="url(#u227)"/>
<path d="M258.6 462.6 L257.4 461.7 L256.0 460.6 L254.4 459.4 L252.5 457.9 L250.4 456.2 L248.0 454.2 L245.5 452.0 L242.7 449.6 L239.6 447.0 L236.2 444.2 L232.4 441.0 L228.1 437.5 L223.5 433.7 L218.5 429.6 L213.1 425.1 L207.2 420.1 L200.9 414.4 L194.1 408.2 L186.9 401.2 L179.1 393.2 L170.3 383.4 L160.2 371.4 L149.2 357.5 L137.5 341.9 L125.2 324.5 L112.3 305.3 L99.2 284.4 L85.9 262.4 L72.8 239.9 L60.2 216.9 L48.7 194.0 L38.5 171.9 L29.5 150.7 L21.8 130.9 L15.4 112.9 L10.4 96.8 L6.7 82.6 L4.1 70.3 L2.5 59.6 L1.9 50.5 L2.2 42.6 L3.3 35.8 L5.3 30.0 L8.0 25.1 L11.3 21.2 L15.2 18.2 L19.6 15.9 L24.3 14.3 L29.5 13.2 L34.8 12.5 L40.5 12.1 L46.3 11.9 L52.2 11.8 L58.0 11.8 L63.9 11.9 L69.9 12.1 L76.0 12.4 L82.2 12.7 L88.7 13.1 L95.4 13.6 L102.2 14.2 L109.4 14.8 L116.8 15.5 L124.5 16.3 L132.5 17.1 L140.8 18.0 L149.4 18.9 L158.5 19.9 L167.9 20.9 L177.6 22.0 L187.8 23.2 L198.5 24.4 L209.5 25.6 L221.0 26.9 L232.9 28.3 L245.2 29.7 L258.0 31.2 L271.1 32.7 L284.7 34.2 L298.7 35.9 L313.0 37.5 L327.6 39.2 L342.5 40.9 L357.6 42.6 L372.7 44.4 L387.7 46.1 L402.3 47.8 L416.8 49.4 L431.2 51.1 L445.4 52.7 L459.1 54.3 L472.1 55.8 L484.5 57.2 L496.3 58.5 L507.6 59.8 L518.1 61.1 L528.0 62.2 L537.2 63.2 L545.8 64.2 L553.7 65.1 L561.2 66.0 L568.1 66.8 L574.6 67.5 L580.8 68.3 L586.7 68.9 L592.1 69.6 L597.2 70.1 L602.0 70.7 L606.4 71.2 L610.4 71.7 L614.0 72.1 L617.2 72.4 L620.0 72.8 L622.6 73.1 L625.0 73.3 L627.1 73.6 L629.0 73.8 L630.6 74.0 L632.0 74.1 L633.2 74.3 L634.2 74.4 L635.2 74.5 L636.2 74.6 L637.0 74.7 L637.8 74.8 L638.5 74.9 L639.3 75.0 L640.1 75.1 L640.8 75.2 L641.5 75.2 L642.1 75.3 L642.5 75.4 L642.8 75.4 L643.0 75.4 L643.2 75.4 L643.4 75.5 L643.6 75.5 L643.6 75.5 L270.4 459.2 Q265.5 464.2 258.6 462.6 Z M465.5 62.5 L129.5 31.1 L181.5 352.0 Z" fill="#000" fill-opacity="0.4" fill-rule="evenodd"/>
</g></g>
<rect x="1015.5" y="78.5" width="619" height="477" fill="none" stroke="#a6a6a6"/>
<line x1="1015.5" y1="555.5" x2="1015.5" y2="560.5" stroke="#a6a6a6" stroke-width="1"/>
<text x="1015.5" y="576" font-size="13.5" fill="#d4d4d4" textLength="7.8" lengthAdjust="spacingAndGlyphs" text-anchor="middle">0</text>
<line x1="1010" y1="555.5" x2="1015.5" y2="555.5" stroke="#a6a6a6" stroke-width="1"/>
<text x="1009.5" y="560.5" font-size="13.5" fill="#d4d4d4" textLength="7.8" lengthAdjust="spacingAndGlyphs" text-anchor="end">0</text>
<line x1="1067.5" y1="555.5" x2="1067.5" y2="560.5" stroke="#a6a6a6" stroke-width="1"/>
<text x="1067.5" y="576" font-size="13.5" fill="#d4d4d4" textLength="27.3" lengthAdjust="spacingAndGlyphs" text-anchor="middle">0,05</text>
<line x1="1010" y1="516.5" x2="1015.5" y2="516.5" stroke="#a6a6a6" stroke-width="1"/>
<text x="1009.5" y="521.5" font-size="13.5" fill="#d4d4d4" textLength="27.3" lengthAdjust="spacingAndGlyphs" text-anchor="end">0,05</text>
<line x1="1118.5" y1="555.5" x2="1118.5" y2="560.5" stroke="#a6a6a6" stroke-width="1"/>
<text x="1118.5" y="576" font-size="13.5" fill="#d4d4d4" textLength="19.5" lengthAdjust="spacingAndGlyphs" text-anchor="middle">0,1</text>
<line x1="1010" y1="476.5" x2="1015.5" y2="476.5" stroke="#a6a6a6" stroke-width="1"/>
<text x="1009.5" y="481.5" font-size="13.5" fill="#d4d4d4" textLength="19.5" lengthAdjust="spacingAndGlyphs" text-anchor="end">0,1</text>
<line x1="1170.5" y1="555.5" x2="1170.5" y2="560.5" stroke="#a6a6a6" stroke-width="1"/>
<text x="1170.5" y="576" font-size="13.5" fill="#d4d4d4" textLength="27.3" lengthAdjust="spacingAndGlyphs" text-anchor="middle">0,15</text>
<line x1="1010" y1="436.5" x2="1015.5" y2="436.5" stroke="#a6a6a6" stroke-width="1"/>
<text x="1009.5" y="441.5" font-size="13.5" fill="#d4d4d4" textLength="27.3" lengthAdjust="spacingAndGlyphs" text-anchor="end">0,15</text>
<line x1="1221.5" y1="555.5" x2="1221.5" y2="560.5" stroke="#a6a6a6" stroke-width="1"/>
<text x="1221.5" y="576" font-size="13.5" fill="#d4d4d4" textLength="19.5" lengthAdjust="spacingAndGlyphs" text-anchor="middle">0,2</text>
<line x1="1010" y1="397.5" x2="1015.5" y2="397.5" stroke="#a6a6a6" stroke-width="1"/>
<text x="1009.5" y="402.5" font-size="13.5" fill="#d4d4d4" textLength="19.5" lengthAdjust="spacingAndGlyphs" text-anchor="end">0,2</text>
<line x1="1273.5" y1="555.5" x2="1273.5" y2="560.5" stroke="#a6a6a6" stroke-width="1"/>
<text x="1273.5" y="576" font-size="13.5" fill="#d4d4d4" textLength="27.3" lengthAdjust="spacingAndGlyphs" text-anchor="middle">0,25</text>
<line x1="1010" y1="357.5" x2="1015.5" y2="357.5" stroke="#a6a6a6" stroke-width="1"/>
<text x="1009.5" y="362.5" font-size="13.5" fill="#d4d4d4" textLength="27.3" lengthAdjust="spacingAndGlyphs" text-anchor="end">0,25</text>
<line x1="1324.5" y1="555.5" x2="1324.5" y2="560.5" stroke="#a6a6a6" stroke-width="1"/>
<text x="1324.5" y="576" font-size="13.5" fill="#d4d4d4" textLength="19.5" lengthAdjust="spacingAndGlyphs" text-anchor="middle">0,3</text>
<line x1="1010" y1="317.5" x2="1015.5" y2="317.5" stroke="#a6a6a6" stroke-width="1"/>
<text x="1009.5" y="322.5" font-size="13.5" fill="#d4d4d4" textLength="19.5" lengthAdjust="spacingAndGlyphs" text-anchor="end">0,3</text>
<line x1="1376.5" y1="555.5" x2="1376.5" y2="560.5" stroke="#a6a6a6" stroke-width="1"/>
<text x="1376.5" y="576" font-size="13.5" fill="#d4d4d4" textLength="27.3" lengthAdjust="spacingAndGlyphs" text-anchor="middle">0,35</text>
<line x1="1010" y1="278.5" x2="1015.5" y2="278.5" stroke="#a6a6a6" stroke-width="1"/>
<text x="1009.5" y="283.5" font-size="13.5" fill="#d4d4d4" textLength="27.3" lengthAdjust="spacingAndGlyphs" text-anchor="end">0,35</text>
<line x1="1428.5" y1="555.5" x2="1428.5" y2="560.5" stroke="#a6a6a6" stroke-width="1"/>
<text x="1428.5" y="576" font-size="13.5" fill="#d4d4d4" textLength="19.5" lengthAdjust="spacingAndGlyphs" text-anchor="middle">0,4</text>
<line x1="1010" y1="238.5" x2="1015.5" y2="238.5" stroke="#a6a6a6" stroke-width="1"/>
<text x="1009.5" y="243.5" font-size="13.5" fill="#d4d4d4" textLength="19.5" lengthAdjust="spacingAndGlyphs" text-anchor="end">0,4</text>
<line x1="1479.5" y1="555.5" x2="1479.5" y2="560.5" stroke="#a6a6a6" stroke-width="1"/>
<text x="1479.5" y="576" font-size="13.5" fill="#d4d4d4" textLength="27.3" lengthAdjust="spacingAndGlyphs" text-anchor="middle">0,45</text>
<line x1="1010" y1="198.5" x2="1015.5" y2="198.5" stroke="#a6a6a6" stroke-width="1"/>
<text x="1009.5" y="203.5" font-size="13.5" fill="#d4d4d4" textLength="27.3" lengthAdjust="spacingAndGlyphs" text-anchor="end">0,45</text>
<line x1="1531.5" y1="555.5" x2="1531.5" y2="560.5" stroke="#a6a6a6" stroke-width="1"/>
<text x="1531.5" y="576" font-size="13.5" fill="#d4d4d4" textLength="19.5" lengthAdjust="spacingAndGlyphs" text-anchor="middle">0,5</text>
<line x1="1010" y1="159.5" x2="1015.5" y2="159.5" stroke="#a6a6a6" stroke-width="1"/>
<text x="1009.5" y="164.5" font-size="13.5" fill="#d4d4d4" textLength="19.5" lengthAdjust="spacingAndGlyphs" text-anchor="end">0,5</text>
<line x1="1582.5" y1="555.5" x2="1582.5" y2="560.5" stroke="#a6a6a6" stroke-width="1"/>
<text x="1582.5" y="576" font-size="13.5" fill="#d4d4d4" textLength="27.3" lengthAdjust="spacingAndGlyphs" text-anchor="middle">0,55</text>
<line x1="1010" y1="119.5" x2="1015.5" y2="119.5" stroke="#a6a6a6" stroke-width="1"/>
<text x="1009.5" y="124.5" font-size="13.5" fill="#d4d4d4" textLength="27.3" lengthAdjust="spacingAndGlyphs" text-anchor="end">0,55</text>
<text x="1308.5" y="73.8" font-size="14" fill="#d4d4d4" textLength="80.7" lengthAdjust="spacingAndGlyphs" text-anchor="middle">CIE 1976 u'v'</text>
<rect x="1387" y="524" width="244" height="26" fill="#333333"/>
<text x="1388.5" y="543.7" font-size="20.3" fill="#f6f6f6" textLength="214.5" lengthAdjust="spacingAndGlyphs" style="white-space:pre">Gamut Coverage:  98,3%</text>
<rect x="1473.3" y="132.7" width="13.2" height="13.2" fill="#fff" fill-opacity="0.18" stroke="#e8e8e8" stroke-width="1.4"/>
<circle cx="1472.6" cy="138.2" r="4" fill="#b00000" stroke="#000" stroke-width="1.1"/>
<rect x="1137.3" y="101.3" width="13.2" height="13.2" fill="#fff" fill-opacity="0.18" stroke="#e8e8e8" stroke-width="1.4"/>
<circle cx="1142.9" cy="108.0" r="4" fill="#00a000" stroke="#000" stroke-width="1.1"/>
<rect x="1189.3" y="422.2" width="13.2" height="13.2" fill="#fff" fill-opacity="0.18" stroke="#e8e8e8" stroke-width="1.4"/>
<circle cx="1195.9" cy="427.1" r="4" fill="#0000a0" stroke="#000" stroke-width="1.1"/>
<rect x="1151.0" y="186.2" width="13.2" height="13.2" fill="#fff" fill-opacity="0.18" stroke="#e8e8e8" stroke-width="1.4"/>
<circle cx="1156.1" cy="193.2" r="4" fill="#00a8a8" stroke="#000" stroke-width="1.1"/>
<rect x="1323.0" y="285.9" width="13.2" height="13.2" fill="#fff" fill-opacity="0.18" stroke="#e8e8e8" stroke-width="1.4"/>
<circle cx="1326.8" cy="290.8" r="4" fill="#a000a0" stroke="#000" stroke-width="1.1"/>
<rect x="1218.7" y="108.9" width="13.2" height="13.2" fill="#fff" fill-opacity="0.18" stroke="#e8e8e8" stroke-width="1.4"/>
<circle cx="1224.6" cy="115.2" r="4" fill="#a8a800" stroke="#000" stroke-width="1.1"/>
<rect x="1212.4" y="176.0" width="13.2" height="13.2" fill="#fff" fill-opacity="1" stroke="#000000" stroke-width="1.9"/>
<circle cx="1217.3" cy="182.1" r="4" fill="#ffffff" stroke="#000" stroke-width="1.1"/>
<rect x="994" y="605" width="14" height="37" fill="#000000"/>
<rect x="1008" y="605" width="599" height="37" fill="url(#thg)"/>
<g clip-path="url(#tclip)">
<rect x="1008" y="642" width="599" height="35" fill="#454545"/>
<rect x="994" y="642" width="14" height="35" fill="url(#rhd)"/>
<line x1="994" y1="642.5" x2="1008" y2="642.5" stroke="#3a3a3a" stroke-width="1"/>
<text x="1012.5" y="667.5" font-size="23" fill="#f0f0f0" textLength="57.4" lengthAdjust="spacingAndGlyphs">x: CIE31</text>
<text x="1082.5" y="667.5" font-size="23" fill="#f0f0f0" textLength="47.0" lengthAdjust="spacingAndGlyphs">0,3112</text>
<text x="1159" y="667.5" font-size="23" fill="#f0f0f0" textLength="48.2" lengthAdjust="spacingAndGlyphs">0,6357</text>
<text x="1226.5" y="667.5" font-size="23" fill="#f0f0f0" textLength="48.2" lengthAdjust="spacingAndGlyphs">0,2982</text>
<text x="1303.5" y="667.5" font-size="23" fill="#f0f0f0" textLength="48.2" lengthAdjust="spacingAndGlyphs">0,1507</text>
<text x="1370.5" y="667.5" font-size="23" fill="#f0f0f0" textLength="48.2" lengthAdjust="spacingAndGlyphs">0,2225</text>
<text x="1447.5" y="667.5" font-size="23" fill="#f0f0f0" textLength="48.2" lengthAdjust="spacingAndGlyphs">0,3200</text>
<text x="1516" y="667.5" font-size="23" fill="#f0f0f0" textLength="48.2" lengthAdjust="spacingAndGlyphs">0,4185</text>
<text x="1593" y="667.5" font-size="23" fill="#f0f0f0" textLength="48.2" lengthAdjust="spacingAndGlyphs">0,3127</text>
<rect x="1008" y="677" width="599" height="35" fill="#727272"/>
<rect x="994" y="677" width="14" height="35" fill="url(#rhd)"/>
<line x1="994" y1="677.5" x2="1008" y2="677.5" stroke="#3a3a3a" stroke-width="1"/>
<text x="1012.5" y="702.5" font-size="23" fill="#f0f0f0" textLength="57.4" lengthAdjust="spacingAndGlyphs">y: CIE31</text>
<text x="1082.5" y="702.5" font-size="23" fill="#f0f0f0" textLength="48.2" lengthAdjust="spacingAndGlyphs">0,3293</text>
<text x="1159" y="702.5" font-size="23" fill="#f0f0f0" textLength="48.2" lengthAdjust="spacingAndGlyphs">0,3331</text>
<text x="1226.5" y="702.5" font-size="23" fill="#f0f0f0" textLength="48.2" lengthAdjust="spacingAndGlyphs">0,5976</text>
<text x="1303.5" y="702.5" font-size="23" fill="#f0f0f0" textLength="48.2" lengthAdjust="spacingAndGlyphs">0,0607</text>
<text x="1370.5" y="702.5" font-size="23" fill="#f0f0f0" textLength="48.2" lengthAdjust="spacingAndGlyphs">0,3270</text>
<text x="1447.5" y="702.5" font-size="23" fill="#f0f0f0" textLength="48.2" lengthAdjust="spacingAndGlyphs">0,1556</text>
<text x="1516" y="702.5" font-size="23" fill="#f0f0f0" textLength="48.2" lengthAdjust="spacingAndGlyphs">0,5044</text>
<text x="1593" y="702.5" font-size="23" fill="#f0f0f0" textLength="48.2" lengthAdjust="spacingAndGlyphs">0,3290</text>
<rect x="1008" y="712" width="599" height="35" fill="#454545"/>
<rect x="994" y="712" width="14" height="35" fill="url(#rhd)"/>
<line x1="994" y1="712.5" x2="1008" y2="712.5" stroke="#3a3a3a" stroke-width="1"/>
<text x="1012.5" y="737.5" font-size="23" fill="#f0f0f0" textLength="10.0" lengthAdjust="spacingAndGlyphs">Y</text>
<text x="1082.5" y="737.5" font-size="23" fill="#f0f0f0" textLength="65.7" lengthAdjust="spacingAndGlyphs">255,8415</text>
<text x="1159" y="737.5" font-size="23" fill="#f0f0f0" textLength="57.0" lengthAdjust="spacingAndGlyphs">55,7634</text>
<text x="1226.5" y="737.5" font-size="23" fill="#f0f0f0" textLength="65.7" lengthAdjust="spacingAndGlyphs">182,7252</text>
<text x="1303.5" y="737.5" font-size="23" fill="#f0f0f0" textLength="57.0" lengthAdjust="spacingAndGlyphs">18,5775</text>
<text x="1370.5" y="737.5" font-size="23" fill="#f0f0f0" textLength="65.7" lengthAdjust="spacingAndGlyphs">199,4480</text>
<text x="1447.5" y="737.5" font-size="23" fill="#f0f0f0" textLength="57.0" lengthAdjust="spacingAndGlyphs">73,2951</text>
<text x="1516" y="737.5" font-size="23" fill="#f0f0f0" textLength="64.5" lengthAdjust="spacingAndGlyphs">237,1169</text>
<text x="1593" y="737.5" font-size="23" fill="#f0f0f0" textLength="65.7" lengthAdjust="spacingAndGlyphs">487,3500</text>
<rect x="1008" y="747" width="599" height="35" fill="#727272"/>
<rect x="994" y="747" width="14" height="35" fill="url(#rhd)"/>
<line x1="994" y1="747.5" x2="1008" y2="747.5" stroke="#3a3a3a" stroke-width="1"/>
<text x="1012.5" y="772.5" font-size="23" fill="#f0f0f0" textLength="55.5" lengthAdjust="spacingAndGlyphs">Target Y</text>
<text x="1082.5" y="772.5" font-size="23" fill="#f0f0f0" textLength="65.7" lengthAdjust="spacingAndGlyphs">255,8415</text>
<text x="1159" y="772.5" font-size="23" fill="#f0f0f0" textLength="57.0" lengthAdjust="spacingAndGlyphs">54,4062</text>
<text x="1226.5" y="772.5" font-size="23" fill="#f0f0f0" textLength="65.7" lengthAdjust="spacingAndGlyphs">182,9672</text>
<text x="1303.5" y="772.5" font-size="23" fill="#f0f0f0" textLength="57.0" lengthAdjust="spacingAndGlyphs">18,4681</text>
<text x="1370.5" y="772.5" font-size="23" fill="#f0f0f0" textLength="65.7" lengthAdjust="spacingAndGlyphs">201,4353</text>
<text x="1447.5" y="772.5" font-size="23" fill="#f0f0f0" textLength="57.0" lengthAdjust="spacingAndGlyphs">72,8743</text>
<text x="1516" y="772.5" font-size="23" fill="#f0f0f0" textLength="65.7" lengthAdjust="spacingAndGlyphs">237,3735</text>
<text x="1593" y="772.5" font-size="23" fill="#f0f0f0" textLength="65.7" lengthAdjust="spacingAndGlyphs">487,3500</text>
<rect x="1008" y="782" width="599" height="35" fill="#454545"/>
<rect x="994" y="782" width="14" height="35" fill="url(#rhd)"/>
<line x1="994" y1="782.5" x2="1008" y2="782.5" stroke="#3a3a3a" stroke-width="1"/>
<text x="1012.5" y="807.5" font-size="23" fill="#f0f0f0" textLength="57.4" lengthAdjust="spacingAndGlyphs">ΔE 2000</text>
<text x="1082.5" y="807.5" font-size="23" fill="#f0f0f0" textLength="48.2" lengthAdjust="spacingAndGlyphs">1,1207</text>
<text x="1159" y="807.5" font-size="23" fill="#f0f0f0" textLength="48.2" lengthAdjust="spacingAndGlyphs">0,5049</text>
<text x="1226.5" y="807.5" font-size="23" fill="#f0f0f0" textLength="48.2" lengthAdjust="spacingAndGlyphs">0,2532</text>
<text x="1303.5" y="807.5" font-size="23" fill="#f0f0f0" textLength="48.2" lengthAdjust="spacingAndGlyphs">0,1316</text>
<text x="1370.5" y="807.5" font-size="23" fill="#f0f0f0" textLength="48.2" lengthAdjust="spacingAndGlyphs">0,4505</text>
<text x="1447.5" y="807.5" font-size="23" fill="#f0f0f0" textLength="48.2" lengthAdjust="spacingAndGlyphs">0,2812</text>
<text x="1516" y="807.5" font-size="23" fill="#f0f0f0" textLength="48.2" lengthAdjust="spacingAndGlyphs">0,1782</text>
<text x="1593" y="807.5" font-size="23" fill="#f0f0f0" textLength="48.2" lengthAdjust="spacingAndGlyphs">0,9200</text>
<text x="1082.5" y="631" font-size="21.5" fill="#f4f4f4" textLength="40.5" lengthAdjust="spacingAndGlyphs">White</text>
<text x="1159" y="631" font-size="21.5" fill="#f4f4f4" textLength="25.0" lengthAdjust="spacingAndGlyphs">Red</text>
<text x="1226.5" y="631" font-size="21.5" fill="#f4f4f4" textLength="41.0" lengthAdjust="spacingAndGlyphs">Green</text>
<text x="1303.5" y="631" font-size="21.5" fill="#f4f4f4" textLength="29.5" lengthAdjust="spacingAndGlyphs">Blue</text>
<text x="1370.5" y="631" font-size="21.5" fill="#f4f4f4" textLength="32.7" lengthAdjust="spacingAndGlyphs">Cyan</text>
<text x="1447.5" y="631" font-size="21.5" fill="#f4f4f4" textLength="60.0" lengthAdjust="spacingAndGlyphs">Magenta</text>
<text x="1516" y="631" font-size="21.5" fill="#f4f4f4" textLength="43.8" lengthAdjust="spacingAndGlyphs">Yellow</text>
<text x="1593" y="631" font-size="21.5" fill="#f4f4f4" textLength="35.0" lengthAdjust="spacingAndGlyphs">100W</text>
</g>
<rect x="1607.5" y="643.5" width="15.5" height="152" rx="3" fill="#5c5c5c"/>
<rect x="1609.5" y="667" width="11.5" height="82.5" rx="5.5" fill="#464646"/>
<rect x="1608.5" y="644.5" width="13.5" height="18" rx="3" fill="#7a7a7a"/>
<path d="M1610 658.5 l5.3 -8.5 l5.3 8.5 z" fill="#383838"/>
<rect x="1608.5" y="776.5" width="13.5" height="18" rx="3" fill="#7a7a7a"/>
<path d="M1610 781 l5.3 8.5 l5.3 -8.5 z" fill="#383838"/>
<path d="M1008.5 796 H1607 V818 H1012 Q1008.5 818 1008.5 814 Z" fill="#5c5c5c"/>
<rect x="1026.5" y="798" width="513" height="18" rx="9" fill="#464646"/>
<rect x="1009.5" y="798" width="13.5" height="18" rx="3" fill="#7a7a7a"/>
<path d="M1019.2 800.2 v13.3 l-5.4 -6.65 z" fill="#383838"/>
<rect x="1591" y="798" width="13.5" height="18" rx="3" fill="#7a7a7a"/>
<path d="M1595 800.2 v13.3 l5.4 -6.65 z" fill="#383838"/>
<path d="M4.4 902 V831 Q4.4 826.5 8.9 826.5 H155.4 Q159.9 826.5 159.9 831 V902 Z" fill="url(#bbg)"/>
<rect x="11.3" y="833.2" width="141.8" height="44" rx="4" fill="#bfbfbf" stroke="#00000055" stroke-width="1"/>
<text x="82.2" y="897" font-size="13" fill="#2c2c2c" textLength="35.4" lengthAdjust="spacingAndGlyphs" text-anchor="middle" font-weight="bold">White</text>
<path d="M162.4 902 V831 Q162.4 826.5 166.9 826.5 H313.4 Q317.9 826.5 317.9 831 V902 Z" fill="url(#bbg)"/>
<rect x="169.3" y="833.2" width="141.8" height="44" rx="4" fill="#c00000" stroke="#00000055" stroke-width="1"/>
<text x="240.2" y="897" font-size="13" fill="#2c2c2c" textLength="24.6" lengthAdjust="spacingAndGlyphs" text-anchor="middle" font-weight="bold">Red</text>
<path d="M320.4 902 V831 Q320.4 826.5 324.9 826.5 H471.4 Q475.9 826.5 475.9 831 V902 Z" fill="url(#bbg)"/>
<rect x="327.3" y="833.2" width="141.8" height="44" rx="4" fill="#00c000" stroke="#00000055" stroke-width="1"/>
<text x="398.2" y="897" font-size="13" fill="#2c2c2c" textLength="37.6" lengthAdjust="spacingAndGlyphs" text-anchor="middle" font-weight="bold">Green</text>
<path d="M478.4 902 V831 Q478.4 826.5 482.9 826.5 H629.4 Q633.9 826.5 633.9 831 V902 Z" fill="url(#bbg)"/>
<rect x="485.3" y="833.2" width="141.8" height="44" rx="4" fill="#0000c0" stroke="#00000055" stroke-width="1"/>
<text x="556.2" y="897" font-size="13" fill="#2c2c2c" textLength="28.2" lengthAdjust="spacingAndGlyphs" text-anchor="middle" font-weight="bold">Blue</text>
<path d="M636.4 902 V831 Q636.4 826.5 640.9 826.5 H787.4 Q791.9 826.5 791.9 831 V902 Z" fill="url(#bbg)"/>
<rect x="643.3" y="833.2" width="141.8" height="44" rx="4" fill="#00bfbf" stroke="#00000055" stroke-width="1"/>
<text x="714.2" y="897" font-size="13" fill="#2c2c2c" textLength="31.8" lengthAdjust="spacingAndGlyphs" text-anchor="middle" font-weight="bold">Cyan</text>
<path d="M794.4 902 V831 Q794.4 826.5 798.9 826.5 H945.4 Q949.9 826.5 949.9 831 V902 Z" fill="url(#bbg)"/>
<rect x="801.3" y="833.2" width="141.8" height="44" rx="4" fill="#bf00bf" stroke="#00000055" stroke-width="1"/>
<text x="872.2" y="897" font-size="13" fill="#2c2c2c" textLength="52.7" lengthAdjust="spacingAndGlyphs" text-anchor="middle" font-weight="bold">Magenta</text>
<path d="M952.4 902 V831 Q952.4 826.5 956.9 826.5 H1103.4 Q1107.9 826.5 1107.9 831 V902 Z" fill="url(#bbg)"/>
<rect x="959.3" y="833.2" width="141.8" height="44" rx="4" fill="#bfbf00" stroke="#00000055" stroke-width="1"/>
<text x="1030.2" y="897" font-size="13" fill="#2c2c2c" textLength="40.5" lengthAdjust="spacingAndGlyphs" text-anchor="middle" font-weight="bold">Yellow</text>
<path d="M1110.4 902 V831 Q1110.4 826.5 1114.9 826.5 H1261.4 Q1265.9 826.5 1265.9 831 V902 Z" fill="url(#bbs)"/>
<rect x="1117.3" y="833.2" width="141.8" height="44" rx="4" fill="#ffffff" stroke="#ffffff" stroke-width="1"/>
<text x="1188.2" y="897" font-size="13" fill="#ffffff" textLength="34.0" lengthAdjust="spacingAndGlyphs" text-anchor="middle" font-weight="bold">100W</text>
<path d="M1269.5 849 V830 Q1269.5 826 1274 826 H1329.5 V849 Z" fill="url(#cbg)"/>
<ellipse cx="1299.5" cy="838" rx="10" ry="9" fill="url(#cic)"/>
<path d="M1293.5 841 l6 -6.5 l6 6.5 z" fill="#2e2e2e"/>
<rect x="1269.5" y="850" width="60" height="52" fill="url(#cbg2)"/>
<rect x="1280.5" y="858.5" width="38" height="37" rx="5" fill="url(#stb)" stroke="#2a2a2a" stroke-width="2.4"/>
<rect x="1291" y="868" width="17" height="17" fill="#000000"/>
<rect x="1331" y="826" width="56.5" height="38" fill="url(#cbg)"/>
<circle cx="1359.2" cy="845" r="12" fill="url(#cic)"/>
<rect x="1354.75" y="840.5" width="9" height="9" fill="#3a3a3a"/>
<rect x="1388.5" y="826" width="55.5" height="38" fill="url(#cbg)"/>
<circle cx="1416.2" cy="845" r="12" fill="url(#cic)"/>
<path d="M1412.2 839.5 v11 l10 -5.5 z" fill="#333"/>
<rect x="1445" y="826" width="56" height="38" fill="url(#cbd)"/>
<circle cx="1473.0" cy="845" r="12" fill="url(#cic)"/>
<text x="1473" y="849.5" font-size="12.5" fill="#3a3a3a" text-anchor="middle" font-weight="bold">[↔]</text>
<rect x="1502" y="826" width="55" height="38" fill="url(#cbg)"/>
<circle cx="1529.5" cy="845" r="12" fill="url(#cic)"/>
<text x="1529.5" y="850.5" font-size="19" fill="#3a3a3a" text-anchor="middle" font-weight="bold">∞</text>
<rect x="1558" y="826" width="54.5" height="38" fill="url(#cbg)"/>
<circle cx="1585.2" cy="845" r="12" fill="url(#cic)"/>
<g transform="translate(1585.2,845)" fill="none" stroke="#3a3a3a" stroke-width="2.6"><path d="M-6 -1 A6 6 0 0 1 5 -3.5"/><path d="M6 1 A6 6 0 0 1 -5 3.5"/></g><path d="M1592.2 837 v6.5 h-6.5 z M1578.2 853 v-6.5 h6.5 z" fill="#3a3a3a"/>
<rect x="1330.5" y="865" width="169.5" height="37" fill="url(#cbg)"/>
<rect x="1502" y="865" width="166" height="37" fill="url(#cbg)"/>
<circle cx="1369" cy="884" r="11.5" fill="url(#cic)"/>
<circle cx="1635" cy="884" r="11.5" fill="url(#cic)"/>
<text x="1369" y="892.5" font-size="27" fill="#3c3c3c" text-anchor="middle">«</text>
<text x="1636" y="892.5" font-size="27" fill="#3c3c3c" text-anchor="middle">»</text>
<text x="1403" y="892.5" font-size="25.5" fill="#3c3c3c" textLength="62.0" lengthAdjust="spacingAndGlyphs" stroke="#3c3c3c" stroke-width="0.9">Back</text>
<text x="1536" y="892.5" font-size="25.5" fill="#3c3c3c" textLength="63.5" lengthAdjust="spacingAndGlyphs" stroke="#3c3c3c" stroke-width="0.9">Next</text>
<text x="1642" y="877" font-size="62" font-weight="bold" text-anchor="middle" fill="#151515" stroke="#151515" stroke-width="2.5" stroke-linejoin="round" opacity="0.8" style="font-family:'DejaVu Sans',sans-serif">*</text>
<text x="1640" y="875" font-size="62" font-weight="bold" text-anchor="middle" fill="#e80c0c" stroke="#e80c0c" stroke-width="2.5" stroke-linejoin="round" style="font-family:'DejaVu Sans',sans-serif">*</text>
</svg>
</body></html>
